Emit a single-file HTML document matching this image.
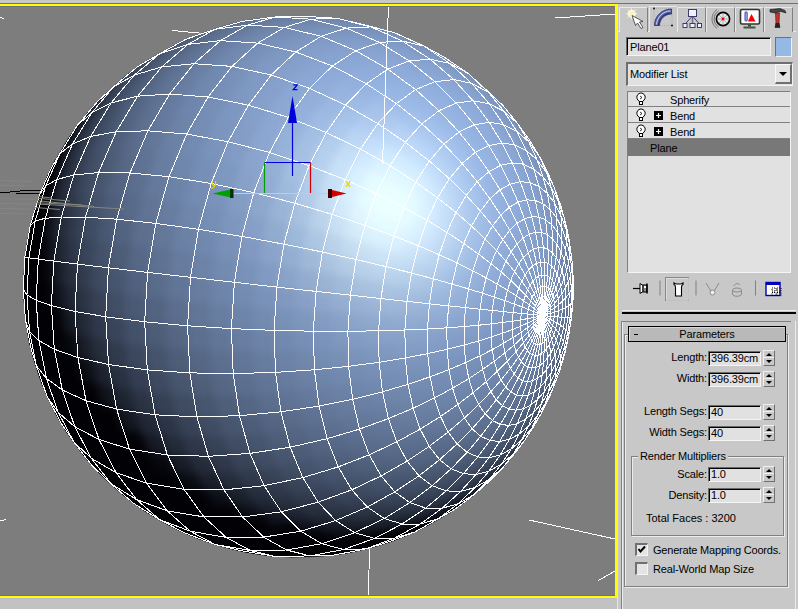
<!DOCTYPE html>
<html><head><meta charset="utf-8"><style>
html,body{margin:0;padding:0;}
body{width:798px;height:609px;position:relative;overflow:hidden;background:#c8c8c8;font-family:"Liberation Sans",sans-serif;font-size:11px;color:#000;}
#vp{position:absolute;left:0;top:7px;width:615px;height:589px;overflow:hidden;}
#vp svg{position:absolute;left:0;top:-7px;}
.a{position:absolute;}
.t{position:absolute;white-space:nowrap;line-height:13px;font-size:11px;letter-spacing:-0.15px;}
.r{text-align:right;}
.sunk{position:absolute;box-sizing:border-box;background:#e1e1e1;border-top:1px solid #6a6a6a;border-left:1px solid #6a6a6a;border-right:1px solid #f4f4f4;border-bottom:1px solid #f4f4f4;box-shadow:inset 1px 1px 0 #000;}
.spin{position:absolute;box-sizing:border-box;width:12px;height:16px;background:#c8c8c8;border-top:1px solid #f0f0f0;border-left:1px solid #f0f0f0;border-right:1px solid #707070;border-bottom:1px solid #707070;}
.spin:before{content:"";position:absolute;left:2px;top:2px;border-left:3px solid transparent;border-right:3px solid transparent;border-bottom:3px solid #000;}
.spin:after{content:"";position:absolute;left:2px;top:9px;border-left:3px solid transparent;border-right:3px solid transparent;border-top:3px solid #000;}
.spin i{position:absolute;left:0;top:6px;width:10px;height:1px;background:#f0f0f0;}
.tab{position:absolute;box-sizing:border-box;top:7px;width:29px;height:25px;border-top:1px solid #e8e8e8;border-left:1px solid #e8e8e8;border-right:1px solid #808080;background:#c8c8c8;}
.row{position:absolute;left:0;width:163px;height:16px;border-bottom:1px solid #808080;}
.hl{position:absolute;background:#ff0;}

</style></head><body>
<div id="vp"><svg width="615" height="609" viewBox="0 0 615 609">
<rect x="0" y="0" width="615" height="609" fill="#7d7d7d"/>
<g stroke="#fff" stroke-width="1" fill="none" shape-rendering="crispEdges">
<path d="M0 17.5L4 18.5"/>
<path d="M172.5 30.5L204 33.5"/>
<path d="M555 18L615 14"/>
<path d="M529 520L615 539"/>
<path d="M598.5 580.5L615 571"/>
<path d="M369.5 543L368.5 597"/>
<path d="M0 521L6 519.5"/>
</g>
<g stroke="#8a8a8a" stroke-width="1" fill="none" opacity="0.6">
<path d="M0 180.5L32 181.5"/><path d="M0 185.5L30 186"/><path d="M0 198.5L35 199.5"/><path d="M0 203.5L33 204"/><path d="M0 208.5L32 209"/><path d="M0 213.5L30 214"/>
</g>
<g stroke="#000" stroke-width="1" fill="none" shape-rendering="crispEdges">
<path d="M0 193L10 192L20 191L41 190"/>
<path d="M16 194L39 193.5"/>
</g>

<defs><filter id="bl" x="-5%" y="-5%" width="110%" height="110%" color-interpolation-filters="sRGB"><feGaussianBlur stdDeviation="4"/></filter>
<clipPath id="sc"><path d="M573.4 287.1 573.3 277.6 572.8 268.1 571.9 258.7 570.8 249.3 569.3 239.9 567.5 230.6 565.3 221.4 562.9 212.2 560.1 203.1 556.9 194.2 553.5 185.3 549.7 176.6 545.7 168.0 541.3 159.5 536.7 151.2 531.7 143.1 526.5 135.1 521.0 127.3 515.2 119.8 509.1 112.4 502.8 105.2 496.2 98.3 489.4 91.6 482.4 85.1 475.1 78.9 467.6 72.9 459.9 67.2 452.0 61.7 443.9 56.6 435.7 51.7 427.2 47.1 418.6 42.8 409.9 38.8 401.0 35.1 392.0 31.7 382.9 28.6 373.7 25.9 364.3 23.4 354.9 21.3 345.5 19.5 335.9 18.0 326.4 16.9 316.8 16.1 307.1 15.6 297.5 15.5 287.8 15.7 278.2 16.2 268.6 17.1 259.0 18.3 249.5 19.8 240.0 21.7 230.6 23.8 221.3 26.3 212.1 29.2 203.0 32.3 194.0 35.7 185.2 39.5 176.4 43.6 167.9 47.9 159.4 52.6 151.2 57.5 143.1 62.8 135.3 68.3 127.6 74.0 120.1 80.1 112.9 86.3 105.9 92.9 99.1 99.6 92.6 106.6 86.3 113.9 80.3 121.3 74.6 128.9 69.1 136.8 63.9 144.8 59.0 153.0 54.4 161.3 50.1 169.8 46.1 178.5 42.4 187.2 39.0 196.2 36.0 205.2 33.2 214.3 30.8 223.5 28.8 232.8 27.0 242.1 25.6 251.5 24.5 260.9 23.8 270.4 23.4 279.9 23.3 289.4 23.6 298.9 24.2 308.4 25.1 317.8 26.4 327.2 28.0 336.6 30.0 345.9 32.3 355.1 34.9 364.2 37.8 373.3 41.0 382.2 44.6 391.0 48.5 399.7 52.6 408.3 57.1 416.7 61.9 424.9 66.9 433.0 72.3 440.9 77.9 448.6 83.8 456.1 90.0 463.4 96.4 470.4 103.0 477.3 109.9 483.9 117.0 490.3 124.4 496.4 131.9 502.3 139.7 507.9 147.7 513.2 155.8 518.3 164.1 523.0 172.6 527.5 181.2 531.7 190.0 535.6 198.9 539.2 207.9 542.4 217.0 545.4 226.3 548.0 235.6 550.3 245.0 552.3 254.4 554.0 263.9 555.4 273.5 556.4 283.1 557.1 292.7 557.4 302.3 557.5 311.9 557.2 321.5 556.5 331.0 555.6 340.6 554.3 350.0 552.7 359.4 550.7 368.7 548.5 378.0 545.9 387.1 543.0 396.2 539.8 405.1 536.3 413.9 532.4 422.5 528.3 431.0 523.9 439.3 519.2 447.5 514.2 455.5 508.9 463.3 503.4 470.9 497.6 478.2 491.5 485.4 485.2 492.3 478.7 499.0 471.9 505.4 464.9 511.6 457.6 517.6 450.2 523.2 442.5 528.6 434.7 533.7 426.7 538.6 418.5 543.1 410.2 547.3 401.7 551.3 393.0 554.9 384.2 558.2 375.4 561.2 366.4 563.9 357.3 566.2 348.1 568.2 338.8 569.9 329.5 571.3 320.1 572.3 310.7 573.0 301.3 573.3 291.8 Z"/></clipPath></defs>
<g clip-path="url(#sc)"><g id="fc" stroke-width="0.8">
<path d="M542 315 542 315 540 316 540 315" fill="#768eb6" stroke="#768eb6"/>
<path d="M542 315 542 315 540 316 540 316" fill="#768eb6" stroke="#768eb6"/>
<path d="M540 315 540 316 537 316 537 315" fill="#7790b8" stroke="#7790b8"/>
<path d="M540 316 540 316 537 317 537 316" fill="#7790b8" stroke="#7790b8"/>
<path d="M542 315 542 315 540 317 540 316" fill="#768eb6" stroke="#768eb6"/>
<path d="M542 315 542 315 540 317 540 317" fill="#768eb6" stroke="#768eb6"/>
<path d="M540 316 540 317 537 318 537 317" fill="#778fb7" stroke="#778fb7"/>
<path d="M540 317 540 317 537 318 537 318" fill="#778fb7" stroke="#778fb7"/>
<path d="M542 315 542 315 540 317 540 317" fill="#768eb6" stroke="#768eb6"/>
<path d="M542 315 542 315 540 318 540 317" fill="#768eb6" stroke="#768eb6"/>
<path d="M540 317 540 317 537 319 537 318" fill="#778fb7" stroke="#778fb7"/>
<path d="M540 317 540 318 537 320 537 319" fill="#778fb7" stroke="#778fb7"/>
<path d="M542 315 542 315 540 318 540 318" fill="#768eb6" stroke="#768eb6"/>
<path d="M542 315 542 315 540 319 540 318" fill="#768eb5" stroke="#768eb5"/>
<path d="M540 318 540 318 537 321 537 320" fill="#768fb6" stroke="#768fb6"/>
<path d="M540 318 540 319 538 322 537 321" fill="#768eb6" stroke="#768eb6"/>
<path d="M542 315 542 315 540 319 540 319" fill="#768eb5" stroke="#768eb5"/>
<path d="M542 315 542 315 540 319 540 319" fill="#768eb5" stroke="#768eb5"/>
<path d="M540 319 540 319 538 322 538 322" fill="#768eb6" stroke="#768eb6"/>
<path d="M540 319 540 319 538 323 538 322" fill="#768eb5" stroke="#768eb5"/>
<path d="M542 315 542 315 540 320 540 319" fill="#768eb5" stroke="#768eb5"/>
<path d="M542 315 542 315 540 320 540 320" fill="#768eb5" stroke="#768eb5"/>
<path d="M540 319 540 320 538 324 538 323" fill="#768eb5" stroke="#768eb5"/>
<path d="M540 320 540 320 538 324 538 324" fill="#758db5" stroke="#758db5"/>
<path d="M542 315 542 315 541 320 540 320" fill="#758eb5" stroke="#758eb5"/>
<path d="M542 315 542 315 541 320 541 320" fill="#758db5" stroke="#758db5"/>
<path d="M540 320 541 320 539 325 538 324" fill="#758db4" stroke="#758db4"/>
<path d="M541 320 541 320 539 325 539 325" fill="#758db4" stroke="#758db4"/>
<path d="M542 315 542 315 541 320 541 320" fill="#758db5" stroke="#758db5"/>
<path d="M542 315 542 315 541 321 541 320" fill="#758db5" stroke="#758db5"/>
<path d="M541 320 541 320 539 325 539 325" fill="#758db4" stroke="#758db4"/>
<path d="M541 320 541 321 540 326 539 325" fill="#758cb4" stroke="#758cb4"/>
<path d="M542 315 542 315 541 321 541 321" fill="#758db5" stroke="#758db5"/>
<path d="M542 315 542 315 541 321 541 321" fill="#758db4" stroke="#758db4"/>
<path d="M541 321 541 321 540 326 540 326" fill="#748cb3" stroke="#748cb3"/>
<path d="M541 321 541 321 540 326 540 326" fill="#748cb3" stroke="#748cb3"/>
<path d="M542 315 542 315 542 321 541 321" fill="#758db4" stroke="#758db4"/>
<path d="M542 315 542 315 542 321 542 321" fill="#758db4" stroke="#758db4"/>
<path d="M541 321 542 321 541 326 540 326" fill="#748cb3" stroke="#748cb3"/>
<path d="M542 321 542 321 541 326 541 326" fill="#748cb3" stroke="#748cb3"/>
<path d="M542 315 542 315 542 321 542 321" fill="#758db4" stroke="#758db4"/>
<path d="M542 315 542 315 542 321 542 321" fill="#758db4" stroke="#758db4"/>
<path d="M542 321 542 321 541 326 541 326" fill="#748cb2" stroke="#748cb2"/>
<path d="M542 321 542 321 542 326 541 326" fill="#748bb2" stroke="#748bb2"/>
<path d="M542 315 542 315 542 321 542 321" fill="#758db4" stroke="#758db4"/>
<path d="M542 315 542 315 543 321 542 321" fill="#758db4" stroke="#758db4"/>
<path d="M542 321 542 321 542 326 542 326" fill="#738bb2" stroke="#738bb2"/>
<path d="M542 321 543 321 543 326 542 326" fill="#738bb2" stroke="#738bb2"/>
<path d="M542 315 542 315 543 321 543 321" fill="#758db4" stroke="#758db4"/>
<path d="M542 315 542 315 543 320 543 321" fill="#758db4" stroke="#758db4"/>
<path d="M543 321 543 321 543 326 543 326" fill="#738bb2" stroke="#738bb2"/>
<path d="M543 321 543 320 543 325 543 326" fill="#738bb2" stroke="#738bb2"/>
<path d="M542 315 542 315 543 320 543 320" fill="#758db4" stroke="#758db4"/>
<path d="M542 315 542 315 543 320 543 320" fill="#758db4" stroke="#758db4"/>
<path d="M543 320 543 320 544 325 543 325" fill="#738bb1" stroke="#738bb1"/>
<path d="M543 320 543 320 544 325 544 325" fill="#738bb1" stroke="#738bb1"/>
<path d="M542 315 542 315 544 320 543 320" fill="#758db4" stroke="#758db4"/>
<path d="M542 315 542 315 544 320 544 320" fill="#758db4" stroke="#758db4"/>
<path d="M543 320 544 320 545 324 544 325" fill="#738bb1" stroke="#738bb1"/>
<path d="M544 320 544 320 545 324 545 324" fill="#738bb1" stroke="#738bb1"/>
<path d="M542 315 542 315 544 319 544 320" fill="#758db4" stroke="#758db4"/>
<path d="M542 315 542 315 544 319 544 319" fill="#758db4" stroke="#758db4"/>
<path d="M544 320 544 319 545 323 545 324" fill="#738bb1" stroke="#738bb1"/>
<path d="M544 319 544 319 546 322 545 323" fill="#738bb1" stroke="#738bb1"/>
<path d="M542 315 542 315 544 319 544 319" fill="#758db4" stroke="#758db4"/>
<path d="M542 315 542 315 544 318 544 319" fill="#758db4" stroke="#758db4"/>
<path d="M544 319 544 319 546 322 546 322" fill="#738bb1" stroke="#738bb1"/>
<path d="M544 319 544 318 546 321 546 322" fill="#738bb1" stroke="#738bb1"/>
<path d="M542 315 542 315 545 318 544 318" fill="#758db4" stroke="#758db4"/>
<path d="M542 315 542 315 545 317 545 318" fill="#758db4" stroke="#758db4"/>
<path d="M544 318 545 318 546 320 546 321" fill="#738bb1" stroke="#738bb1"/>
<path d="M545 318 545 317 547 319 546 320" fill="#738bb2" stroke="#738bb2"/>
<path d="M542 315 542 315 545 317 545 317" fill="#758db4" stroke="#758db4"/>
<path d="M542 315 542 315 545 317 545 317" fill="#758db4" stroke="#758db4"/>
<path d="M545 317 545 317 547 318 547 319" fill="#738bb2" stroke="#738bb2"/>
<path d="M545 317 545 317 547 318 547 318" fill="#738bb2" stroke="#738bb2"/>
<path d="M542 315 542 315 545 316 545 317" fill="#758db4" stroke="#758db4"/>
<path d="M542 315 542 315 545 316 545 316" fill="#758db4" stroke="#758db4"/>
<path d="M545 317 545 316 547 317 547 318" fill="#738bb2" stroke="#738bb2"/>
<path d="M545 316 545 316 547 316 547 317" fill="#748bb2" stroke="#748bb2"/>
<path d="M542 315 542 315 545 315 545 316" fill="#758db4" stroke="#758db4"/>
<path d="M542 315 542 315 545 315 545 315" fill="#758db4" stroke="#758db4"/>
<path d="M545 316 545 315 547 315 547 316" fill="#748cb2" stroke="#748cb2"/>
<path d="M545 315 545 315 547 314 547 315" fill="#748cb3" stroke="#748cb3"/>
<path d="M542 315 542 315 545 314 545 315" fill="#758db4" stroke="#758db4"/>
<path d="M542 315 542 315 545 314 545 314" fill="#758db4" stroke="#758db4"/>
<path d="M545 315 545 314 547 313 547 314" fill="#748cb3" stroke="#748cb3"/>
<path d="M545 314 545 314 547 313 547 313" fill="#748cb3" stroke="#748cb3"/>
<path d="M542 315 542 315 545 314 545 314" fill="#758db5" stroke="#758db5"/>
<path d="M542 315 542 315 545 313 545 314" fill="#758db5" stroke="#758db5"/>
<path d="M545 314 545 314 547 312 547 313" fill="#748cb3" stroke="#748cb3"/>
<path d="M545 314 545 313 547 311 547 312" fill="#758db4" stroke="#758db4"/>
<path d="M542 315 542 315 545 313 545 313" fill="#758db5" stroke="#758db5"/>
<path d="M542 315 542 315 545 312 545 313" fill="#758db5" stroke="#758db5"/>
<path d="M545 313 545 313 547 310 547 311" fill="#758db4" stroke="#758db4"/>
<path d="M545 313 545 312 547 309 547 310" fill="#758db4" stroke="#758db4"/>
<path d="M542 315 542 315 545 312 545 312" fill="#758eb5" stroke="#758eb5"/>
<path d="M542 315 542 315 545 312 545 312" fill="#768eb5" stroke="#768eb5"/>
<path d="M545 312 545 312 547 309 547 309" fill="#758db4" stroke="#758db4"/>
<path d="M545 312 545 312 547 308 547 309" fill="#758db5" stroke="#758db5"/>
<path d="M542 315 542 315 545 312 545 312" fill="#768eb5" stroke="#768eb5"/>
<path d="M542 315 542 315 544 311 545 312" fill="#768eb5" stroke="#768eb5"/>
<path d="M545 312 545 312 547 308 547 308" fill="#768eb5" stroke="#768eb5"/>
<path d="M545 312 544 311 546 307 547 308" fill="#768eb5" stroke="#768eb5"/>
<path d="M542 315 542 315 544 311 544 311" fill="#768eb5" stroke="#768eb5"/>
<path d="M542 315 542 315 544 311 544 311" fill="#768eb5" stroke="#768eb5"/>
<path d="M544 311 544 311 546 306 546 307" fill="#768eb6" stroke="#768eb6"/>
<path d="M544 311 544 311 546 306 546 306" fill="#768eb6" stroke="#768eb6"/>
<path d="M542 315 542 315 544 311 544 311" fill="#768eb6" stroke="#768eb6"/>
<path d="M542 315 542 315 544 310 544 311" fill="#768eb6" stroke="#768eb6"/>
<path d="M544 311 544 311 545 306 546 306" fill="#768fb6" stroke="#768fb6"/>
<path d="M544 311 544 310 545 305 545 306" fill="#778fb7" stroke="#778fb7"/>
<path d="M542 315 542 315 544 310 544 310" fill="#768eb6" stroke="#768eb6"/>
<path d="M542 315 542 315 543 310 544 310" fill="#768eb6" stroke="#768eb6"/>
<path d="M544 310 544 310 545 305 545 305" fill="#778fb7" stroke="#778fb7"/>
<path d="M544 310 543 310 544 305 545 305" fill="#778fb7" stroke="#778fb7"/>
<path d="M542 315 542 315 543 310 543 310" fill="#768eb6" stroke="#768eb6"/>
<path d="M542 315 542 315 543 310 543 310" fill="#768eb6" stroke="#768eb6"/>
<path d="M543 310 543 310 544 305 544 305" fill="#778fb7" stroke="#778fb7"/>
<path d="M543 310 543 310 544 305 544 305" fill="#7790b8" stroke="#7790b8"/>
<path d="M542 315 542 315 543 310 543 310" fill="#768eb6" stroke="#768eb6"/>
<path d="M542 315 542 315 543 310 543 310" fill="#768fb6" stroke="#768fb6"/>
<path d="M543 310 543 310 543 305 544 305" fill="#7790b8" stroke="#7790b8"/>
<path d="M543 310 543 310 543 305 543 305" fill="#7790b8" stroke="#7790b8"/>
<path d="M542 315 542 315 542 310 543 310" fill="#768fb6" stroke="#768fb6"/>
<path d="M542 315 542 315 542 310 542 310" fill="#768fb6" stroke="#768fb6"/>
<path d="M543 310 542 310 542 305 543 305" fill="#7890b8" stroke="#7890b8"/>
<path d="M542 310 542 310 542 305 542 305" fill="#7890b8" stroke="#7890b8"/>
<path d="M542 315 542 315 542 310 542 310" fill="#768fb6" stroke="#768fb6"/>
<path d="M542 315 542 315 542 311 542 310" fill="#768fb6" stroke="#768fb6"/>
<path d="M542 310 542 310 542 305 542 305" fill="#7890b8" stroke="#7890b8"/>
<path d="M542 310 542 311 541 305 542 305" fill="#7891b9" stroke="#7891b9"/>
<path d="M542 315 542 315 542 311 542 311" fill="#768fb6" stroke="#768fb6"/>
<path d="M542 315 542 315 542 311 542 311" fill="#768fb6" stroke="#768fb6"/>
<path d="M542 311 542 311 541 306 541 305" fill="#7891b9" stroke="#7891b9"/>
<path d="M542 311 542 311 540 306 541 306" fill="#7891b9" stroke="#7891b9"/>
<path d="M542 315 542 315 541 311 542 311" fill="#768fb6" stroke="#768fb6"/>
<path d="M542 315 542 315 541 311 541 311" fill="#768fb6" stroke="#768fb6"/>
<path d="M542 311 541 311 540 307 540 306" fill="#7891b9" stroke="#7891b9"/>
<path d="M541 311 541 311 540 307 540 307" fill="#7891b9" stroke="#7891b9"/>
<path d="M542 315 542 315 541 312 541 311" fill="#768fb6" stroke="#768fb6"/>
<path d="M542 315 542 315 541 312 541 312" fill="#768fb6" stroke="#768fb6"/>
<path d="M541 311 541 312 539 308 540 307" fill="#7891b9" stroke="#7891b9"/>
<path d="M541 312 541 312 539 309 539 308" fill="#7891b9" stroke="#7891b9"/>
<path d="M542 315 542 315 541 312 541 312" fill="#768fb6" stroke="#768fb6"/>
<path d="M542 315 542 315 541 313 541 312" fill="#768fb6" stroke="#768fb6"/>
<path d="M541 312 541 312 539 309 539 309" fill="#7891b9" stroke="#7891b9"/>
<path d="M541 312 541 313 538 310 539 309" fill="#7891b9" stroke="#7891b9"/>
<path d="M542 315 542 315 540 313 541 313" fill="#768fb6" stroke="#768fb6"/>
<path d="M542 315 542 315 540 314 540 313" fill="#768fb6" stroke="#768fb6"/>
<path d="M541 313 540 313 538 311 538 310" fill="#7891b9" stroke="#7891b9"/>
<path d="M540 313 540 314 538 312 538 311" fill="#7891b9" stroke="#7891b9"/>
<path d="M542 315 542 315 540 314 540 314" fill="#768fb6" stroke="#768fb6"/>
<path d="M542 315 542 315 540 314 540 314" fill="#768fb6" stroke="#768fb6"/>
<path d="M540 314 540 314 538 312 538 312" fill="#7890b8" stroke="#7890b8"/>
<path d="M540 314 540 314 538 313 538 312" fill="#7890b8" stroke="#7890b8"/>
<path d="M542 315 542 315 540 315 540 314" fill="#768fb6" stroke="#768fb6"/>
<path d="M542 315 542 315 540 315 540 315" fill="#768fb6" stroke="#768fb6"/>
<path d="M540 314 540 315 537 314 538 313" fill="#7890b8" stroke="#7890b8"/>
<path d="M540 315 540 315 537 315 537 314" fill="#7790b8" stroke="#7790b8"/>
<path d="M537 315 537 316 535 316 535 315" fill="#7891b9" stroke="#7891b9"/>
<path d="M537 316 537 317 535 317 535 316" fill="#7891b9" stroke="#7891b9"/>
<path d="M535 315 535 316 533 316 533 315" fill="#7992ba" stroke="#7992ba"/>
<path d="M535 316 535 317 533 318 533 316" fill="#7992ba" stroke="#7992ba"/>
<path d="M537 317 537 318 535 318 535 317" fill="#7890b8" stroke="#7890b8"/>
<path d="M537 318 537 318 535 319 535 318" fill="#7890b8" stroke="#7890b8"/>
<path d="M535 317 535 318 533 319 533 318" fill="#7891b9" stroke="#7891b9"/>
<path d="M535 318 535 319 533 321 533 319" fill="#7891b9" stroke="#7891b9"/>
<path d="M537 318 537 319 535 321 535 319" fill="#7790b8" stroke="#7790b8"/>
<path d="M537 319 537 320 535 322 535 321" fill="#778fb7" stroke="#778fb7"/>
<path d="M535 319 535 321 533 322 533 321" fill="#7890b8" stroke="#7890b8"/>
<path d="M535 321 535 322 533 323 533 322" fill="#7790b8" stroke="#7790b8"/>
<path d="M537 320 537 321 535 323 535 322" fill="#778fb7" stroke="#778fb7"/>
<path d="M537 321 538 322 536 324 535 323" fill="#768fb6" stroke="#768fb6"/>
<path d="M535 322 535 323 533 325 533 323" fill="#778fb7" stroke="#778fb7"/>
<path d="M535 323 536 324 534 326 533 325" fill="#778fb7" stroke="#778fb7"/>
<path d="M538 322 538 322 536 325 536 324" fill="#768eb6" stroke="#768eb6"/>
<path d="M538 322 538 323 536 326 536 325" fill="#768eb5" stroke="#768eb5"/>
<path d="M536 324 536 325 534 327 534 326" fill="#768eb6" stroke="#768eb6"/>
<path d="M536 325 536 326 534 328 534 327" fill="#768eb5" stroke="#768eb5"/>
<path d="M538 323 538 324 536 326 536 326" fill="#758eb5" stroke="#758eb5"/>
<path d="M538 324 538 324 537 327 536 326" fill="#758db4" stroke="#758db4"/>
<path d="M536 326 536 326 535 329 534 328" fill="#758db5" stroke="#758db5"/>
<path d="M536 326 537 327 535 330 535 329" fill="#758db4" stroke="#758db4"/>
<path d="M538 324 539 325 537 328 537 327" fill="#758db4" stroke="#758db4"/>
<path d="M539 325 539 325 537 328 537 328" fill="#758cb4" stroke="#758cb4"/>
<path d="M537 327 537 328 536 331 535 330" fill="#758cb4" stroke="#758cb4"/>
<path d="M537 328 537 328 536 332 536 331" fill="#748cb3" stroke="#748cb3"/>
<path d="M539 325 539 325 538 329 537 328" fill="#748cb3" stroke="#748cb3"/>
<path d="M539 325 540 326 538 329 538 329" fill="#748cb3" stroke="#748cb3"/>
<path d="M537 328 538 329 537 333 536 332" fill="#748cb2" stroke="#748cb2"/>
<path d="M538 329 538 329 537 333 537 333" fill="#738bb2" stroke="#738bb2"/>
<path d="M540 326 540 326 539 330 538 329" fill="#748bb2" stroke="#748bb2"/>
<path d="M540 326 540 326 539 330 539 330" fill="#738bb2" stroke="#738bb2"/>
<path d="M538 329 539 330 538 334 537 333" fill="#738bb1" stroke="#738bb1"/>
<path d="M539 330 539 330 538 334 538 334" fill="#738ab1" stroke="#738ab1"/>
<path d="M540 326 541 326 540 330 539 330" fill="#738bb1" stroke="#738bb1"/>
<path d="M541 326 541 326 540 330 540 330" fill="#738ab1" stroke="#738ab1"/>
<path d="M539 330 540 330 539 334 538 334" fill="#728ab0" stroke="#728ab0"/>
<path d="M540 330 540 330 540 334 539 334" fill="#7289b0" stroke="#7289b0"/>
<path d="M541 326 541 326 541 330 540 330" fill="#738ab1" stroke="#738ab1"/>
<path d="M541 326 542 326 541 330 541 330" fill="#728ab0" stroke="#728ab0"/>
<path d="M540 330 541 330 540 334 540 334" fill="#7289af" stroke="#7289af"/>
<path d="M541 330 541 330 541 334 540 334" fill="#7189af" stroke="#7189af"/>
<path d="M542 326 542 326 542 330 541 330" fill="#728ab0" stroke="#728ab0"/>
<path d="M542 326 543 326 543 330 542 330" fill="#7289b0" stroke="#7289b0"/>
<path d="M541 330 542 330 542 334 541 334" fill="#7188ae" stroke="#7188ae"/>
<path d="M542 330 543 330 542 334 542 334" fill="#7188ae" stroke="#7188ae"/>
<path d="M543 326 543 326 543 329 543 330" fill="#7289b0" stroke="#7289b0"/>
<path d="M543 326 543 325 544 329 543 329" fill="#7289af" stroke="#7289af"/>
<path d="M543 330 543 329 543 333 542 334" fill="#7188ae" stroke="#7188ae"/>
<path d="M543 329 544 329 544 333 543 333" fill="#7188ae" stroke="#7188ae"/>
<path d="M543 325 544 325 544 328 544 329" fill="#7289af" stroke="#7289af"/>
<path d="M544 325 544 325 545 328 544 328" fill="#7289af" stroke="#7289af"/>
<path d="M544 329 544 328 545 332 544 333" fill="#7087ad" stroke="#7087ad"/>
<path d="M544 328 545 328 545 331 545 332" fill="#7087ad" stroke="#7087ad"/>
<path d="M544 325 545 324 545 327 545 328" fill="#7289af" stroke="#7289af"/>
<path d="M545 324 545 324 546 326 545 327" fill="#7189af" stroke="#7189af"/>
<path d="M545 328 545 327 546 330 545 331" fill="#7087ad" stroke="#7087ad"/>
<path d="M545 327 546 326 546 329 546 330" fill="#7087ad" stroke="#7087ad"/>
<path d="M545 324 545 323 546 326 546 326" fill="#7189af" stroke="#7189af"/>
<path d="M545 323 546 322 547 325 546 326" fill="#7189af" stroke="#7189af"/>
<path d="M546 326 546 326 547 328 546 329" fill="#7087ad" stroke="#7087ad"/>
<path d="M546 326 547 325 548 327 547 328" fill="#7087ad" stroke="#7087ad"/>
<path d="M546 322 546 322 547 324 547 325" fill="#7289af" stroke="#7289af"/>
<path d="M546 322 546 321 547 323 547 324" fill="#7289af" stroke="#7289af"/>
<path d="M547 325 547 324 548 326 548 327" fill="#7087ad" stroke="#7087ad"/>
<path d="M547 324 547 323 549 325 548 326" fill="#7087ad" stroke="#7087ad"/>
<path d="M546 321 546 320 548 322 547 323" fill="#7289af" stroke="#7289af"/>
<path d="M546 320 547 319 548 321 548 322" fill="#7289af" stroke="#7289af"/>
<path d="M547 323 548 322 549 323 549 325" fill="#7087ad" stroke="#7087ad"/>
<path d="M548 322 548 321 549 322 549 323" fill="#7188ae" stroke="#7188ae"/>
<path d="M547 319 547 318 548 320 548 321" fill="#7289b0" stroke="#7289b0"/>
<path d="M547 318 547 318 549 318 548 320" fill="#7289b0" stroke="#7289b0"/>
<path d="M548 321 548 320 550 321 549 322" fill="#7188ae" stroke="#7188ae"/>
<path d="M548 320 549 318 550 319 550 321" fill="#7188ae" stroke="#7188ae"/>
<path d="M547 318 547 317 549 317 549 318" fill="#728ab0" stroke="#728ab0"/>
<path d="M547 317 547 316 549 316 549 317" fill="#728ab0" stroke="#728ab0"/>
<path d="M549 318 549 317 550 318 550 319" fill="#7188ae" stroke="#7188ae"/>
<path d="M549 317 549 316 550 316 550 318" fill="#7189af" stroke="#7189af"/>
<path d="M547 316 547 315 549 315 549 316" fill="#738ab1" stroke="#738ab1"/>
<path d="M547 315 547 314 549 314 549 315" fill="#738ab1" stroke="#738ab1"/>
<path d="M549 316 549 315 551 315 550 316" fill="#7289af" stroke="#7289af"/>
<path d="M549 315 549 314 551 313 551 315" fill="#7289b0" stroke="#7289b0"/>
<path d="M547 314 547 313 549 313 549 314" fill="#738bb1" stroke="#738bb1"/>
<path d="M547 313 547 313 549 312 549 313" fill="#738bb2" stroke="#738bb2"/>
<path d="M549 314 549 313 551 312 551 313" fill="#728ab0" stroke="#728ab0"/>
<path d="M549 313 549 312 551 310 551 312" fill="#738ab1" stroke="#738ab1"/>
<path d="M547 313 547 312 549 310 549 312" fill="#748bb2" stroke="#748bb2"/>
<path d="M547 312 547 311 549 309 549 310" fill="#748cb3" stroke="#748cb3"/>
<path d="M549 312 549 310 551 309 551 310" fill="#738bb1" stroke="#738bb1"/>
<path d="M549 310 549 309 551 308 551 309" fill="#738bb2" stroke="#738bb2"/>
<path d="M547 311 547 310 549 308 549 309" fill="#748cb3" stroke="#748cb3"/>
<path d="M547 310 547 309 549 307 549 308" fill="#758cb4" stroke="#758cb4"/>
<path d="M549 309 549 308 550 306 551 308" fill="#748cb2" stroke="#748cb2"/>
<path d="M549 308 549 307 550 305 550 306" fill="#748cb3" stroke="#748cb3"/>
<path d="M547 309 547 309 548 306 549 307" fill="#758db4" stroke="#758db4"/>
<path d="M547 309 547 308 548 305 548 306" fill="#758db5" stroke="#758db5"/>
<path d="M549 307 548 306 550 304 550 305" fill="#758db4" stroke="#758db4"/>
<path d="M548 306 548 305 550 303 550 304" fill="#758db4" stroke="#758db4"/>
<path d="M547 308 547 308 548 305 548 305" fill="#768eb5" stroke="#768eb5"/>
<path d="M547 308 546 307 548 304 548 305" fill="#768eb5" stroke="#768eb5"/>
<path d="M548 305 548 305 549 302 550 303" fill="#758eb5" stroke="#758eb5"/>
<path d="M548 305 548 304 549 301 549 302" fill="#768eb6" stroke="#768eb6"/>
<path d="M546 307 546 306 547 303 548 304" fill="#768eb6" stroke="#768eb6"/>
<path d="M546 306 546 306 547 303 547 303" fill="#768fb6" stroke="#768fb6"/>
<path d="M548 304 547 303 548 300 549 301" fill="#768fb6" stroke="#768fb6"/>
<path d="M547 303 547 303 548 299 548 300" fill="#778fb7" stroke="#778fb7"/>
<path d="M546 306 545 306 546 302 547 303" fill="#778fb7" stroke="#778fb7"/>
<path d="M545 306 545 305 546 302 546 302" fill="#778fb7" stroke="#778fb7"/>
<path d="M547 303 546 302 547 298 548 299" fill="#778fb7" stroke="#778fb7"/>
<path d="M546 302 546 302 547 298 547 298" fill="#7790b8" stroke="#7790b8"/>
<path d="M545 305 545 305 545 301 546 302" fill="#7790b8" stroke="#7790b8"/>
<path d="M545 305 544 305 545 301 545 301" fill="#7890b8" stroke="#7890b8"/>
<path d="M546 302 545 301 546 297 547 298" fill="#7890b8" stroke="#7890b8"/>
<path d="M545 301 545 301 545 297 546 297" fill="#7891b9" stroke="#7891b9"/>
<path d="M544 305 544 305 544 301 545 301" fill="#7890b9" stroke="#7890b9"/>
<path d="M544 305 544 305 544 301 544 301" fill="#7891b9" stroke="#7891b9"/>
<path d="M545 301 544 301 545 297 545 297" fill="#7991ba" stroke="#7991ba"/>
<path d="M544 301 544 301 544 297 545 297" fill="#7992ba" stroke="#7992ba"/>
<path d="M544 305 543 305 543 301 544 301" fill="#7891b9" stroke="#7891b9"/>
<path d="M543 305 543 305 543 301 543 301" fill="#7991ba" stroke="#7991ba"/>
<path d="M544 301 543 301 543 297 544 297" fill="#7992ba" stroke="#7992ba"/>
<path d="M543 301 543 301 543 297 543 297" fill="#7992bb" stroke="#7992bb"/>
<path d="M543 305 542 305 542 301 543 301" fill="#7992ba" stroke="#7992ba"/>
<path d="M542 305 542 305 542 301 542 301" fill="#7992ba" stroke="#7992ba"/>
<path d="M543 301 542 301 542 297 543 297" fill="#7a93bb" stroke="#7a93bb"/>
<path d="M542 301 542 301 541 297 542 297" fill="#7a93bc" stroke="#7a93bc"/>
<path d="M542 305 542 305 541 301 542 301" fill="#7992ba" stroke="#7992ba"/>
<path d="M542 305 541 305 541 302 541 301" fill="#7992bb" stroke="#7992bb"/>
<path d="M542 301 541 301 541 298 541 297" fill="#7a93bc" stroke="#7a93bc"/>
<path d="M541 301 541 302 540 298 541 298" fill="#7a93bc" stroke="#7a93bc"/>
<path d="M541 305 541 306 540 302 541 302" fill="#7992bb" stroke="#7992bb"/>
<path d="M541 306 540 306 540 303 540 302" fill="#7992bb" stroke="#7992bb"/>
<path d="M541 302 540 302 539 299 540 298" fill="#7a94bc" stroke="#7a94bc"/>
<path d="M540 302 540 303 539 300 539 299" fill="#7b94bd" stroke="#7b94bd"/>
<path d="M540 306 540 307 539 304 540 303" fill="#7992bb" stroke="#7992bb"/>
<path d="M540 307 540 307 539 304 539 304" fill="#7992bb" stroke="#7992bb"/>
<path d="M540 303 539 304 538 300 539 300" fill="#7b94bd" stroke="#7b94bd"/>
<path d="M539 304 539 304 537 301 538 300" fill="#7b94bd" stroke="#7b94bd"/>
<path d="M540 307 539 308 538 305 539 304" fill="#7992bb" stroke="#7992bb"/>
<path d="M539 308 539 309 538 306 538 305" fill="#7992bb" stroke="#7992bb"/>
<path d="M539 304 538 305 537 302 537 301" fill="#7b94bd" stroke="#7b94bd"/>
<path d="M538 305 538 306 536 304 537 302" fill="#7b94bd" stroke="#7b94bd"/>
<path d="M539 309 539 309 537 307 538 306" fill="#7992bb" stroke="#7992bb"/>
<path d="M539 309 538 310 537 308 537 307" fill="#7992bb" stroke="#7992bb"/>
<path d="M538 306 537 307 536 305 536 304" fill="#7b94bd" stroke="#7b94bd"/>
<path d="M537 307 537 308 535 306 536 305" fill="#7b94bd" stroke="#7b94bd"/>
<path d="M538 310 538 311 537 309 537 308" fill="#7992bb" stroke="#7992bb"/>
<path d="M538 311 538 312 536 310 537 309" fill="#7992bb" stroke="#7992bb"/>
<path d="M537 308 537 309 535 307 535 306" fill="#7a94bc" stroke="#7a94bc"/>
<path d="M537 309 536 310 534 309 535 307" fill="#7a93bc" stroke="#7a93bc"/>
<path d="M538 312 538 312 536 311 536 310" fill="#7992ba" stroke="#7992ba"/>
<path d="M538 312 538 313 536 312 536 311" fill="#7992ba" stroke="#7992ba"/>
<path d="M536 310 536 311 534 310 534 309" fill="#7a93bc" stroke="#7a93bc"/>
<path d="M536 311 536 312 534 312 534 310" fill="#7a93bc" stroke="#7a93bc"/>
<path d="M538 313 537 314 535 314 536 312" fill="#7991ba" stroke="#7991ba"/>
<path d="M537 314 537 315 535 315 535 314" fill="#7991ba" stroke="#7991ba"/>
<path d="M536 312 535 314 533 313 534 312" fill="#7a93bb" stroke="#7a93bb"/>
<path d="M535 314 535 315 533 315 533 313" fill="#7992bb" stroke="#7992bb"/>
<path d="M533 315 533 316 530 316 530 314" fill="#7a93bc" stroke="#7a93bc"/>
<path d="M533 316 533 318 530 318 530 316" fill="#7a93bb" stroke="#7a93bb"/>
<path d="M530 314 530 316 527 316 528 314" fill="#7b94bd" stroke="#7b94bd"/>
<path d="M530 316 530 318 527 319 527 316" fill="#7a94bc" stroke="#7a94bc"/>
<path d="M533 318 533 319 530 320 530 318" fill="#7992bb" stroke="#7992bb"/>
<path d="M533 319 533 321 530 322 530 320" fill="#7992ba" stroke="#7992ba"/>
<path d="M530 318 530 320 527 321 527 319" fill="#7a93bc" stroke="#7a93bc"/>
<path d="M530 320 530 322 527 323 527 321" fill="#7992bb" stroke="#7992bb"/>
<path d="M533 321 533 322 530 324 530 322" fill="#7891b9" stroke="#7891b9"/>
<path d="M533 322 533 323 530 325 530 324" fill="#7890b8" stroke="#7890b8"/>
<path d="M530 322 530 324 527 326 527 323" fill="#7992ba" stroke="#7992ba"/>
<path d="M530 324 530 325 528 328 527 326" fill="#7891b9" stroke="#7891b9"/>
<path d="M533 323 533 325 531 327 530 325" fill="#7790b8" stroke="#7790b8"/>
<path d="M533 325 534 326 531 329 531 327" fill="#778fb7" stroke="#778fb7"/>
<path d="M530 325 531 327 528 330 528 328" fill="#7890b8" stroke="#7890b8"/>
<path d="M531 327 531 329 528 332 528 330" fill="#778fb7" stroke="#778fb7"/>
<path d="M534 326 534 327 531 330 531 329" fill="#768fb6" stroke="#768fb6"/>
<path d="M534 327 534 328 532 332 531 330" fill="#768eb5" stroke="#768eb5"/>
<path d="M531 329 531 330 529 334 528 332" fill="#768fb6" stroke="#768fb6"/>
<path d="M531 330 532 332 529 335 529 334" fill="#768eb5" stroke="#768eb5"/>
<path d="M534 328 535 329 532 333 532 332" fill="#758db5" stroke="#758db5"/>
<path d="M535 329 535 330 533 334 532 333" fill="#758db4" stroke="#758db4"/>
<path d="M532 332 532 333 530 337 529 335" fill="#758db4" stroke="#758db4"/>
<path d="M532 333 533 334 530 338 530 337" fill="#748cb3" stroke="#748cb3"/>
<path d="M535 330 536 331 533 335 533 334" fill="#748cb3" stroke="#748cb3"/>
<path d="M536 331 536 332 534 336 533 335" fill="#748bb2" stroke="#748bb2"/>
<path d="M533 334 533 335 531 340 530 338" fill="#748cb2" stroke="#748cb2"/>
<path d="M533 335 534 336 532 341 531 340" fill="#738bb1" stroke="#738bb1"/>
<path d="M536 332 537 333 535 337 534 336" fill="#738bb2" stroke="#738bb2"/>
<path d="M537 333 537 333 535 338 535 337" fill="#738ab1" stroke="#738ab1"/>
<path d="M534 336 535 337 533 342 532 341" fill="#738ab1" stroke="#738ab1"/>
<path d="M535 337 535 338 534 343 533 342" fill="#7289b0" stroke="#7289b0"/>
<path d="M537 333 538 334 536 339 535 338" fill="#728ab0" stroke="#728ab0"/>
<path d="M538 334 538 334 537 339 536 339" fill="#7289af" stroke="#7289af"/>
<path d="M535 338 536 339 535 344 534 343" fill="#7189af" stroke="#7189af"/>
<path d="M536 339 537 339 536 344 535 344" fill="#7188ae" stroke="#7188ae"/>
<path d="M538 334 539 334 538 339 537 339" fill="#7189af" stroke="#7189af"/>
<path d="M539 334 540 334 539 339 538 339" fill="#7188ae" stroke="#7188ae"/>
<path d="M537 339 538 339 537 344 536 344" fill="#7087ad" stroke="#7087ad"/>
<path d="M538 339 539 339 538 345 537 344" fill="#7087ac" stroke="#7087ac"/>
<path d="M540 334 540 334 540 339 539 339" fill="#7188ae" stroke="#7188ae"/>
<path d="M540 334 541 334 541 339 540 339" fill="#7087ad" stroke="#7087ad"/>
<path d="M539 339 540 339 539 345 538 345" fill="#6f86ac" stroke="#6f86ac"/>
<path d="M540 339 541 339 540 344 539 345" fill="#6f86ab" stroke="#6f86ab"/>
<path d="M541 334 542 334 541 339 541 339" fill="#7087ad" stroke="#7087ad"/>
<path d="M542 334 542 334 542 338 541 339" fill="#7086ac" stroke="#7086ac"/>
<path d="M541 339 541 339 541 344 540 344" fill="#6e85aa" stroke="#6e85aa"/>
<path d="M541 339 542 338 542 343 541 344" fill="#6e85aa" stroke="#6e85aa"/>
<path d="M542 334 543 333 543 338 542 338" fill="#6f86ac" stroke="#6f86ac"/>
<path d="M543 333 544 333 544 337 543 338" fill="#6f86ab" stroke="#6f86ab"/>
<path d="M542 338 543 338 543 343 542 343" fill="#6e84a9" stroke="#6e84a9"/>
<path d="M543 338 544 337 544 342 543 343" fill="#6d84a9" stroke="#6d84a9"/>
<path d="M544 333 545 332 545 336 544 337" fill="#6f86ab" stroke="#6f86ab"/>
<path d="M545 332 545 331 546 335 545 336" fill="#6f86ab" stroke="#6f86ab"/>
<path d="M544 337 545 336 545 341 544 342" fill="#6d84a9" stroke="#6d84a9"/>
<path d="M545 336 546 335 546 339 545 341" fill="#6d83a8" stroke="#6d83a8"/>
<path d="M545 331 546 330 547 334 546 335" fill="#6f85ab" stroke="#6f85ab"/>
<path d="M546 330 546 329 547 333 547 334" fill="#6f85ab" stroke="#6f85ab"/>
<path d="M546 335 547 334 547 338 546 339" fill="#6d83a8" stroke="#6d83a8"/>
<path d="M547 334 547 333 548 337 547 338" fill="#6d83a8" stroke="#6d83a8"/>
<path d="M546 329 547 328 548 332 547 333" fill="#6f85ab" stroke="#6f85ab"/>
<path d="M547 328 548 327 549 330 548 332" fill="#6f85ab" stroke="#6f85ab"/>
<path d="M547 333 548 332 549 335 548 337" fill="#6d83a8" stroke="#6d83a8"/>
<path d="M548 332 549 330 550 333 549 335" fill="#6d83a8" stroke="#6d83a8"/>
<path d="M548 327 548 326 549 329 549 330" fill="#6f85ab" stroke="#6f85ab"/>
<path d="M548 326 549 325 550 327 549 329" fill="#6f86ab" stroke="#6f86ab"/>
<path d="M549 330 549 329 551 331 550 333" fill="#6d83a8" stroke="#6d83a8"/>
<path d="M549 329 550 327 551 330 551 331" fill="#6d83a8" stroke="#6d83a8"/>
<path d="M549 325 549 323 551 325 550 327" fill="#6f86ab" stroke="#6f86ab"/>
<path d="M549 323 549 322 551 324 551 325" fill="#6f86ab" stroke="#6f86ab"/>
<path d="M550 327 551 325 552 328 551 330" fill="#6d84a8" stroke="#6d84a8"/>
<path d="M551 325 551 324 553 325 552 328" fill="#6d84a9" stroke="#6d84a9"/>
<path d="M549 322 550 321 551 322 551 324" fill="#6f86ac" stroke="#6f86ac"/>
<path d="M550 321 550 319 552 320 551 322" fill="#7086ac" stroke="#7086ac"/>
<path d="M551 324 551 322 553 323 553 325" fill="#6e84a9" stroke="#6e84a9"/>
<path d="M551 322 552 320 554 321 553 323" fill="#6e85aa" stroke="#6e85aa"/>
<path d="M550 319 550 318 552 318 552 320" fill="#7087ad" stroke="#7087ad"/>
<path d="M550 318 550 316 552 316 552 318" fill="#7087ad" stroke="#7087ad"/>
<path d="M552 320 552 318 554 319 554 321" fill="#6e85aa" stroke="#6e85aa"/>
<path d="M552 318 552 316 554 317 554 319" fill="#6f86ab" stroke="#6f86ab"/>
<path d="M550 316 551 315 553 315 552 316" fill="#7188ae" stroke="#7188ae"/>
<path d="M551 315 551 313 553 313 553 315" fill="#7188ae" stroke="#7188ae"/>
<path d="M552 316 553 315 555 314 554 317" fill="#6f86ac" stroke="#6f86ac"/>
<path d="M553 315 553 313 555 312 555 314" fill="#7087ac" stroke="#7087ac"/>
<path d="M551 313 551 312 553 311 553 313" fill="#7189af" stroke="#7189af"/>
<path d="M551 312 551 310 553 309 553 311" fill="#7289af" stroke="#7289af"/>
<path d="M553 313 553 311 555 310 555 312" fill="#7087ad" stroke="#7087ad"/>
<path d="M553 311 553 309 555 308 555 310" fill="#7188ae" stroke="#7188ae"/>
<path d="M551 310 551 309 553 307 553 309" fill="#728ab0" stroke="#728ab0"/>
<path d="M551 309 551 308 553 306 553 307" fill="#738ab1" stroke="#738ab1"/>
<path d="M553 309 553 307 555 306 555 308" fill="#7189af" stroke="#7189af"/>
<path d="M553 307 553 306 554 303 555 306" fill="#7289b0" stroke="#7289b0"/>
<path d="M551 308 550 306 552 304 553 306" fill="#738bb2" stroke="#738bb2"/>
<path d="M550 306 550 305 552 302 552 304" fill="#748cb2" stroke="#748cb2"/>
<path d="M553 306 552 304 554 301 554 303" fill="#738ab1" stroke="#738ab1"/>
<path d="M552 304 552 302 554 299 554 301" fill="#738bb2" stroke="#738bb2"/>
<path d="M550 305 550 304 552 301 552 302" fill="#748cb3" stroke="#748cb3"/>
<path d="M550 304 550 303 551 299 552 301" fill="#758db4" stroke="#758db4"/>
<path d="M552 302 552 301 553 298 554 299" fill="#748cb3" stroke="#748cb3"/>
<path d="M552 301 551 299 553 296 553 298" fill="#758cb4" stroke="#758cb4"/>
<path d="M550 303 549 302 551 298 551 299" fill="#758db5" stroke="#758db5"/>
<path d="M549 302 549 301 550 297 551 298" fill="#768eb6" stroke="#768eb6"/>
<path d="M551 299 551 298 552 294 553 296" fill="#758db5" stroke="#758db5"/>
<path d="M551 298 550 297 552 293 552 294" fill="#768eb5" stroke="#768eb5"/>
<path d="M549 301 548 300 550 296 550 297" fill="#768fb6" stroke="#768fb6"/>
<path d="M548 300 548 299 549 295 550 296" fill="#778fb7" stroke="#778fb7"/>
<path d="M550 297 550 296 551 291 552 293" fill="#768fb6" stroke="#768fb6"/>
<path d="M550 296 549 295 550 290 551 291" fill="#7790b7" stroke="#7790b7"/>
<path d="M548 299 547 298 548 294 549 295" fill="#7790b8" stroke="#7790b8"/>
<path d="M547 298 547 298 548 293 548 294" fill="#7890b9" stroke="#7890b9"/>
<path d="M549 295 548 294 549 289 550 290" fill="#7890b8" stroke="#7890b8"/>
<path d="M548 294 548 293 549 288 549 289" fill="#7891b9" stroke="#7891b9"/>
<path d="M547 298 546 297 547 292 548 293" fill="#7891b9" stroke="#7891b9"/>
<path d="M546 297 545 297 546 292 547 292" fill="#7992ba" stroke="#7992ba"/>
<path d="M548 293 547 292 548 287 549 288" fill="#7992ba" stroke="#7992ba"/>
<path d="M547 292 546 292 547 287 548 287" fill="#7992bb" stroke="#7992bb"/>
<path d="M545 297 545 297 545 292 546 292" fill="#7992bb" stroke="#7992bb"/>
<path d="M545 297 544 297 544 291 545 292" fill="#7a93bb" stroke="#7a93bb"/>
<path d="M546 292 545 292 546 286 547 287" fill="#7a93bc" stroke="#7a93bc"/>
<path d="M545 292 544 291 545 286 546 286" fill="#7b94bd" stroke="#7b94bd"/>
<path d="M544 297 543 297 544 291 544 291" fill="#7a93bc" stroke="#7a93bc"/>
<path d="M543 297 543 297 543 291 544 291" fill="#7a94bc" stroke="#7a94bc"/>
<path d="M544 291 544 291 544 286 545 286" fill="#7b94bd" stroke="#7b94bd"/>
<path d="M544 291 543 291 542 286 544 286" fill="#7b95be" stroke="#7b95be"/>
<path d="M543 297 542 297 542 292 543 291" fill="#7b94bd" stroke="#7b94bd"/>
<path d="M542 297 541 297 541 292 542 292" fill="#7b94bd" stroke="#7b94bd"/>
<path d="M543 291 542 292 541 287 542 286" fill="#7c95bf" stroke="#7c95bf"/>
<path d="M542 292 541 292 540 287 541 287" fill="#7c96bf" stroke="#7c96bf"/>
<path d="M541 297 541 298 540 293 541 292" fill="#7b95be" stroke="#7b95be"/>
<path d="M541 298 540 298 539 293 540 293" fill="#7b95be" stroke="#7b95be"/>
<path d="M541 292 540 293 539 288 540 287" fill="#7d96c0" stroke="#7d96c0"/>
<path d="M540 293 539 293 538 289 539 288" fill="#7d96c0" stroke="#7d96c0"/>
<path d="M540 298 539 299 538 294 539 293" fill="#7c95be" stroke="#7c95be"/>
<path d="M539 299 539 300 537 295 538 294" fill="#7c95be" stroke="#7c95be"/>
<path d="M539 293 538 294 537 290 538 289" fill="#7d97c0" stroke="#7d97c0"/>
<path d="M538 294 537 295 536 291 537 290" fill="#7d97c1" stroke="#7d97c1"/>
<path d="M539 300 538 300 537 296 537 295" fill="#7c95bf" stroke="#7c95bf"/>
<path d="M538 300 537 301 536 297 537 296" fill="#7c95bf" stroke="#7c95bf"/>
<path d="M537 295 537 296 535 292 536 291" fill="#7d97c1" stroke="#7d97c1"/>
<path d="M537 296 536 297 534 294 535 292" fill="#7d97c1" stroke="#7d97c1"/>
<path d="M537 301 537 302 535 299 536 297" fill="#7c95bf" stroke="#7c95bf"/>
<path d="M537 302 536 304 534 300 535 299" fill="#7c95bf" stroke="#7c95bf"/>
<path d="M536 297 535 299 533 295 534 294" fill="#7d97c1" stroke="#7d97c1"/>
<path d="M535 299 534 300 532 297 533 295" fill="#7d97c1" stroke="#7d97c1"/>
<path d="M536 304 536 305 534 302 534 300" fill="#7c95bf" stroke="#7c95bf"/>
<path d="M536 305 535 306 533 303 534 302" fill="#7c95be" stroke="#7c95be"/>
<path d="M534 300 534 302 531 299 532 297" fill="#7d97c1" stroke="#7d97c1"/>
<path d="M534 302 533 303 531 301 531 299" fill="#7d97c1" stroke="#7d97c1"/>
<path d="M535 306 535 307 532 305 533 303" fill="#7c95be" stroke="#7c95be"/>
<path d="M535 307 534 309 532 307 532 305" fill="#7b95be" stroke="#7b95be"/>
<path d="M533 303 532 305 530 303 531 301" fill="#7d97c0" stroke="#7d97c0"/>
<path d="M532 305 532 307 529 305 530 303" fill="#7d96c0" stroke="#7d96c0"/>
<path d="M534 309 534 310 531 309 532 307" fill="#7b95be" stroke="#7b95be"/>
<path d="M534 310 534 312 531 311 531 309" fill="#7b94bd" stroke="#7b94bd"/>
<path d="M532 307 531 309 529 307 529 305" fill="#7d96bf" stroke="#7d96bf"/>
<path d="M531 309 531 311 528 309 529 307" fill="#7c96bf" stroke="#7c96bf"/>
<path d="M534 312 533 313 531 312 531 311" fill="#7b94bd" stroke="#7b94bd"/>
<path d="M533 313 533 315 530 314 531 312" fill="#7a93bc" stroke="#7a93bc"/>
<path d="M531 311 531 312 528 312 528 309" fill="#7c95be" stroke="#7c95be"/>
<path d="M531 312 530 314 528 314 528 312" fill="#7b95be" stroke="#7b95be"/>
<path d="M528 314 527 316 524 317 524 314" fill="#7c95bf" stroke="#7c95bf"/>
<path d="M527 316 527 319 524 319 524 317" fill="#7b95be" stroke="#7b95be"/>
<path d="M524 314 524 317 521 317 521 313" fill="#7d97c0" stroke="#7d97c0"/>
<path d="M524 317 524 319 521 320 521 317" fill="#7c96bf" stroke="#7c96bf"/>
<path d="M527 319 527 321 524 322 524 319" fill="#7b94bd" stroke="#7b94bd"/>
<path d="M527 321 527 323 524 325 524 322" fill="#7a93bc" stroke="#7a93bc"/>
<path d="M524 319 524 322 521 323 521 320" fill="#7c95be" stroke="#7c95be"/>
<path d="M524 322 524 325 521 326 521 323" fill="#7b94bd" stroke="#7b94bd"/>
<path d="M527 323 527 326 524 327 524 325" fill="#7992bb" stroke="#7992bb"/>
<path d="M527 326 528 328 524 330 524 327" fill="#7991ba" stroke="#7991ba"/>
<path d="M524 325 524 327 521 329 521 326" fill="#7a93bc" stroke="#7a93bc"/>
<path d="M524 327 524 330 521 332 521 329" fill="#7992ba" stroke="#7992ba"/>
<path d="M528 328 528 330 525 332 524 330" fill="#7891b9" stroke="#7891b9"/>
<path d="M528 330 528 332 525 335 525 332" fill="#7790b8" stroke="#7790b8"/>
<path d="M524 330 525 332 521 335 521 332" fill="#7891b9" stroke="#7891b9"/>
<path d="M525 332 525 335 522 338 521 335" fill="#7790b8" stroke="#7790b8"/>
<path d="M528 332 529 334 526 337 525 335" fill="#768fb6" stroke="#768fb6"/>
<path d="M529 334 529 335 526 339 526 337" fill="#768eb5" stroke="#768eb5"/>
<path d="M525 335 526 337 523 340 522 338" fill="#768fb6" stroke="#768fb6"/>
<path d="M526 337 526 339 523 343 523 340" fill="#768eb5" stroke="#768eb5"/>
<path d="M529 335 530 337 527 341 526 339" fill="#758db4" stroke="#758db4"/>
<path d="M530 337 530 338 528 343 527 341" fill="#748cb3" stroke="#748cb3"/>
<path d="M526 339 527 341 524 345 523 343" fill="#758db4" stroke="#758db4"/>
<path d="M527 341 528 343 525 347 524 345" fill="#748bb2" stroke="#748bb2"/>
<path d="M530 338 531 340 529 344 528 343" fill="#738bb2" stroke="#738bb2"/>
<path d="M531 340 532 341 530 346 529 344" fill="#738ab1" stroke="#738ab1"/>
<path d="M528 343 529 344 526 349 525 347" fill="#738ab1" stroke="#738ab1"/>
<path d="M529 344 530 346 527 351 526 349" fill="#7289b0" stroke="#7289b0"/>
<path d="M532 341 533 342 531 347 530 346" fill="#7289af" stroke="#7289af"/>
<path d="M533 342 534 343 532 348 531 347" fill="#7188ae" stroke="#7188ae"/>
<path d="M530 346 531 347 528 352 527 351" fill="#7188ae" stroke="#7188ae"/>
<path d="M531 347 532 348 530 353 528 352" fill="#7087ad" stroke="#7087ad"/>
<path d="M534 343 535 344 533 349 532 348" fill="#7087ad" stroke="#7087ad"/>
<path d="M535 344 536 344 534 349 533 349" fill="#7087ac" stroke="#7087ac"/>
<path d="M532 348 533 349 531 354 530 353" fill="#6f86ac" stroke="#6f86ac"/>
<path d="M533 349 534 349 532 355 531 354" fill="#6f85ab" stroke="#6f85ab"/>
<path d="M536 344 537 344 535 350 534 349" fill="#6f86ab" stroke="#6f86ab"/>
<path d="M537 344 538 345 537 350 535 350" fill="#6e85aa" stroke="#6e85aa"/>
<path d="M534 349 535 350 534 355 532 355" fill="#6e84a9" stroke="#6e84a9"/>
<path d="M535 350 537 350 535 355 534 355" fill="#6d83a8" stroke="#6d83a8"/>
<path d="M538 345 539 345 538 350 537 350" fill="#6e84a9" stroke="#6e84a9"/>
<path d="M539 345 540 344 539 350 538 350" fill="#6d84a9" stroke="#6d84a9"/>
<path d="M537 350 538 350 537 355 535 355" fill="#6c83a7" stroke="#6c83a7"/>
<path d="M538 350 539 350 538 355 537 355" fill="#6c82a6" stroke="#6c82a6"/>
<path d="M540 344 541 344 540 349 539 350" fill="#6d83a8" stroke="#6d83a8"/>
<path d="M541 344 542 343 542 349 540 349" fill="#6c83a7" stroke="#6c83a7"/>
<path d="M539 350 540 349 540 354 538 355" fill="#6b81a5" stroke="#6b81a5"/>
<path d="M540 349 542 349 541 354 540 354" fill="#6b81a5" stroke="#6b81a5"/>
<path d="M542 343 543 343 543 348 542 349" fill="#6c82a7" stroke="#6c82a7"/>
<path d="M543 343 544 342 544 347 543 348" fill="#6c82a6" stroke="#6c82a6"/>
<path d="M542 349 543 348 543 353 541 354" fill="#6a80a4" stroke="#6a80a4"/>
<path d="M543 348 544 347 544 351 543 353" fill="#6a80a3" stroke="#6a80a3"/>
<path d="M544 342 545 341 545 345 544 347" fill="#6b81a6" stroke="#6b81a6"/>
<path d="M545 341 546 339 547 344 545 345" fill="#6b81a5" stroke="#6b81a5"/>
<path d="M544 347 545 345 545 350 544 351" fill="#6a7fa3" stroke="#6a7fa3"/>
<path d="M545 345 547 344 547 348 545 350" fill="#697fa3" stroke="#697fa3"/>
<path d="M546 339 547 338 548 342 547 344" fill="#6b81a5" stroke="#6b81a5"/>
<path d="M547 338 548 337 549 341 548 342" fill="#6b81a5" stroke="#6b81a5"/>
<path d="M547 344 548 342 548 346 547 348" fill="#697fa2" stroke="#697fa2"/>
<path d="M548 342 549 341 549 344 548 346" fill="#697ea2" stroke="#697ea2"/>
<path d="M548 337 549 335 550 339 549 341" fill="#6b81a5" stroke="#6b81a5"/>
<path d="M549 335 550 333 551 337 550 339" fill="#6b81a5" stroke="#6b81a5"/>
<path d="M549 341 550 339 551 342 549 344" fill="#697ea2" stroke="#697ea2"/>
<path d="M550 339 551 337 552 340 551 342" fill="#697ea2" stroke="#697ea2"/>
<path d="M550 333 551 331 552 334 551 337" fill="#6b81a5" stroke="#6b81a5"/>
<path d="M551 331 551 330 553 332 552 334" fill="#6b81a5" stroke="#6b81a5"/>
<path d="M551 337 552 334 553 337 552 340" fill="#697fa2" stroke="#697fa2"/>
<path d="M552 334 553 332 554 335 553 337" fill="#697fa2" stroke="#697fa2"/>
<path d="M551 330 552 328 553 330 553 332" fill="#6b81a6" stroke="#6b81a6"/>
<path d="M552 328 553 325 554 327 553 330" fill="#6c82a6" stroke="#6c82a6"/>
<path d="M553 332 553 330 555 332 554 335" fill="#697fa3" stroke="#697fa3"/>
<path d="M553 330 554 327 556 329 555 332" fill="#6a7fa3" stroke="#6a7fa3"/>
<path d="M553 325 553 323 555 325 554 327" fill="#6c82a7" stroke="#6c82a7"/>
<path d="M553 323 554 321 555 322 555 325" fill="#6c83a7" stroke="#6c83a7"/>
<path d="M554 327 555 325 556 326 556 329" fill="#6a80a4" stroke="#6a80a4"/>
<path d="M555 325 555 322 557 323 556 326" fill="#6b80a5" stroke="#6b80a5"/>
<path d="M554 321 554 319 556 319 555 322" fill="#6d83a8" stroke="#6d83a8"/>
<path d="M554 319 554 317 556 317 556 319" fill="#6d84a9" stroke="#6d84a9"/>
<path d="M555 322 556 319 558 320 557 323" fill="#6b81a5" stroke="#6b81a5"/>
<path d="M556 319 556 317 558 317 558 320" fill="#6c82a6" stroke="#6c82a6"/>
<path d="M554 317 555 314 556 314 556 317" fill="#6e84a9" stroke="#6e84a9"/>
<path d="M555 314 555 312 557 311 556 314" fill="#6e85aa" stroke="#6e85aa"/>
<path d="M556 317 556 314 558 314 558 317" fill="#6c83a7" stroke="#6c83a7"/>
<path d="M556 314 557 311 558 311 558 314" fill="#6d83a8" stroke="#6d83a8"/>
<path d="M555 312 555 310 557 309 557 311" fill="#6f86ab" stroke="#6f86ab"/>
<path d="M555 310 555 308 557 306 557 309" fill="#7087ac" stroke="#7087ac"/>
<path d="M557 311 557 309 559 308 558 311" fill="#6e84a9" stroke="#6e84a9"/>
<path d="M557 309 557 306 558 305 559 308" fill="#6f85aa" stroke="#6f85aa"/>
<path d="M555 308 555 306 557 304 557 306" fill="#7087ad" stroke="#7087ad"/>
<path d="M555 306 554 303 556 301 557 304" fill="#7188ae" stroke="#7188ae"/>
<path d="M557 306 557 304 558 302 558 305" fill="#6f86ac" stroke="#6f86ac"/>
<path d="M557 304 556 301 558 299 558 302" fill="#7087ad" stroke="#7087ad"/>
<path d="M554 303 554 301 556 299 556 301" fill="#7289b0" stroke="#7289b0"/>
<path d="M554 301 554 299 556 296 556 299" fill="#738ab1" stroke="#738ab1"/>
<path d="M556 301 556 299 558 296 558 299" fill="#7188ae" stroke="#7188ae"/>
<path d="M556 299 556 296 557 293 558 296" fill="#7289b0" stroke="#7289b0"/>
<path d="M554 299 553 298 555 294 556 296" fill="#738bb2" stroke="#738bb2"/>
<path d="M553 298 553 296 555 292 555 294" fill="#748cb3" stroke="#748cb3"/>
<path d="M556 296 555 294 557 291 557 293" fill="#738ab1" stroke="#738ab1"/>
<path d="M555 294 555 292 556 288 557 291" fill="#748cb2" stroke="#748cb2"/>
<path d="M553 296 552 294 554 290 555 292" fill="#758db4" stroke="#758db4"/>
<path d="M552 294 552 293 553 288 554 290" fill="#768eb5" stroke="#768eb5"/>
<path d="M555 292 554 290 555 286 556 288" fill="#758db4" stroke="#758db4"/>
<path d="M554 290 553 288 554 284 555 286" fill="#768eb5" stroke="#768eb5"/>
<path d="M552 293 551 291 552 287 553 288" fill="#778fb7" stroke="#778fb7"/>
<path d="M551 291 550 290 551 285 552 287" fill="#7790b8" stroke="#7790b8"/>
<path d="M553 288 552 287 553 282 554 284" fill="#778fb7" stroke="#778fb7"/>
<path d="M552 287 551 285 552 281 553 282" fill="#7790b8" stroke="#7790b8"/>
<path d="M550 290 549 289 550 284 551 285" fill="#7891b9" stroke="#7891b9"/>
<path d="M549 289 549 288 549 283 550 284" fill="#7992ba" stroke="#7992ba"/>
<path d="M551 285 550 284 551 279 552 281" fill="#7891b9" stroke="#7891b9"/>
<path d="M550 284 549 283 550 278 551 279" fill="#7992bb" stroke="#7992bb"/>
<path d="M549 288 548 287 548 282 549 283" fill="#7992bb" stroke="#7992bb"/>
<path d="M548 287 547 287 547 281 548 282" fill="#7a93bc" stroke="#7a93bc"/>
<path d="M549 283 548 282 549 277 550 278" fill="#7a93bc" stroke="#7a93bc"/>
<path d="M548 282 547 281 547 276 549 277" fill="#7b94bd" stroke="#7b94bd"/>
<path d="M547 287 546 286 546 281 547 281" fill="#7b94bd" stroke="#7b94bd"/>
<path d="M546 286 545 286 545 281 546 281" fill="#7b95be" stroke="#7b95be"/>
<path d="M547 281 546 281 546 275 547 276" fill="#7c95be" stroke="#7c95be"/>
<path d="M546 281 545 281 545 275 546 275" fill="#7c96bf" stroke="#7c96bf"/>
<path d="M545 286 544 286 543 280 545 281" fill="#7c95bf" stroke="#7c95bf"/>
<path d="M544 286 542 286 542 281 543 280" fill="#7d96c0" stroke="#7d96c0"/>
<path d="M545 281 543 280 543 275 545 275" fill="#7d97c0" stroke="#7d97c0"/>
<path d="M543 280 542 281 542 275 543 275" fill="#7e97c1" stroke="#7e97c1"/>
<path d="M542 286 541 287 541 281 542 281" fill="#7d97c0" stroke="#7d97c0"/>
<path d="M541 287 540 287 540 282 541 281" fill="#7d97c1" stroke="#7d97c1"/>
<path d="M542 281 541 281 540 275 542 275" fill="#7e98c2" stroke="#7e98c2"/>
<path d="M541 281 540 282 539 276 540 275" fill="#7f99c3" stroke="#7f99c3"/>
<path d="M540 287 539 288 538 282 540 282" fill="#7e98c1" stroke="#7e98c1"/>
<path d="M539 288 538 289 537 283 538 282" fill="#7e98c2" stroke="#7e98c2"/>
<path d="M540 282 538 282 537 277 539 276" fill="#7f99c3" stroke="#7f99c3"/>
<path d="M538 282 537 283 536 278 537 277" fill="#809ac4" stroke="#809ac4"/>
<path d="M538 289 537 290 536 285 537 283" fill="#7e98c2" stroke="#7e98c2"/>
<path d="M537 290 536 291 535 286 536 285" fill="#7f99c3" stroke="#7f99c3"/>
<path d="M537 283 536 285 534 280 536 278" fill="#809ac4" stroke="#809ac4"/>
<path d="M536 285 535 286 533 281 534 280" fill="#809ac5" stroke="#809ac5"/>
<path d="M536 291 535 292 533 288 535 286" fill="#7f99c3" stroke="#7f99c3"/>
<path d="M535 292 534 294 532 289 533 288" fill="#7f99c3" stroke="#7f99c3"/>
<path d="M535 286 533 288 532 283 533 281" fill="#809bc5" stroke="#809bc5"/>
<path d="M533 288 532 289 530 285 532 283" fill="#809bc5" stroke="#809bc5"/>
<path d="M534 294 533 295 531 291 532 289" fill="#7f99c3" stroke="#7f99c3"/>
<path d="M533 295 532 297 530 293 531 291" fill="#7f99c3" stroke="#7f99c3"/>
<path d="M532 289 531 291 529 287 530 285" fill="#809bc5" stroke="#809bc5"/>
<path d="M531 291 530 293 528 290 529 287" fill="#809bc5" stroke="#809bc5"/>
<path d="M532 297 531 299 529 296 530 293" fill="#7f99c3" stroke="#7f99c3"/>
<path d="M531 299 531 301 528 298 529 296" fill="#7f99c3" stroke="#7f99c3"/>
<path d="M530 293 529 296 527 292 528 290" fill="#809bc5" stroke="#809bc5"/>
<path d="M529 296 528 298 525 295 527 292" fill="#809ac5" stroke="#809ac5"/>
<path d="M531 301 530 303 527 300 528 298" fill="#7e98c2" stroke="#7e98c2"/>
<path d="M530 303 529 305 527 303 527 300" fill="#7e98c2" stroke="#7e98c2"/>
<path d="M528 298 527 300 524 298 525 295" fill="#809ac4" stroke="#809ac4"/>
<path d="M527 300 527 303 524 301 524 298" fill="#809ac4" stroke="#809ac4"/>
<path d="M529 305 529 307 526 306 527 303" fill="#7e98c1" stroke="#7e98c1"/>
<path d="M529 307 528 309 525 308 526 306" fill="#7d97c1" stroke="#7d97c1"/>
<path d="M527 303 526 306 523 304 524 301" fill="#7f99c3" stroke="#7f99c3"/>
<path d="M526 306 525 308 522 307 523 304" fill="#7f99c3" stroke="#7f99c3"/>
<path d="M528 309 528 312 525 311 525 308" fill="#7d97c0" stroke="#7d97c0"/>
<path d="M528 312 528 314 524 314 525 311" fill="#7d96bf" stroke="#7d96bf"/>
<path d="M525 308 525 311 522 310 522 307" fill="#7e98c2" stroke="#7e98c2"/>
<path d="M525 311 524 314 521 313 522 310" fill="#7e97c1" stroke="#7e97c1"/>
<path d="M521 313 521 317 517 317 517 313" fill="#7e98c2" stroke="#7e98c2"/>
<path d="M521 317 521 320 517 321 517 317" fill="#7d97c0" stroke="#7d97c0"/>
<path d="M517 313 517 317 513 317 513 313" fill="#7f99c3" stroke="#7f99c3"/>
<path d="M517 317 517 321 512 321 513 317" fill="#7e98c2" stroke="#7e98c2"/>
<path d="M521 320 521 323 517 324 517 321" fill="#7c96bf" stroke="#7c96bf"/>
<path d="M521 323 521 326 517 328 517 324" fill="#7b95be" stroke="#7b95be"/>
<path d="M517 321 517 324 512 325 512 321" fill="#7d97c0" stroke="#7d97c0"/>
<path d="M517 324 517 328 512 330 512 325" fill="#7c96bf" stroke="#7c96bf"/>
<path d="M521 326 521 329 517 331 517 328" fill="#7b94bc" stroke="#7b94bc"/>
<path d="M521 329 521 332 517 335 517 331" fill="#7a92bb" stroke="#7a92bb"/>
<path d="M517 328 517 331 513 334 512 330" fill="#7b94bd" stroke="#7b94bd"/>
<path d="M517 331 517 335 513 338 513 334" fill="#7a93bb" stroke="#7a93bb"/>
<path d="M521 332 521 335 518 338 517 335" fill="#7991b9" stroke="#7991b9"/>
<path d="M521 335 522 338 518 341 518 338" fill="#7790b8" stroke="#7790b8"/>
<path d="M517 335 518 338 514 341 513 338" fill="#7992ba" stroke="#7992ba"/>
<path d="M518 338 518 341 514 345 514 341" fill="#7890b8" stroke="#7890b8"/>
<path d="M522 338 523 340 519 344 518 341" fill="#768fb6" stroke="#768fb6"/>
<path d="M523 340 523 343 520 347 519 344" fill="#758db5" stroke="#758db5"/>
<path d="M518 341 519 344 515 348 514 345" fill="#768fb6" stroke="#768fb6"/>
<path d="M519 344 520 347 516 352 515 348" fill="#758db4" stroke="#758db4"/>
<path d="M523 343 524 345 521 350 520 347" fill="#748cb3" stroke="#748cb3"/>
<path d="M524 345 525 347 522 352 521 350" fill="#738bb2" stroke="#738bb2"/>
<path d="M520 347 521 350 517 355 516 352" fill="#748cb3" stroke="#748cb3"/>
<path d="M521 350 522 352 518 357 517 355" fill="#738ab1" stroke="#738ab1"/>
<path d="M525 347 526 349 523 354 522 352" fill="#728ab0" stroke="#728ab0"/>
<path d="M526 349 527 351 524 356 523 354" fill="#7188ae" stroke="#7188ae"/>
<path d="M522 352 523 354 520 360 518 357" fill="#7189af" stroke="#7189af"/>
<path d="M523 354 524 356 521 362 520 360" fill="#7087ad" stroke="#7087ad"/>
<path d="M527 351 528 352 526 358 524 356" fill="#7087ad" stroke="#7087ad"/>
<path d="M528 352 530 353 527 359 526 358" fill="#6f86ab" stroke="#6f86ab"/>
<path d="M524 356 526 358 523 364 521 362" fill="#6f86ab" stroke="#6f86ab"/>
<path d="M526 358 527 359 525 365 523 364" fill="#6e85aa" stroke="#6e85aa"/>
<path d="M530 353 531 354 529 360 527 359" fill="#6e85aa" stroke="#6e85aa"/>
<path d="M531 354 532 355 530 361 529 360" fill="#6d84a9" stroke="#6d84a9"/>
<path d="M527 359 529 360 526 366 525 365" fill="#6d83a8" stroke="#6d83a8"/>
<path d="M529 360 530 361 528 367 526 366" fill="#6c82a6" stroke="#6c82a6"/>
<path d="M532 355 534 355 532 361 530 361" fill="#6c83a7" stroke="#6c83a7"/>
<path d="M534 355 535 355 534 362 532 361" fill="#6c82a6" stroke="#6c82a6"/>
<path d="M530 361 532 361 530 368 528 367" fill="#6b81a5" stroke="#6b81a5"/>
<path d="M532 361 534 362 532 368 530 368" fill="#6a80a3" stroke="#6a80a3"/>
<path d="M535 355 537 355 535 362 534 362" fill="#6b81a5" stroke="#6b81a5"/>
<path d="M537 355 538 355 537 361 535 362" fill="#6a80a4" stroke="#6a80a4"/>
<path d="M534 362 535 362 534 368 532 368" fill="#697ea2" stroke="#697ea2"/>
<path d="M535 362 537 361 536 367 534 368" fill="#687da1" stroke="#687da1"/>
<path d="M538 355 540 354 539 361 537 361" fill="#697fa3" stroke="#697fa3"/>
<path d="M540 354 541 354 540 360 539 361" fill="#697ea2" stroke="#697ea2"/>
<path d="M537 361 539 361 538 367 536 367" fill="#677da0" stroke="#677da0"/>
<path d="M539 361 540 360 540 366 538 367" fill="#677c9f" stroke="#677c9f"/>
<path d="M541 354 543 353 542 358 540 360" fill="#687ea1" stroke="#687ea1"/>
<path d="M543 353 544 351 544 357 542 358" fill="#687da0" stroke="#687da0"/>
<path d="M540 360 542 358 542 364 540 366" fill="#667b9e" stroke="#667b9e"/>
<path d="M542 358 544 357 543 363 542 364" fill="#667a9d" stroke="#667a9d"/>
<path d="M544 351 545 350 545 355 544 357" fill="#677da0" stroke="#677da0"/>
<path d="M545 350 547 348 547 353 545 355" fill="#677c9f" stroke="#677c9f"/>
<path d="M544 357 545 355 545 361 543 363" fill="#657a9c" stroke="#657a9c"/>
<path d="M545 355 547 353 547 358 545 361" fill="#65799c" stroke="#65799c"/>
<path d="M547 348 548 346 549 351 547 353" fill="#677c9f" stroke="#677c9f"/>
<path d="M548 346 549 344 550 349 549 351" fill="#677c9f" stroke="#677c9f"/>
<path d="M547 353 549 351 549 356 547 358" fill="#64799b" stroke="#64799b"/>
<path d="M549 351 550 349 551 353 549 356" fill="#64799b" stroke="#64799b"/>
<path d="M549 344 551 342 551 346 550 349" fill="#677c9f" stroke="#677c9f"/>
<path d="M551 342 552 340 553 344 551 346" fill="#677c9f" stroke="#677c9f"/>
<path d="M550 349 551 346 552 350 551 353" fill="#64799b" stroke="#64799b"/>
<path d="M551 346 553 344 554 347 552 350" fill="#64799b" stroke="#64799b"/>
<path d="M552 340 553 337 554 341 553 344" fill="#677c9f" stroke="#677c9f"/>
<path d="M553 337 554 335 555 338 554 341" fill="#677c9f" stroke="#677c9f"/>
<path d="M553 344 554 341 555 344 554 347" fill="#64799b" stroke="#64799b"/>
<path d="M554 341 555 338 556 340 555 344" fill="#65799b" stroke="#65799b"/>
<path d="M554 335 555 332 556 334 555 338" fill="#677ca0" stroke="#677ca0"/>
<path d="M555 332 556 329 557 331 556 334" fill="#687da0" stroke="#687da0"/>
<path d="M555 338 556 334 558 337 556 340" fill="#657a9c" stroke="#657a9c"/>
<path d="M556 334 557 331 559 333 558 337" fill="#657a9c" stroke="#657a9c"/>
<path d="M556 329 556 326 558 328 557 331" fill="#687da1" stroke="#687da1"/>
<path d="M556 326 557 323 559 324 558 328" fill="#697ea2" stroke="#697ea2"/>
<path d="M557 331 558 328 560 329 559 333" fill="#667b9d" stroke="#667b9d"/>
<path d="M558 328 559 324 560 325 560 329" fill="#667b9e" stroke="#667b9e"/>
<path d="M557 323 558 320 559 321 559 324" fill="#697fa2" stroke="#697fa2"/>
<path d="M558 320 558 317 560 317 559 321" fill="#6a80a3" stroke="#6a80a3"/>
<path d="M559 324 559 321 561 321 560 325" fill="#677c9f" stroke="#677c9f"/>
<path d="M559 321 560 317 562 317 561 321" fill="#687da0" stroke="#687da0"/>
<path d="M558 317 558 314 560 314 560 317" fill="#6b80a5" stroke="#6b80a5"/>
<path d="M558 314 558 311 560 310 560 314" fill="#6b81a6" stroke="#6b81a6"/>
<path d="M560 317 560 314 562 313 562 317" fill="#697ea2" stroke="#697ea2"/>
<path d="M560 314 560 310 562 309 562 313" fill="#6a7fa3" stroke="#6a7fa3"/>
<path d="M558 311 559 308 561 306 560 310" fill="#6c82a7" stroke="#6c82a7"/>
<path d="M559 308 558 305 561 303 561 306" fill="#6d84a8" stroke="#6d84a8"/>
<path d="M560 310 561 306 562 305 562 309" fill="#6b80a4" stroke="#6b80a4"/>
<path d="M561 306 561 303 562 301 562 305" fill="#6c82a6" stroke="#6c82a6"/>
<path d="M558 305 558 302 560 300 561 303" fill="#6e85aa" stroke="#6e85aa"/>
<path d="M558 302 558 299 560 296 560 300" fill="#6f86ab" stroke="#6f86ab"/>
<path d="M561 303 560 300 562 297 562 301" fill="#6d83a8" stroke="#6d83a8"/>
<path d="M560 300 560 296 562 294 562 297" fill="#6e84a9" stroke="#6e84a9"/>
<path d="M558 299 558 296 560 293 560 296" fill="#7087ad" stroke="#7087ad"/>
<path d="M558 296 557 293 559 290 560 293" fill="#7188ae" stroke="#7188ae"/>
<path d="M560 296 560 293 561 290 562 294" fill="#6f86ab" stroke="#6f86ab"/>
<path d="M560 293 559 290 561 286 561 290" fill="#7087ad" stroke="#7087ad"/>
<path d="M557 293 557 291 558 287 559 290" fill="#728ab0" stroke="#728ab0"/>
<path d="M557 291 556 288 558 284 558 287" fill="#738bb2" stroke="#738bb2"/>
<path d="M559 290 558 287 560 283 561 286" fill="#7189af" stroke="#7189af"/>
<path d="M558 287 558 284 559 280 560 283" fill="#738ab1" stroke="#738ab1"/>
<path d="M556 288 555 286 557 282 558 284" fill="#748cb3" stroke="#748cb3"/>
<path d="M555 286 554 284 556 279 557 282" fill="#758eb5" stroke="#758eb5"/>
<path d="M558 284 557 282 558 277 559 280" fill="#748cb3" stroke="#748cb3"/>
<path d="M557 282 556 279 557 274 558 277" fill="#758db5" stroke="#758db5"/>
<path d="M554 284 553 282 555 277 556 279" fill="#778fb7" stroke="#778fb7"/>
<path d="M553 282 552 281 553 275 555 277" fill="#7890b8" stroke="#7890b8"/>
<path d="M556 279 555 277 556 272 557 274" fill="#768fb6" stroke="#768fb6"/>
<path d="M555 277 553 275 554 269 556 272" fill="#7890b8" stroke="#7890b8"/>
<path d="M552 281 551 279 552 273 553 275" fill="#7991ba" stroke="#7991ba"/>
<path d="M551 279 550 278 551 272 552 273" fill="#7a93bb" stroke="#7a93bb"/>
<path d="M553 275 552 273 553 267 554 269" fill="#7992ba" stroke="#7992ba"/>
<path d="M552 273 551 272 551 266 553 267" fill="#7a93bc" stroke="#7a93bc"/>
<path d="M550 278 549 277 549 271 551 272" fill="#7b94bd" stroke="#7b94bd"/>
<path d="M549 277 547 276 548 270 549 271" fill="#7b95be" stroke="#7b95be"/>
<path d="M551 272 549 271 550 264 551 266" fill="#7b94bd" stroke="#7b94bd"/>
<path d="M549 271 548 270 548 263 550 264" fill="#7c96bf" stroke="#7c96bf"/>
<path d="M547 276 546 275 546 269 548 270" fill="#7c96bf" stroke="#7c96bf"/>
<path d="M546 275 545 275 545 268 546 269" fill="#7d97c1" stroke="#7d97c1"/>
<path d="M548 270 546 269 546 262 548 263" fill="#7d97c1" stroke="#7d97c1"/>
<path d="M546 269 545 268 544 262 546 262" fill="#7e98c2" stroke="#7e98c2"/>
<path d="M545 275 543 275 543 268 545 268" fill="#7e98c2" stroke="#7e98c2"/>
<path d="M543 275 542 275 541 269 543 268" fill="#7f99c3" stroke="#7f99c3"/>
<path d="M545 268 543 268 542 262 544 262" fill="#7f99c3" stroke="#7f99c3"/>
<path d="M543 268 541 269 540 262 542 262" fill="#809ac5" stroke="#809ac5"/>
<path d="M542 275 540 275 539 269 541 269" fill="#7f99c4" stroke="#7f99c4"/>
<path d="M540 275 539 276 538 270 539 269" fill="#809ac5" stroke="#809ac5"/>
<path d="M541 269 539 269 538 263 540 262" fill="#819bc6" stroke="#819bc6"/>
<path d="M539 269 538 270 537 263 538 263" fill="#819cc7" stroke="#819cc7"/>
<path d="M539 276 537 277 536 271 538 270" fill="#809bc5" stroke="#809bc5"/>
<path d="M537 277 536 278 534 272 536 271" fill="#819bc6" stroke="#819bc6"/>
<path d="M538 270 536 271 535 265 537 263" fill="#829dc8" stroke="#829dc8"/>
<path d="M536 271 534 272 533 266 535 265" fill="#829dc8" stroke="#829dc8"/>
<path d="M536 278 534 280 533 274 534 272" fill="#819cc7" stroke="#819cc7"/>
<path d="M534 280 533 281 531 276 533 274" fill="#829cc7" stroke="#829cc7"/>
<path d="M534 272 533 274 531 268 533 266" fill="#839ec9" stroke="#839ec9"/>
<path d="M533 274 531 276 529 270 531 268" fill="#839ec9" stroke="#839ec9"/>
<path d="M533 281 532 283 529 278 531 276" fill="#829cc7" stroke="#829cc7"/>
<path d="M532 283 530 285 528 280 529 278" fill="#829dc8" stroke="#829dc8"/>
<path d="M531 276 529 278 527 272 529 270" fill="#849eca" stroke="#849eca"/>
<path d="M529 278 528 280 525 275 527 272" fill="#849fca" stroke="#849fca"/>
<path d="M530 285 529 287 526 283 528 280" fill="#829dc8" stroke="#829dc8"/>
<path d="M529 287 528 290 525 285 526 283" fill="#829dc8" stroke="#829dc8"/>
<path d="M528 280 526 283 523 278 525 275" fill="#849fca" stroke="#849fca"/>
<path d="M526 283 525 285 522 281 523 278" fill="#849fca" stroke="#849fca"/>
<path d="M528 290 527 292 523 288 525 285" fill="#829dc7" stroke="#829dc7"/>
<path d="M527 292 525 295 522 292 523 288" fill="#829cc7" stroke="#829cc7"/>
<path d="M525 285 523 288 520 285 522 281" fill="#849fca" stroke="#849fca"/>
<path d="M523 288 522 292 519 288 520 285" fill="#839ec9" stroke="#839ec9"/>
<path d="M525 295 524 298 521 295 522 292" fill="#819cc7" stroke="#819cc7"/>
<path d="M524 298 524 301 520 298 521 295" fill="#819bc6" stroke="#819bc6"/>
<path d="M522 292 521 295 517 292 519 288" fill="#839ec9" stroke="#839ec9"/>
<path d="M521 295 520 298 516 296 517 292" fill="#839dc8" stroke="#839dc8"/>
<path d="M524 301 523 304 519 302 520 298" fill="#819bc5" stroke="#819bc5"/>
<path d="M523 304 522 307 518 306 519 302" fill="#809ac5" stroke="#809ac5"/>
<path d="M520 298 519 302 515 300 516 296" fill="#829dc7" stroke="#829dc7"/>
<path d="M519 302 518 306 514 304 515 300" fill="#829cc7" stroke="#829cc7"/>
<path d="M522 307 522 310 518 309 518 306" fill="#7f9ac4" stroke="#7f9ac4"/>
<path d="M522 310 521 313 517 313 518 309" fill="#7f99c3" stroke="#7f99c3"/>
<path d="M518 306 518 309 514 308 514 304" fill="#819bc6" stroke="#819bc6"/>
<path d="M518 309 517 313 513 313 514 308" fill="#809ac4" stroke="#809ac4"/>
<path d="M513 313 513 317 508 317 508 312" fill="#809bc5" stroke="#809bc5"/>
<path d="M513 317 512 321 508 322 508 317" fill="#7f99c3" stroke="#7f99c3"/>
<path d="M508 312 508 317 503 317 503 312" fill="#829cc6" stroke="#829cc6"/>
<path d="M508 317 508 322 502 323 503 317" fill="#809ac5" stroke="#809ac5"/>
<path d="M512 321 512 325 507 327 508 322" fill="#7e98c1" stroke="#7e98c1"/>
<path d="M512 325 512 330 507 331 507 327" fill="#7d96c0" stroke="#7d96c0"/>
<path d="M508 322 507 327 502 328 502 323" fill="#7f99c3" stroke="#7f99c3"/>
<path d="M507 327 507 331 502 333 502 328" fill="#7e97c1" stroke="#7e97c1"/>
<path d="M512 330 513 334 508 336 507 331" fill="#7c95be" stroke="#7c95be"/>
<path d="M513 334 513 338 508 341 508 336" fill="#7a93bc" stroke="#7a93bc"/>
<path d="M507 331 508 336 503 338 502 333" fill="#7c95bf" stroke="#7c95bf"/>
<path d="M508 336 508 341 503 343 503 338" fill="#7b94bc" stroke="#7b94bc"/>
<path d="M513 338 514 341 509 345 508 341" fill="#7992ba" stroke="#7992ba"/>
<path d="M514 341 514 345 510 349 509 345" fill="#7890b8" stroke="#7890b8"/>
<path d="M508 341 509 345 504 348 503 343" fill="#7992ba" stroke="#7992ba"/>
<path d="M509 345 510 349 505 353 504 348" fill="#7890b8" stroke="#7890b8"/>
<path d="M514 345 515 348 511 353 510 349" fill="#768eb6" stroke="#768eb6"/>
<path d="M515 348 516 352 512 356 511 353" fill="#758db4" stroke="#758db4"/>
<path d="M510 349 511 353 506 357 505 353" fill="#768eb6" stroke="#768eb6"/>
<path d="M511 353 512 356 507 361 506 357" fill="#748cb3" stroke="#748cb3"/>
<path d="M516 352 517 355 513 360 512 356" fill="#738bb2" stroke="#738bb2"/>
<path d="M517 355 518 357 515 363 513 360" fill="#7289b0" stroke="#7289b0"/>
<path d="M512 356 513 360 509 365 507 361" fill="#738ab1" stroke="#738ab1"/>
<path d="M513 360 515 363 510 368 509 365" fill="#7189af" stroke="#7189af"/>
<path d="M518 357 520 360 516 366 515 363" fill="#7188ae" stroke="#7188ae"/>
<path d="M520 360 521 362 518 368 516 366" fill="#6f86ac" stroke="#6f86ac"/>
<path d="M515 363 516 366 512 371 510 368" fill="#7087ac" stroke="#7087ac"/>
<path d="M516 366 518 368 514 374 512 371" fill="#6e85aa" stroke="#6e85aa"/>
<path d="M521 362 523 364 520 370 518 368" fill="#6e85aa" stroke="#6e85aa"/>
<path d="M523 364 525 365 521 372 520 370" fill="#6d83a8" stroke="#6d83a8"/>
<path d="M518 368 520 370 516 376 514 374" fill="#6d83a8" stroke="#6d83a8"/>
<path d="M520 370 521 372 518 378 516 376" fill="#6b81a6" stroke="#6b81a6"/>
<path d="M525 365 526 366 523 373 521 372" fill="#6b81a6" stroke="#6b81a6"/>
<path d="M526 366 528 367 526 374 523 373" fill="#6a80a4" stroke="#6a80a4"/>
<path d="M521 372 523 373 520 380 518 378" fill="#6a80a3" stroke="#6a80a3"/>
<path d="M523 373 526 374 523 381 520 380" fill="#687ea1" stroke="#687ea1"/>
<path d="M528 367 530 368 528 375 526 374" fill="#697fa2" stroke="#697fa2"/>
<path d="M530 368 532 368 530 375 528 375" fill="#687da1" stroke="#687da1"/>
<path d="M526 374 528 375 525 381 523 381" fill="#677c9f" stroke="#677c9f"/>
<path d="M528 375 530 375 528 382 525 381" fill="#667b9e" stroke="#667b9e"/>
<path d="M532 368 534 368 532 375 530 375" fill="#677c9f" stroke="#677c9f"/>
<path d="M534 368 536 367 534 374 532 375" fill="#667b9e" stroke="#667b9e"/>
<path d="M530 375 532 375 530 381 528 382" fill="#65799c" stroke="#65799c"/>
<path d="M532 375 534 374 532 381 530 381" fill="#64789a" stroke="#64789a"/>
<path d="M536 367 538 367 536 373 534 374" fill="#657a9c" stroke="#657a9c"/>
<path d="M538 367 540 366 539 372 536 373" fill="#64799b" stroke="#64799b"/>
<path d="M534 374 536 373 535 380 532 381" fill="#637799" stroke="#637799"/>
<path d="M536 373 539 372 537 378 535 380" fill="#627697" stroke="#627697"/>
<path d="M540 366 542 364 541 370 539 372" fill="#64789a" stroke="#64789a"/>
<path d="M542 364 543 363 543 369 541 370" fill="#637799" stroke="#637799"/>
<path d="M539 372 541 370 540 377 537 378" fill="#617596" stroke="#617596"/>
<path d="M541 370 543 369 542 375 540 377" fill="#607495" stroke="#607495"/>
<path d="M543 363 545 361 545 366 543 369" fill="#637798" stroke="#637798"/>
<path d="M545 361 547 358 547 364 545 366" fill="#627698" stroke="#627698"/>
<path d="M543 369 545 366 545 372 542 375" fill="#607394" stroke="#607394"/>
<path d="M545 366 547 364 547 369 545 372" fill="#5f7393" stroke="#5f7393"/>
<path d="M547 358 549 356 549 361 547 364" fill="#627697" stroke="#627697"/>
<path d="M549 356 551 353 551 358 549 361" fill="#627697" stroke="#627697"/>
<path d="M547 364 549 361 549 366 547 369" fill="#5f7293" stroke="#5f7293"/>
<path d="M549 361 551 358 551 363 549 366" fill="#5f7292" stroke="#5f7292"/>
<path d="M551 353 552 350 553 355 551 358" fill="#617597" stroke="#617597"/>
<path d="M552 350 554 347 554 351 553 355" fill="#617597" stroke="#617597"/>
<path d="M551 358 553 355 553 359 551 363" fill="#5f7292" stroke="#5f7292"/>
<path d="M553 355 554 351 555 355 553 359" fill="#5e7292" stroke="#5e7292"/>
<path d="M554 347 555 344 556 347 554 351" fill="#627697" stroke="#627697"/>
<path d="M555 344 556 340 558 344 556 347" fill="#627697" stroke="#627697"/>
<path d="M554 351 556 347 557 351 555 355" fill="#5f7292" stroke="#5f7292"/>
<path d="M556 347 558 344 558 347 557 351" fill="#5f7293" stroke="#5f7293"/>
<path d="M556 340 558 337 559 339 558 344" fill="#627698" stroke="#627698"/>
<path d="M558 337 559 333 560 335 559 339" fill="#637798" stroke="#637798"/>
<path d="M558 344 559 339 560 342 558 347" fill="#5f7393" stroke="#5f7393"/>
<path d="M559 339 560 335 561 337 560 342" fill="#607394" stroke="#607394"/>
<path d="M559 333 560 329 561 331 560 335" fill="#637799" stroke="#637799"/>
<path d="M560 329 560 325 562 326 561 331" fill="#64789a" stroke="#64789a"/>
<path d="M560 335 561 331 562 333 561 337" fill="#607495" stroke="#607495"/>
<path d="M561 331 562 326 564 328 562 333" fill="#617596" stroke="#617596"/>
<path d="M560 325 561 321 563 322 562 326" fill="#65799b" stroke="#65799b"/>
<path d="M561 321 562 317 563 317 563 322" fill="#657a9d" stroke="#657a9d"/>
<path d="M562 326 563 322 564 323 564 328" fill="#627697" stroke="#627697"/>
<path d="M563 322 563 317 565 318 564 323" fill="#637799" stroke="#637799"/>
<path d="M562 317 562 313 564 313 563 317" fill="#667b9e" stroke="#667b9e"/>
<path d="M562 313 562 309 564 308 564 313" fill="#677da0" stroke="#677da0"/>
<path d="M563 317 564 313 566 312 565 318" fill="#64789a" stroke="#64789a"/>
<path d="M564 313 564 308 566 307 566 312" fill="#657a9c" stroke="#657a9c"/>
<path d="M562 309 562 305 564 304 564 308" fill="#697ea2" stroke="#697ea2"/>
<path d="M562 305 562 301 564 299 564 304" fill="#6a80a3" stroke="#6a80a3"/>
<path d="M564 308 564 304 566 302 566 307" fill="#667b9e" stroke="#667b9e"/>
<path d="M564 304 564 299 566 297 566 302" fill="#687da0" stroke="#687da0"/>
<path d="M562 301 562 297 564 295 564 299" fill="#6b81a5" stroke="#6b81a5"/>
<path d="M562 297 562 294 564 291 564 295" fill="#6c83a7" stroke="#6c83a7"/>
<path d="M564 299 564 295 566 293 566 297" fill="#697fa3" stroke="#697fa3"/>
<path d="M564 295 564 291 565 288 566 293" fill="#6b81a5" stroke="#6b81a5"/>
<path d="M562 294 561 290 563 287 564 291" fill="#6e84a9" stroke="#6e84a9"/>
<path d="M561 290 561 286 563 283 563 287" fill="#6f86ac" stroke="#6f86ac"/>
<path d="M564 291 563 287 565 283 565 288" fill="#6c83a7" stroke="#6c83a7"/>
<path d="M563 287 563 283 564 279 565 283" fill="#6e85aa" stroke="#6e85aa"/>
<path d="M561 286 560 283 562 279 563 283" fill="#7188ae" stroke="#7188ae"/>
<path d="M560 283 559 280 561 275 562 279" fill="#7289b0" stroke="#7289b0"/>
<path d="M563 283 562 279 563 275 564 279" fill="#7087ac" stroke="#7087ac"/>
<path d="M562 279 561 275 562 271 563 275" fill="#7188af" stroke="#7188af"/>
<path d="M559 280 558 277 560 272 561 275" fill="#738bb2" stroke="#738bb2"/>
<path d="M558 277 557 274 558 269 560 272" fill="#758db4" stroke="#758db4"/>
<path d="M561 275 560 272 561 267 562 271" fill="#738ab1" stroke="#738ab1"/>
<path d="M560 272 558 269 559 263 561 267" fill="#758cb4" stroke="#758cb4"/>
<path d="M557 274 556 272 557 266 558 269" fill="#768fb6" stroke="#768fb6"/>
<path d="M556 272 554 269 555 263 557 266" fill="#7890b8" stroke="#7890b8"/>
<path d="M558 269 557 266 558 260 559 263" fill="#768eb6" stroke="#768eb6"/>
<path d="M557 266 555 263 556 257 558 260" fill="#7890b8" stroke="#7890b8"/>
<path d="M554 269 553 267 554 261 555 263" fill="#7992ba" stroke="#7992ba"/>
<path d="M553 267 551 266 552 259 554 261" fill="#7a93bc" stroke="#7a93bc"/>
<path d="M555 263 554 261 554 255 556 257" fill="#7992bb" stroke="#7992bb"/>
<path d="M554 261 552 259 552 253 554 255" fill="#7b94bd" stroke="#7b94bd"/>
<path d="M551 266 550 264 550 258 552 259" fill="#7c95be" stroke="#7c95be"/>
<path d="M550 264 548 263 548 256 550 258" fill="#7d96c0" stroke="#7d96c0"/>
<path d="M552 259 550 258 550 251 552 253" fill="#7c96bf" stroke="#7c96bf"/>
<path d="M550 258 548 256 548 249 550 251" fill="#7d97c1" stroke="#7d97c1"/>
<path d="M548 263 546 262 546 255 548 256" fill="#7e98c2" stroke="#7e98c2"/>
<path d="M546 262 544 262 544 255 546 255" fill="#7f99c3" stroke="#7f99c3"/>
<path d="M548 256 546 255 546 248 548 249" fill="#7f99c3" stroke="#7f99c3"/>
<path d="M546 255 544 255 543 248 546 248" fill="#809ac5" stroke="#809ac5"/>
<path d="M544 262 542 262 542 255 544 255" fill="#809ac5" stroke="#809ac5"/>
<path d="M542 262 540 262 540 255 542 255" fill="#819bc6" stroke="#819bc6"/>
<path d="M544 255 542 255 541 247 543 248" fill="#819cc6" stroke="#819cc6"/>
<path d="M542 255 540 255 538 248 541 247" fill="#829dc8" stroke="#829dc8"/>
<path d="M540 262 538 263 537 255 540 255" fill="#829cc8" stroke="#829cc8"/>
<path d="M538 263 537 263 535 256 537 255" fill="#839dc9" stroke="#839dc9"/>
<path d="M540 255 537 255 536 248 538 248" fill="#839ec9" stroke="#839ec9"/>
<path d="M537 255 535 256 533 249 536 248" fill="#849fcb" stroke="#849fcb"/>
<path d="M537 263 535 265 533 258 535 256" fill="#839eca" stroke="#839eca"/>
<path d="M535 265 533 266 531 259 533 258" fill="#849fcb" stroke="#849fcb"/>
<path d="M535 256 533 258 531 251 533 249" fill="#85a0cc" stroke="#85a0cc"/>
<path d="M533 258 531 259 528 252 531 251" fill="#86a1cd" stroke="#86a1cd"/>
<path d="M533 266 531 268 528 261 531 259" fill="#85a0cb" stroke="#85a0cb"/>
<path d="M531 268 529 270 526 264 528 261" fill="#85a0cc" stroke="#85a0cc"/>
<path d="M531 259 528 261 526 255 528 252" fill="#86a2ce" stroke="#86a2ce"/>
<path d="M528 261 526 264 523 257 526 255" fill="#87a2ce" stroke="#87a2ce"/>
<path d="M529 270 527 272 524 266 526 264" fill="#85a1cc" stroke="#85a1cc"/>
<path d="M527 272 525 275 522 269 524 266" fill="#86a1cc" stroke="#86a1cc"/>
<path d="M526 264 524 266 521 260 523 257" fill="#87a3cf" stroke="#87a3cf"/>
<path d="M524 266 522 269 519 264 521 260" fill="#88a3cf" stroke="#88a3cf"/>
<path d="M525 275 523 278 520 273 522 269" fill="#86a1cd" stroke="#86a1cd"/>
<path d="M523 278 522 281 518 276 520 273" fill="#86a1cd" stroke="#86a1cd"/>
<path d="M522 269 520 273 517 267 519 264" fill="#88a3cf" stroke="#88a3cf"/>
<path d="M520 273 518 276 514 271 517 267" fill="#88a3cf" stroke="#88a3cf"/>
<path d="M522 281 520 285 516 280 518 276" fill="#86a1cc" stroke="#86a1cc"/>
<path d="M520 285 519 288 515 284 516 280" fill="#85a0cc" stroke="#85a0cc"/>
<path d="M518 276 516 280 512 276 514 271" fill="#88a3cf" stroke="#88a3cf"/>
<path d="M516 280 515 284 511 280 512 276" fill="#87a3ce" stroke="#87a3ce"/>
<path d="M519 288 517 292 513 289 515 284" fill="#85a0cb" stroke="#85a0cb"/>
<path d="M517 292 516 296 512 293 513 289" fill="#859fcb" stroke="#859fcb"/>
<path d="M515 284 513 289 509 285 511 280" fill="#87a2ce" stroke="#87a2ce"/>
<path d="M513 289 512 293 508 290 509 285" fill="#86a2cd" stroke="#86a2cd"/>
<path d="M516 296 515 300 511 298 512 293" fill="#849fca" stroke="#849fca"/>
<path d="M515 300 514 304 510 302 511 298" fill="#839ec9" stroke="#839ec9"/>
<path d="M512 293 511 298 506 295 508 290" fill="#86a1cc" stroke="#86a1cc"/>
<path d="M511 298 510 302 505 301 506 295" fill="#85a0cb" stroke="#85a0cb"/>
<path d="M514 304 514 308 509 307 510 302" fill="#829dc7" stroke="#829dc7"/>
<path d="M514 308 513 313 508 312 509 307" fill="#819cc6" stroke="#819cc6"/>
<path d="M510 302 509 307 504 306 505 301" fill="#849fc9" stroke="#849fc9"/>
<path d="M509 307 508 312 503 312 504 306" fill="#839dc8" stroke="#839dc8"/>
<path d="M503 312 503 317 497 317 498 311" fill="#839dc8" stroke="#839dc8"/>
<path d="M503 317 502 323 497 323 497 317" fill="#819cc6" stroke="#819cc6"/>
<path d="M498 311 497 317 492 317 492 310" fill="#849fc9" stroke="#849fc9"/>
<path d="M497 317 497 323 491 324 492 317" fill="#839dc7" stroke="#839dc7"/>
<path d="M502 323 502 328 497 329 497 323" fill="#809ac4" stroke="#809ac4"/>
<path d="M502 328 502 333 497 335 497 329" fill="#7e98c2" stroke="#7e98c2"/>
<path d="M497 323 497 329 491 331 491 324" fill="#819bc5" stroke="#819bc5"/>
<path d="M497 329 497 335 491 337 491 331" fill="#7f99c2" stroke="#7f99c2"/>
<path d="M502 333 503 338 497 341 497 335" fill="#7d96bf" stroke="#7d96bf"/>
<path d="M503 338 503 343 498 347 497 341" fill="#7b94bd" stroke="#7b94bd"/>
<path d="M497 335 497 341 492 343 491 337" fill="#7d97c0" stroke="#7d97c0"/>
<path d="M497 341 498 347 492 350 492 343" fill="#7b94bd" stroke="#7b94bd"/>
<path d="M503 343 504 348 499 352 498 347" fill="#7992ba" stroke="#7992ba"/>
<path d="M504 348 505 353 500 357 499 352" fill="#7790b8" stroke="#7790b8"/>
<path d="M498 347 499 352 493 356 492 350" fill="#7992ba" stroke="#7992ba"/>
<path d="M499 352 500 357 494 361 493 356" fill="#7790b7" stroke="#7790b7"/>
<path d="M505 353 506 357 501 362 500 357" fill="#768eb5" stroke="#768eb5"/>
<path d="M506 357 507 361 502 366 501 362" fill="#748cb3" stroke="#748cb3"/>
<path d="M500 357 501 362 496 366 494 361" fill="#758db5" stroke="#758db5"/>
<path d="M501 362 502 366 497 371 496 366" fill="#738bb2" stroke="#738bb2"/>
<path d="M507 361 509 365 504 370 502 366" fill="#728ab0" stroke="#728ab0"/>
<path d="M509 365 510 368 506 374 504 370" fill="#7088ad" stroke="#7088ad"/>
<path d="M502 366 504 370 499 376 497 371" fill="#7189af" stroke="#7189af"/>
<path d="M504 370 506 374 501 380 499 376" fill="#7086ac" stroke="#7086ac"/>
<path d="M510 368 512 371 508 378 506 374" fill="#6f85ab" stroke="#6f85ab"/>
<path d="M512 371 514 374 510 381 508 378" fill="#6d83a8" stroke="#6d83a8"/>
<path d="M506 374 508 378 503 384 501 380" fill="#6e84a9" stroke="#6e84a9"/>
<path d="M508 378 510 381 506 387 503 384" fill="#6c82a6" stroke="#6c82a6"/>
<path d="M514 374 516 376 512 383 510 381" fill="#6b81a6" stroke="#6b81a6"/>
<path d="M516 376 518 378 515 385 512 383" fill="#6a7fa3" stroke="#6a7fa3"/>
<path d="M510 381 512 383 508 390 506 387" fill="#6a80a3" stroke="#6a80a3"/>
<path d="M512 383 515 385 511 392 508 390" fill="#687da1" stroke="#687da1"/>
<path d="M518 378 520 380 517 387 515 385" fill="#687da1" stroke="#687da1"/>
<path d="M520 380 523 381 520 388 517 387" fill="#677c9f" stroke="#677c9f"/>
<path d="M515 385 517 387 514 394 511 392" fill="#667b9e" stroke="#667b9e"/>
<path d="M517 387 520 388 516 395 514 394" fill="#65799b" stroke="#65799b"/>
<path d="M523 381 525 381 522 389 520 388" fill="#657a9c" stroke="#657a9c"/>
<path d="M525 381 528 382 525 389 522 389" fill="#64789a" stroke="#64789a"/>
<path d="M520 388 522 389 519 396 516 395" fill="#637799" stroke="#637799"/>
<path d="M522 389 525 389 522 396 519 396" fill="#617597" stroke="#617597"/>
<path d="M528 382 530 381 528 389 525 389" fill="#627798" stroke="#627798"/>
<path d="M530 381 532 381 530 388 528 389" fill="#617596" stroke="#617596"/>
<path d="M525 389 528 389 525 396 522 396" fill="#607495" stroke="#607495"/>
<path d="M528 389 530 388 528 395 525 396" fill="#5f7293" stroke="#5f7293"/>
<path d="M532 381 535 380 533 387 530 388" fill="#607495" stroke="#607495"/>
<path d="M535 380 537 378 536 385 533 387" fill="#5f7393" stroke="#5f7393"/>
<path d="M530 388 533 387 531 394 528 395" fill="#5d7191" stroke="#5d7191"/>
<path d="M533 387 536 385 534 392 531 394" fill="#5c6f8f" stroke="#5c6f8f"/>
<path d="M537 378 540 377 539 383 536 385" fill="#5e7292" stroke="#5e7292"/>
<path d="M540 377 542 375 541 381 539 383" fill="#5d7191" stroke="#5d7191"/>
<path d="M536 385 539 383 537 390 534 392" fill="#5b6e8d" stroke="#5b6e8d"/>
<path d="M539 383 541 381 540 387 537 390" fill="#5a6d8c" stroke="#5a6d8c"/>
<path d="M542 375 545 372 544 378 541 381" fill="#5d7090" stroke="#5d7090"/>
<path d="M545 372 547 369 546 375 544 378" fill="#5c6f8f" stroke="#5c6f8f"/>
<path d="M541 381 544 378 543 384 540 387" fill="#5a6c8b" stroke="#5a6c8b"/>
<path d="M544 378 546 375 546 381 543 384" fill="#596b8a" stroke="#596b8a"/>
<path d="M547 369 549 366 549 372 546 375" fill="#5c6f8e" stroke="#5c6f8e"/>
<path d="M549 366 551 363 551 368 549 372" fill="#5c6e8e" stroke="#5c6e8e"/>
<path d="M546 375 549 372 549 377 546 381" fill="#586b89" stroke="#586b89"/>
<path d="M549 372 551 368 551 373 549 377" fill="#586a89" stroke="#586a89"/>
<path d="M551 363 553 359 553 364 551 368" fill="#5b6e8d" stroke="#5b6e8d"/>
<path d="M553 359 555 355 556 359 553 364" fill="#5b6e8d" stroke="#5b6e8d"/>
<path d="M551 368 553 364 554 368 551 373" fill="#586a88" stroke="#586a88"/>
<path d="M553 364 556 359 556 363 554 368" fill="#586a88" stroke="#586a88"/>
<path d="M555 355 557 351 558 355 556 359" fill="#5b6e8d" stroke="#5b6e8d"/>
<path d="M557 351 558 347 559 350 558 355" fill="#5c6e8e" stroke="#5c6e8e"/>
<path d="M556 359 558 355 558 358 556 363" fill="#586a88" stroke="#586a88"/>
<path d="M558 355 559 350 560 353 558 358" fill="#586a88" stroke="#586a88"/>
<path d="M558 347 560 342 561 345 559 350" fill="#5c6f8e" stroke="#5c6f8e"/>
<path d="M560 342 561 337 562 340 561 345" fill="#5c6f8f" stroke="#5c6f8f"/>
<path d="M559 350 561 345 562 347 560 353" fill="#586a88" stroke="#586a88"/>
<path d="M561 345 562 340 563 342 562 347" fill="#586a89" stroke="#586a89"/>
<path d="M561 337 562 333 564 334 562 340" fill="#5d7090" stroke="#5d7090"/>
<path d="M562 333 564 328 565 329 564 334" fill="#5e7191" stroke="#5e7191"/>
<path d="M562 340 564 334 565 336 563 342" fill="#596b8a" stroke="#596b8a"/>
<path d="M564 334 565 329 566 330 565 336" fill="#596c8a" stroke="#596c8a"/>
<path d="M564 328 564 323 566 323 565 329" fill="#5f7292" stroke="#5f7292"/>
<path d="M564 323 565 318 567 318 566 323" fill="#607394" stroke="#607394"/>
<path d="M565 329 566 323 567 324 566 330" fill="#5a6d8c" stroke="#5a6d8c"/>
<path d="M566 323 567 318 568 318 567 324" fill="#5b6e8d" stroke="#5b6e8d"/>
<path d="M565 318 566 312 567 312 567 318" fill="#617596" stroke="#617596"/>
<path d="M566 312 566 307 568 306 567 312" fill="#627698" stroke="#627698"/>
<path d="M567 318 567 312 569 312 568 318" fill="#5d708f" stroke="#5d708f"/>
<path d="M567 312 568 306 569 305 569 312" fill="#5e7292" stroke="#5e7292"/>
<path d="M566 307 566 302 568 301 568 306" fill="#64789a" stroke="#64789a"/>
<path d="M566 302 566 297 568 295 568 301" fill="#657a9d" stroke="#657a9d"/>
<path d="M568 306 568 301 569 299 569 305" fill="#607495" stroke="#607495"/>
<path d="M568 301 568 295 569 293 569 299" fill="#627698" stroke="#627698"/>
<path d="M566 297 566 293 567 290 568 295" fill="#677c9f" stroke="#677c9f"/>
<path d="M566 293 565 288 567 285 567 290" fill="#697ea2" stroke="#697ea2"/>
<path d="M568 295 567 290 569 288 569 293" fill="#64799b" stroke="#64799b"/>
<path d="M567 290 567 285 568 282 569 288" fill="#667b9e" stroke="#667b9e"/>
<path d="M565 288 565 283 566 280 567 285" fill="#6b81a5" stroke="#6b81a5"/>
<path d="M565 283 564 279 566 275 566 280" fill="#6d83a7" stroke="#6d83a7"/>
<path d="M567 285 566 280 568 276 568 282" fill="#697ea2" stroke="#697ea2"/>
<path d="M566 280 566 275 567 271 568 276" fill="#6b81a5" stroke="#6b81a5"/>
<path d="M564 279 563 275 564 270 566 275" fill="#6e85aa" stroke="#6e85aa"/>
<path d="M563 275 562 271 563 266 564 270" fill="#7087ad" stroke="#7087ad"/>
<path d="M566 275 564 270 566 266 567 271" fill="#6d83a8" stroke="#6d83a8"/>
<path d="M564 270 563 266 564 261 566 266" fill="#6f86ab" stroke="#6f86ab"/>
<path d="M562 271 561 267 562 262 563 266" fill="#728ab0" stroke="#728ab0"/>
<path d="M561 267 559 263 560 258 562 262" fill="#748cb3" stroke="#748cb3"/>
<path d="M563 266 562 262 563 256 564 261" fill="#7189af" stroke="#7189af"/>
<path d="M562 262 560 258 561 252 563 256" fill="#738bb2" stroke="#738bb2"/>
<path d="M559 263 558 260 559 254 560 258" fill="#768eb5" stroke="#768eb5"/>
<path d="M558 260 556 257 557 251 559 254" fill="#7890b8" stroke="#7890b8"/>
<path d="M560 258 559 254 559 248 561 252" fill="#758db5" stroke="#758db5"/>
<path d="M559 254 557 251 557 245 559 248" fill="#7790b8" stroke="#7790b8"/>
<path d="M556 257 554 255 555 248 557 251" fill="#7992bb" stroke="#7992bb"/>
<path d="M554 255 552 253 552 246 555 248" fill="#7b94bd" stroke="#7b94bd"/>
<path d="M557 251 555 248 555 241 557 245" fill="#7992bb" stroke="#7992bb"/>
<path d="M555 248 552 246 552 239 555 241" fill="#7b94bd" stroke="#7b94bd"/>
<path d="M552 253 550 251 550 244 552 246" fill="#7c96c0" stroke="#7c96c0"/>
<path d="M550 251 548 249 548 242 550 244" fill="#7e98c2" stroke="#7e98c2"/>
<path d="M552 246 550 244 550 236 552 239" fill="#7d96c0" stroke="#7d96c0"/>
<path d="M550 244 548 242 547 235 550 236" fill="#7e98c3" stroke="#7e98c3"/>
<path d="M548 249 546 248 545 241 548 242" fill="#7f9ac4" stroke="#7f9ac4"/>
<path d="M546 248 543 248 542 240 545 241" fill="#819bc6" stroke="#819bc6"/>
<path d="M548 242 545 241 544 233 547 235" fill="#809ac5" stroke="#809ac5"/>
<path d="M545 241 542 240 541 232 544 233" fill="#829cc7" stroke="#829cc7"/>
<path d="M543 248 541 247 540 240 542 240" fill="#829dc8" stroke="#829dc8"/>
<path d="M541 247 538 248 537 240 540 240" fill="#839eca" stroke="#839eca"/>
<path d="M542 240 540 240 539 232 541 232" fill="#839ec9" stroke="#839ec9"/>
<path d="M540 240 537 240 535 232 539 232" fill="#849fcb" stroke="#849fcb"/>
<path d="M538 248 536 248 534 241 537 240" fill="#849fcb" stroke="#849fcb"/>
<path d="M536 248 533 249 531 242 534 241" fill="#85a1cd" stroke="#85a1cd"/>
<path d="M537 240 534 241 532 233 535 232" fill="#86a1cd" stroke="#86a1cd"/>
<path d="M534 241 531 242 529 234 532 233" fill="#87a2cf" stroke="#87a2cf"/>
<path d="M533 249 531 251 529 243 531 242" fill="#86a2ce" stroke="#86a2ce"/>
<path d="M531 251 528 252 526 245 529 243" fill="#87a3cf" stroke="#87a3cf"/>
<path d="M531 242 529 243 526 236 529 234" fill="#88a4d0" stroke="#88a4d0"/>
<path d="M529 243 526 245 523 238 526 236" fill="#89a5d1" stroke="#89a5d1"/>
<path d="M528 252 526 255 523 248 526 245" fill="#88a4d0" stroke="#88a4d0"/>
<path d="M526 255 523 257 520 251 523 248" fill="#89a4d1" stroke="#89a4d1"/>
<path d="M526 245 523 248 520 241 523 238" fill="#8aa6d2" stroke="#8aa6d2"/>
<path d="M523 248 520 251 517 244 520 241" fill="#8ba7d3" stroke="#8ba7d3"/>
<path d="M523 257 521 260 518 254 520 251" fill="#89a5d1" stroke="#89a5d1"/>
<path d="M521 260 519 264 515 258 518 254" fill="#8aa5d2" stroke="#8aa5d2"/>
<path d="M520 251 518 254 514 248 517 244" fill="#8ba7d4" stroke="#8ba7d4"/>
<path d="M518 254 515 258 511 252 514 248" fill="#8ca8d4" stroke="#8ca8d4"/>
<path d="M519 264 517 267 513 262 515 258" fill="#8aa6d2" stroke="#8aa6d2"/>
<path d="M517 267 514 271 510 266 513 262" fill="#8aa6d2" stroke="#8aa6d2"/>
<path d="M515 258 513 262 509 256 511 252" fill="#8ca8d5" stroke="#8ca8d5"/>
<path d="M513 262 510 266 506 261 509 256" fill="#8ca8d5" stroke="#8ca8d5"/>
<path d="M514 271 512 276 508 271 510 266" fill="#8aa6d2" stroke="#8aa6d2"/>
<path d="M512 276 511 280 506 276 508 271" fill="#8aa5d1" stroke="#8aa5d1"/>
<path d="M510 266 508 271 503 266 506 261" fill="#8ca8d4" stroke="#8ca8d4"/>
<path d="M508 271 506 276 501 272 503 266" fill="#8ca8d4" stroke="#8ca8d4"/>
<path d="M511 280 509 285 504 282 506 276" fill="#89a5d0" stroke="#89a5d0"/>
<path d="M509 285 508 290 503 287 504 282" fill="#89a4cf" stroke="#89a4cf"/>
<path d="M506 276 504 282 499 278 501 272" fill="#8ca7d3" stroke="#8ca7d3"/>
<path d="M504 282 503 287 497 284 499 278" fill="#8ba7d2" stroke="#8ba7d2"/>
<path d="M508 290 506 295 501 293 503 287" fill="#88a3ce" stroke="#88a3ce"/>
<path d="M506 295 505 301 500 299 501 293" fill="#87a2cd" stroke="#87a2cd"/>
<path d="M503 287 501 293 496 291 497 284" fill="#8aa6d1" stroke="#8aa6d1"/>
<path d="M501 293 500 299 494 297 496 291" fill="#89a4cf" stroke="#89a4cf"/>
<path d="M505 301 504 306 499 305 500 299" fill="#86a1cb" stroke="#86a1cb"/>
<path d="M504 306 503 312 498 311 499 305" fill="#849fca" stroke="#849fca"/>
<path d="M500 299 499 305 493 304 494 297" fill="#88a3ce" stroke="#88a3ce"/>
<path d="M499 305 498 311 492 310 493 304" fill="#86a1cc" stroke="#86a1cc"/>
<path d="M492 310 492 317 485 317 486 310" fill="#86a1cb" stroke="#86a1cb"/>
<path d="M492 317 491 324 485 325 485 317" fill="#849ec8" stroke="#849ec8"/>
<path d="M486 310 485 317 479 317 480 309" fill="#87a2cc" stroke="#87a2cc"/>
<path d="M485 317 485 325 479 325 479 317" fill="#85a0ca" stroke="#85a0ca"/>
<path d="M491 324 491 331 485 332 485 325" fill="#829cc6" stroke="#829cc6"/>
<path d="M491 331 491 337 485 339 485 332" fill="#8099c3" stroke="#8099c3"/>
<path d="M485 325 485 332 479 333 479 325" fill="#839dc7" stroke="#839dc7"/>
<path d="M485 332 485 339 479 341 479 333" fill="#809ac4" stroke="#809ac4"/>
<path d="M491 337 492 343 485 346 485 339" fill="#7d97c0" stroke="#7d97c0"/>
<path d="M492 343 492 350 486 353 485 346" fill="#7b94bd" stroke="#7b94bd"/>
<path d="M485 339 485 346 479 349 479 341" fill="#7e97c0" stroke="#7e97c0"/>
<path d="M485 346 486 353 480 356 479 349" fill="#7b94bd" stroke="#7b94bd"/>
<path d="M492 350 493 356 487 359 486 353" fill="#7992ba" stroke="#7992ba"/>
<path d="M493 356 494 361 488 365 487 359" fill="#778fb7" stroke="#778fb7"/>
<path d="M486 353 487 359 481 363 480 356" fill="#7992ba" stroke="#7992ba"/>
<path d="M487 359 488 365 483 370 481 363" fill="#778fb6" stroke="#778fb6"/>
<path d="M494 361 496 366 490 371 488 365" fill="#758db4" stroke="#758db4"/>
<path d="M496 366 497 371 492 377 490 371" fill="#738ab1" stroke="#738ab1"/>
<path d="M488 365 490 371 484 376 483 370" fill="#748cb3" stroke="#748cb3"/>
<path d="M490 371 492 377 486 382 484 376" fill="#7289b0" stroke="#7289b0"/>
<path d="M497 371 499 376 494 382 492 377" fill="#7188ae" stroke="#7188ae"/>
<path d="M499 376 501 380 496 386 494 382" fill="#6e85aa" stroke="#6e85aa"/>
<path d="M492 377 494 382 488 387 486 382" fill="#7087ac" stroke="#7087ac"/>
<path d="M494 382 496 386 491 392 488 387" fill="#6d84a9" stroke="#6d84a9"/>
<path d="M501 380 503 384 498 390 496 386" fill="#6c83a7" stroke="#6c83a7"/>
<path d="M503 384 506 387 501 394 498 390" fill="#6a80a4" stroke="#6a80a4"/>
<path d="M496 386 498 390 493 396 491 392" fill="#6b81a5" stroke="#6b81a5"/>
<path d="M498 390 501 394 496 400 493 396" fill="#697ea2" stroke="#697ea2"/>
<path d="M506 387 508 390 504 396 501 394" fill="#687ea1" stroke="#687ea1"/>
<path d="M508 390 511 392 507 399 504 396" fill="#667b9e" stroke="#667b9e"/>
<path d="M501 394 504 396 499 403 496 400" fill="#677c9e" stroke="#677c9e"/>
<path d="M504 396 507 399 502 406 499 403" fill="#64799b" stroke="#64799b"/>
<path d="M511 392 514 394 510 401 507 399" fill="#64799b" stroke="#64799b"/>
<path d="M514 394 516 395 513 402 510 401" fill="#627798" stroke="#627798"/>
<path d="M507 399 510 401 506 408 502 406" fill="#627698" stroke="#627698"/>
<path d="M510 401 513 402 509 409 506 408" fill="#607495" stroke="#607495"/>
<path d="M516 395 519 396 516 403 513 402" fill="#617596" stroke="#617596"/>
<path d="M519 396 522 396 519 403 516 403" fill="#5f7393" stroke="#5f7393"/>
<path d="M513 402 516 403 513 410 509 409" fill="#5e7292" stroke="#5e7292"/>
<path d="M516 403 519 403 516 410 513 410" fill="#5d6f8f" stroke="#5d6f8f"/>
<path d="M522 396 525 396 523 403 519 403" fill="#5d7191" stroke="#5d7191"/>
<path d="M525 396 528 395 526 402 523 403" fill="#5c6f8e" stroke="#5c6f8e"/>
<path d="M519 403 523 403 520 410 516 410" fill="#5b6d8d" stroke="#5b6d8d"/>
<path d="M523 403 526 402 523 409 520 410" fill="#596b8a" stroke="#596b8a"/>
<path d="M528 395 531 394 529 401 526 402" fill="#5b6d8c" stroke="#5b6d8c"/>
<path d="M531 394 534 392 533 399 529 401" fill="#596c8a" stroke="#596c8a"/>
<path d="M526 402 529 401 527 407 523 409" fill="#586a88" stroke="#586a88"/>
<path d="M529 401 533 399 531 405 527 407" fill="#566886" stroke="#566886"/>
<path d="M534 392 537 390 536 396 533 399" fill="#586a89" stroke="#586a89"/>
<path d="M537 390 540 387 539 393 536 396" fill="#576987" stroke="#576987"/>
<path d="M533 399 536 396 534 403 531 405" fill="#556684" stroke="#556684"/>
<path d="M536 396 539 393 538 399 534 403" fill="#546582" stroke="#546582"/>
<path d="M540 387 543 384 542 390 539 393" fill="#566886" stroke="#566886"/>
<path d="M543 384 546 381 545 386 542 390" fill="#566785" stroke="#566785"/>
<path d="M539 393 542 390 541 396 538 399" fill="#536481" stroke="#536481"/>
<path d="M542 390 545 386 544 392 541 396" fill="#52637f" stroke="#52637f"/>
<path d="M546 381 549 377 548 382 545 386" fill="#556684" stroke="#556684"/>
<path d="M549 377 551 373 551 377 548 382" fill="#546683" stroke="#546683"/>
<path d="M545 386 548 382 547 387 544 392" fill="#51627e" stroke="#51627e"/>
<path d="M548 382 551 377 550 382 547 387" fill="#51617d" stroke="#51617d"/>
<path d="M551 373 554 368 553 373 551 377" fill="#546583" stroke="#546583"/>
<path d="M554 368 556 363 556 367 553 373" fill="#546582" stroke="#546582"/>
<path d="M551 377 553 373 553 377 550 382" fill="#50607c" stroke="#50607c"/>
<path d="M553 373 556 367 556 371 553 377" fill="#4f5f7b" stroke="#4f5f7b"/>
<path d="M556 363 558 358 558 362 556 367" fill="#536582" stroke="#536582"/>
<path d="M558 358 560 353 560 356 558 362" fill="#536481" stroke="#536481"/>
<path d="M556 367 558 362 558 365 556 371" fill="#4e5e79" stroke="#4e5e79"/>
<path d="M558 362 560 356 561 359 558 365" fill="#4d5c77" stroke="#4d5c77"/>
<path d="M560 353 562 347 562 350 560 356" fill="#536480" stroke="#536480"/>
<path d="M562 347 563 342 564 344 562 350" fill="#51627e" stroke="#51627e"/>
<path d="M560 356 562 350 563 353 561 359" fill="#4e5e7a" stroke="#4e5e7a"/>
<path d="M562 350 564 344 565 346 563 353" fill="#50607c" stroke="#50607c"/>
<path d="M563 342 565 336 566 338 564 344" fill="#536380" stroke="#536380"/>
<path d="M565 336 566 330 567 331 566 338" fill="#546582" stroke="#546582"/>
<path d="M564 344 566 338 566 339 565 346" fill="#51627e" stroke="#51627e"/>
<path d="M566 338 567 331 568 332 566 339" fill="#536480" stroke="#536480"/>
<path d="M566 330 567 324 568 324 567 331" fill="#556785" stroke="#556785"/>
<path d="M567 324 568 318 569 318 568 324" fill="#576987" stroke="#576987"/>
<path d="M567 331 568 324 569 325 568 332" fill="#546683" stroke="#546683"/>
<path d="M568 324 569 318 570 318 569 325" fill="#566885" stroke="#566885"/>
<path d="M568 318 569 312 570 311 569 318" fill="#596b89" stroke="#596b89"/>
<path d="M569 312 569 305 570 304 570 311" fill="#5a6d8c" stroke="#5a6d8c"/>
<path d="M569 318 570 311 571 311 570 318" fill="#586a88" stroke="#586a88"/>
<path d="M570 311 570 304 571 304 571 311" fill="#596c8a" stroke="#596c8a"/>
<path d="M569 305 569 299 570 298 570 304" fill="#5c6e8e" stroke="#5c6e8e"/>
<path d="M569 299 569 293 570 291 570 298" fill="#5d7090" stroke="#5d7090"/>
<path d="M570 304 570 298 571 296 571 304" fill="#5b6e8d" stroke="#5b6e8d"/>
<path d="M570 298 570 291 571 289 571 296" fill="#5d708f" stroke="#5d708f"/>
<path d="M569 293 569 288 570 285 570 291" fill="#5f7293" stroke="#5f7293"/>
<path d="M569 288 568 282 570 279 570 285" fill="#637799" stroke="#637799"/>
<path d="M570 291 570 285 571 282 571 289" fill="#5e7292" stroke="#5e7292"/>
<path d="M570 285 570 279 570 276 571 282" fill="#607495" stroke="#607495"/>
<path d="M568 282 568 276 569 273 570 279" fill="#667b9d" stroke="#667b9d"/>
<path d="M568 276 567 271 568 267 569 273" fill="#697ea2" stroke="#697ea2"/>
<path d="M570 279 569 273 570 269 570 276" fill="#627697" stroke="#627697"/>
<path d="M569 273 568 267 569 263 570 269" fill="#657a9c" stroke="#657a9c"/>
<path d="M567 271 566 266 567 261 568 267" fill="#6b81a6" stroke="#6b81a6"/>
<path d="M566 266 564 261 565 256 567 261" fill="#6e84a9" stroke="#6e84a9"/>
<path d="M568 267 567 261 567 257 569 263" fill="#697fa2" stroke="#697fa2"/>
<path d="M567 261 565 256 566 251 567 257" fill="#6c82a7" stroke="#6c82a7"/>
<path d="M564 261 563 256 563 251 565 256" fill="#7087ad" stroke="#7087ad"/>
<path d="M563 256 561 252 562 246 563 251" fill="#738ab1" stroke="#738ab1"/>
<path d="M565 256 563 251 564 246 566 251" fill="#6f86ab" stroke="#6f86ab"/>
<path d="M563 251 562 246 562 241 564 246" fill="#7289af" stroke="#7289af"/>
<path d="M561 252 559 248 560 242 562 246" fill="#758db4" stroke="#758db4"/>
<path d="M559 248 557 245 557 238 560 242" fill="#778fb7" stroke="#778fb7"/>
<path d="M562 246 560 242 560 236 562 241" fill="#748cb3" stroke="#748cb3"/>
<path d="M560 242 557 238 557 232 560 236" fill="#778fb7" stroke="#778fb7"/>
<path d="M557 245 555 241 555 235 557 238" fill="#7992bb" stroke="#7992bb"/>
<path d="M555 241 552 239 552 232 555 235" fill="#7b94be" stroke="#7b94be"/>
<path d="M557 238 555 235 555 228 557 232" fill="#7992ba" stroke="#7992ba"/>
<path d="M555 235 552 232 552 225 555 228" fill="#7b94be" stroke="#7b94be"/>
<path d="M552 239 550 236 549 229 552 232" fill="#7d97c0" stroke="#7d97c0"/>
<path d="M550 236 547 235 546 227 549 229" fill="#7f99c3" stroke="#7f99c3"/>
<path d="M552 232 549 229 549 222 552 225" fill="#7d97c1" stroke="#7d97c1"/>
<path d="M549 229 546 227 546 220 549 222" fill="#7f99c4" stroke="#7f99c4"/>
<path d="M547 235 544 233 543 226 546 227" fill="#819bc6" stroke="#819bc6"/>
<path d="M544 233 541 232 540 225 543 226" fill="#829dc8" stroke="#829dc8"/>
<path d="M546 227 543 226 542 218 546 220" fill="#819cc7" stroke="#819cc7"/>
<path d="M543 226 540 225 539 217 542 218" fill="#839ec9" stroke="#839ec9"/>
<path d="M541 232 539 232 537 224 540 225" fill="#849fcb" stroke="#849fcb"/>
<path d="M539 232 535 232 534 224 537 224" fill="#85a1cd" stroke="#85a1cd"/>
<path d="M540 225 537 224 535 217 539 217" fill="#85a0cc" stroke="#85a0cc"/>
<path d="M537 224 534 224 532 217 535 217" fill="#86a2ce" stroke="#86a2ce"/>
<path d="M535 232 532 233 530 225 534 224" fill="#87a2cf" stroke="#87a2cf"/>
<path d="M532 233 529 234 527 226 530 225" fill="#88a4d0" stroke="#88a4d0"/>
<path d="M534 224 530 225 528 217 532 217" fill="#88a4d0" stroke="#88a4d0"/>
<path d="M530 225 527 226 524 219 528 217" fill="#89a5d2" stroke="#89a5d2"/>
<path d="M529 234 526 236 524 228 527 226" fill="#89a5d2" stroke="#89a5d2"/>
<path d="M526 236 523 238 520 231 524 228" fill="#8aa6d3" stroke="#8aa6d3"/>
<path d="M527 226 524 228 521 221 524 219" fill="#8ba7d4" stroke="#8ba7d4"/>
<path d="M524 228 520 231 517 223 521 221" fill="#8ca8d5" stroke="#8ca8d5"/>
<path d="M523 238 520 241 517 234 520 231" fill="#8ba8d5" stroke="#8ba8d5"/>
<path d="M520 241 517 244 513 237 517 234" fill="#8ca9d6" stroke="#8ca9d6"/>
<path d="M520 231 517 234 513 227 517 223" fill="#8daad7" stroke="#8daad7"/>
<path d="M517 234 513 237 510 230 513 227" fill="#8eabd8" stroke="#8eabd8"/>
<path d="M517 244 514 248 510 241 513 237" fill="#8daad6" stroke="#8daad6"/>
<path d="M514 248 511 252 507 246 510 241" fill="#8eaad7" stroke="#8eaad7"/>
<path d="M513 237 510 241 506 235 510 230" fill="#90acd9" stroke="#90acd9"/>
<path d="M510 241 507 246 503 239 506 235" fill="#91adda" stroke="#91adda"/>
<path d="M511 252 509 256 504 250 507 246" fill="#8fabd7" stroke="#8fabd7"/>
<path d="M509 256 506 261 501 256 504 250" fill="#8fabd7" stroke="#8fabd7"/>
<path d="M507 246 504 250 500 245 503 239" fill="#92aeda" stroke="#92aeda"/>
<path d="M504 250 501 256 496 251 500 245" fill="#92aeda" stroke="#92aeda"/>
<path d="M506 261 503 266 499 262 501 256" fill="#8fabd7" stroke="#8fabd7"/>
<path d="M503 266 501 272 496 268 499 262" fill="#8fabd7" stroke="#8fabd7"/>
<path d="M501 256 499 262 494 257 496 251" fill="#92afda" stroke="#92afda"/>
<path d="M499 262 496 268 491 263 494 257" fill="#92afda" stroke="#92afda"/>
<path d="M501 272 499 278 494 274 496 268" fill="#8fabd6" stroke="#8fabd6"/>
<path d="M499 278 497 284 492 281 494 274" fill="#8eaad5" stroke="#8eaad5"/>
<path d="M496 268 494 274 488 271 491 263" fill="#92aed9" stroke="#92aed9"/>
<path d="M494 274 492 281 486 278 488 271" fill="#91add7" stroke="#91add7"/>
<path d="M497 284 496 291 490 288 492 281" fill="#8da8d3" stroke="#8da8d3"/>
<path d="M496 291 494 297 488 295 490 288" fill="#8ba7d2" stroke="#8ba7d2"/>
<path d="M492 281 490 288 484 285 486 278" fill="#90abd6" stroke="#90abd6"/>
<path d="M490 288 488 295 482 293 484 285" fill="#8ea9d4" stroke="#8ea9d4"/>
<path d="M494 297 493 304 487 302 488 295" fill="#8aa5d0" stroke="#8aa5d0"/>
<path d="M493 304 492 310 486 310 487 302" fill="#88a3cd" stroke="#88a3cd"/>
<path d="M488 295 487 302 481 301 482 293" fill="#8ca7d2" stroke="#8ca7d2"/>
<path d="M487 302 486 310 480 309 481 301" fill="#8aa5cf" stroke="#8aa5cf"/>
<path d="M480 309 479 317 472 317 473 308" fill="#89a4ce" stroke="#89a4ce"/>
<path d="M479 317 479 325 472 326 472 317" fill="#86a1cb" stroke="#86a1cb"/>
<path d="M473 308 472 317 465 317 466 308" fill="#8ba6d0" stroke="#8ba6d0"/>
<path d="M472 317 472 326 464 327 465 317" fill="#88a2cc" stroke="#88a2cc"/>
<path d="M479 325 479 333 471 335 472 326" fill="#839ec8" stroke="#839ec8"/>
<path d="M479 333 479 341 472 343 471 335" fill="#819bc4" stroke="#819bc4"/>
<path d="M472 326 471 335 464 336 464 327" fill="#849fc8" stroke="#849fc8"/>
<path d="M471 335 472 343 464 345 464 336" fill="#819bc4" stroke="#819bc4"/>
<path d="M479 341 479 349 472 351 472 343" fill="#7e98c1" stroke="#7e98c1"/>
<path d="M479 349 480 356 473 359 472 351" fill="#7b94bd" stroke="#7b94bd"/>
<path d="M472 343 472 351 465 354 464 345" fill="#7e98c1" stroke="#7e98c1"/>
<path d="M472 351 473 359 466 363 465 354" fill="#7b94bd" stroke="#7b94bd"/>
<path d="M480 356 481 363 474 367 473 359" fill="#7991b9" stroke="#7991b9"/>
<path d="M481 363 483 370 476 374 474 367" fill="#768eb6" stroke="#768eb6"/>
<path d="M473 359 474 367 467 371 466 363" fill="#7891b9" stroke="#7891b9"/>
<path d="M474 367 476 374 469 379 467 371" fill="#768eb5" stroke="#768eb5"/>
<path d="M483 370 484 376 478 381 476 374" fill="#748bb2" stroke="#748bb2"/>
<path d="M484 376 486 382 480 387 478 381" fill="#7188ae" stroke="#7188ae"/>
<path d="M476 374 478 381 471 386 469 379" fill="#738ab1" stroke="#738ab1"/>
<path d="M478 381 480 387 473 393 471 386" fill="#7087ad" stroke="#7087ad"/>
<path d="M486 382 488 387 482 393 480 387" fill="#6f85ab" stroke="#6f85ab"/>
<path d="M488 387 491 392 485 398 482 393" fill="#6c82a7" stroke="#6c82a7"/>
<path d="M480 387 482 393 476 399 473 393" fill="#6d84a9" stroke="#6d84a9"/>
<path d="M482 393 485 398 479 405 476 399" fill="#6b81a5" stroke="#6b81a5"/>
<path d="M491 392 493 396 488 403 485 398" fill="#6a7fa3" stroke="#6a7fa3"/>
<path d="M493 396 496 400 491 407 488 403" fill="#677c9f" stroke="#677c9f"/>
<path d="M485 398 488 403 482 410 479 405" fill="#687da1" stroke="#687da1"/>
<path d="M488 403 491 407 485 414 482 410" fill="#657a9d" stroke="#657a9d"/>
<path d="M496 400 499 403 494 410 491 407" fill="#65799c" stroke="#65799c"/>
<path d="M499 403 502 406 498 413 494 410" fill="#627798" stroke="#627798"/>
<path d="M491 407 494 410 489 418 485 414" fill="#637799" stroke="#637799"/>
<path d="M494 410 498 413 493 421 489 418" fill="#607495" stroke="#607495"/>
<path d="M502 406 506 408 501 415 498 413" fill="#607495" stroke="#607495"/>
<path d="M506 408 509 409 505 417 501 415" fill="#5e7191" stroke="#5e7191"/>
<path d="M498 413 501 415 496 423 493 421" fill="#5e7191" stroke="#5e7191"/>
<path d="M501 415 505 417 500 424 496 423" fill="#5b6e8d" stroke="#5b6e8d"/>
<path d="M509 409 513 410 509 418 505 417" fill="#5c6f8e" stroke="#5c6f8e"/>
<path d="M513 410 516 410 513 418 509 418" fill="#5a6c8b" stroke="#5a6c8b"/>
<path d="M505 417 509 418 505 425 500 424" fill="#596b8a" stroke="#596b8a"/>
<path d="M509 418 513 418 509 425 505 425" fill="#576987" stroke="#576987"/>
<path d="M516 410 520 410 516 417 513 418" fill="#586a88" stroke="#586a88"/>
<path d="M520 410 523 409 520 416 516 417" fill="#566886" stroke="#566886"/>
<path d="M513 418 516 417 513 425 509 425" fill="#556683" stroke="#556683"/>
<path d="M516 417 520 416 517 424 513 425" fill="#536481" stroke="#536481"/>
<path d="M523 409 527 407 524 415 520 416" fill="#546683" stroke="#546683"/>
<path d="M527 407 531 405 528 412 524 415" fill="#536481" stroke="#536481"/>
<path d="M520 416 524 415 521 422 517 424" fill="#51627e" stroke="#51627e"/>
<path d="M524 415 528 412 526 419 521 422" fill="#4f607b" stroke="#4f607b"/>
<path d="M531 405 534 403 532 409 528 412" fill="#52627f" stroke="#52627f"/>
<path d="M534 403 538 399 536 406 532 409" fill="#50617d" stroke="#50617d"/>
<path d="M528 412 532 409 530 416 526 419" fill="#4e5e79" stroke="#4e5e79"/>
<path d="M532 409 536 406 534 413 530 416" fill="#4c5c77" stroke="#4c5c77"/>
<path d="M538 399 541 396 539 402 536 406" fill="#4f5f7b" stroke="#4f5f7b"/>
<path d="M541 396 544 392 543 398 539 402" fill="#4e5e7a" stroke="#4e5e7a"/>
<path d="M536 406 539 402 538 408 534 413" fill="#4b5a75" stroke="#4b5a75"/>
<path d="M539 402 543 398 541 403 538 408" fill="#4a5973" stroke="#4a5973"/>
<path d="M544 392 547 387 546 393 543 398" fill="#4d5d78" stroke="#4d5d78"/>
<path d="M547 387 550 382 550 387 546 393" fill="#4c5c76" stroke="#4c5c76"/>
<path d="M543 398 546 393 545 398 541 403" fill="#485771" stroke="#485771"/>
<path d="M546 393 550 387 549 392 545 398" fill="#46546d" stroke="#46546d"/>
<path d="M550 382 553 377 553 382 550 387" fill="#4b5a74" stroke="#4b5a74"/>
<path d="M553 377 556 371 555 376 553 382" fill="#485770" stroke="#485770"/>
<path d="M550 387 553 382 552 386 549 392" fill="#44526b" stroke="#44526b"/>
<path d="M553 382 555 376 555 380 552 386" fill="#46546d" stroke="#46546d"/>
<path d="M556 371 558 365 558 369 555 376" fill="#495872" stroke="#495872"/>
<path d="M558 365 561 359 561 362 558 369" fill="#4b5a74" stroke="#4b5a74"/>
<path d="M555 376 558 369 558 373 555 380" fill="#47566f" stroke="#47566f"/>
<path d="M558 369 561 362 560 366 558 373" fill="#495871" stroke="#495871"/>
<path d="M561 359 563 353 563 355 561 362" fill="#4c5c77" stroke="#4c5c77"/>
<path d="M563 353 565 346 565 348 563 355" fill="#4e5e79" stroke="#4e5e79"/>
<path d="M561 362 563 355 563 358 560 366" fill="#4a5a74" stroke="#4a5a74"/>
<path d="M563 355 565 348 565 350 563 358" fill="#4c5c76" stroke="#4c5c76"/>
<path d="M565 346 566 339 567 341 565 348" fill="#50607c" stroke="#50607c"/>
<path d="M566 339 568 332 568 333 567 341" fill="#51627e" stroke="#51627e"/>
<path d="M565 348 567 341 567 342 565 350" fill="#4e5e79" stroke="#4e5e79"/>
<path d="M567 341 568 333 569 334 567 342" fill="#50607c" stroke="#50607c"/>
<path d="M568 332 569 325 570 326 568 333" fill="#536481" stroke="#536481"/>
<path d="M569 325 570 318 571 318 570 326" fill="#556684" stroke="#556684"/>
<path d="M568 333 570 326 570 326 569 334" fill="#52627f" stroke="#52627f"/>
<path d="M570 326 571 318 571 318 570 326" fill="#546582" stroke="#546582"/>
<path d="M570 318 571 311 572 310 571 318" fill="#576886" stroke="#576886"/>
<path d="M571 311 571 304 572 302 572 310" fill="#586a89" stroke="#586a89"/>
<path d="M571 318 572 310 572 310 571 318" fill="#556785" stroke="#556785"/>
<path d="M572 310 572 302 573 301 572 310" fill="#576988" stroke="#576988"/>
<path d="M571 304 571 296 572 295 572 302" fill="#5a6d8c" stroke="#5a6d8c"/>
<path d="M571 296 571 289 572 287 572 295" fill="#5c6f8f" stroke="#5c6f8f"/>
<path d="M572 302 572 295 573 293 573 301" fill="#596c8b" stroke="#596c8b"/>
<path d="M572 295 572 287 573 285 573 293" fill="#5b6e8d" stroke="#5b6e8d"/>
<path d="M571 289 571 282 572 280 572 287" fill="#5e7191" stroke="#5e7191"/>
<path d="M571 282 570 276 571 272 572 280" fill="#607394" stroke="#607394"/>
<path d="M572 287 572 280 572 277 573 285" fill="#5d7090" stroke="#5d7090"/>
<path d="M572 280 571 272 572 269 572 277" fill="#5f7393" stroke="#5f7393"/>
<path d="M570 276 570 269 570 265 571 272" fill="#617597" stroke="#617597"/>
<path d="M570 269 569 263 569 258 570 265" fill="#637799" stroke="#637799"/>
<path d="M571 272 570 265 571 262 572 269" fill="#617596" stroke="#617596"/>
<path d="M570 265 569 258 570 254 571 262" fill="#637799" stroke="#637799"/>
<path d="M569 263 567 257 568 252 569 258" fill="#65799c" stroke="#65799c"/>
<path d="M567 257 566 251 566 246 568 252" fill="#6a7fa3" stroke="#6a7fa3"/>
<path d="M569 258 568 252 568 247 570 254" fill="#65799c" stroke="#65799c"/>
<path d="M568 252 566 246 566 240 568 247" fill="#667c9e" stroke="#667c9e"/>
<path d="M566 251 564 246 564 240 566 246" fill="#6d84a9" stroke="#6d84a9"/>
<path d="M564 246 562 241 562 234 564 240" fill="#7088ad" stroke="#7088ad"/>
<path d="M566 246 564 240 564 234 566 240" fill="#6a80a4" stroke="#6a80a4"/>
<path d="M564 240 562 234 562 228 564 234" fill="#6f86ab" stroke="#6f86ab"/>
<path d="M562 241 560 236 560 229 562 234" fill="#738bb2" stroke="#738bb2"/>
<path d="M560 236 557 232 557 225 560 229" fill="#768eb6" stroke="#768eb6"/>
<path d="M562 234 560 229 559 223 562 228" fill="#728ab0" stroke="#728ab0"/>
<path d="M560 229 557 225 557 218 559 223" fill="#758db5" stroke="#758db5"/>
<path d="M557 232 555 228 554 221 557 225" fill="#7991ba" stroke="#7991ba"/>
<path d="M555 228 552 225 551 217 554 221" fill="#7b94bd" stroke="#7b94bd"/>
<path d="M557 225 554 221 553 214 557 218" fill="#7891b9" stroke="#7891b9"/>
<path d="M554 221 551 217 550 210 553 214" fill="#7b94bd" stroke="#7b94bd"/>
<path d="M552 225 549 222 548 214 551 217" fill="#7d97c1" stroke="#7d97c1"/>
<path d="M549 222 546 220 544 212 548 214" fill="#809ac4" stroke="#809ac4"/>
<path d="M551 217 548 214 547 206 550 210" fill="#7d97c1" stroke="#7d97c1"/>
<path d="M548 214 544 212 543 204 547 206" fill="#809ac5" stroke="#809ac5"/>
<path d="M546 220 542 218 541 210 544 212" fill="#829cc7" stroke="#829cc7"/>
<path d="M542 218 539 217 537 209 541 210" fill="#849fca" stroke="#849fca"/>
<path d="M544 212 541 210 539 202 543 204" fill="#829dc8" stroke="#829dc8"/>
<path d="M541 210 537 209 535 200 539 202" fill="#849fcb" stroke="#849fcb"/>
<path d="M539 217 535 217 533 208 537 209" fill="#85a1cd" stroke="#85a1cd"/>
<path d="M535 217 532 217 529 208 533 208" fill="#87a3cf" stroke="#87a3cf"/>
<path d="M537 209 533 208 531 200 535 200" fill="#86a2ce" stroke="#86a2ce"/>
<path d="M533 208 529 208 527 200 531 200" fill="#88a4d1" stroke="#88a4d1"/>
<path d="M532 217 528 217 525 209 529 208" fill="#89a5d2" stroke="#89a5d2"/>
<path d="M528 217 524 219 521 210 525 209" fill="#8aa7d4" stroke="#8aa7d4"/>
<path d="M529 208 525 209 522 201 527 200" fill="#8aa6d3" stroke="#8aa6d3"/>
<path d="M525 209 521 210 518 202 522 201" fill="#8ca8d5" stroke="#8ca8d5"/>
<path d="M524 219 521 221 517 213 521 210" fill="#8ca8d6" stroke="#8ca8d6"/>
<path d="M521 221 517 223 513 215 517 213" fill="#8daad7" stroke="#8daad7"/>
<path d="M521 210 517 213 514 204 518 202" fill="#8daad7" stroke="#8daad7"/>
<path d="M517 213 513 215 509 207 514 204" fill="#8facd9" stroke="#8facd9"/>
<path d="M517 223 513 227 509 219 513 215" fill="#8facd9" stroke="#8facd9"/>
<path d="M513 227 510 230 505 223 509 219" fill="#91adda" stroke="#91adda"/>
<path d="M513 215 509 219 505 211 509 207" fill="#91aedb" stroke="#91aedb"/>
<path d="M509 219 505 223 501 215 505 211" fill="#93b0dd" stroke="#93b0dd"/>
<path d="M510 230 506 235 502 227 505 223" fill="#92afdb" stroke="#92afdb"/>
<path d="M506 235 503 239 498 233 502 227" fill="#94b0dc" stroke="#94b0dc"/>
<path d="M505 223 502 227 497 220 501 215" fill="#95b2de" stroke="#95b2de"/>
<path d="M502 227 498 233 493 226 497 220" fill="#97b4df" stroke="#97b4df"/>
<path d="M503 239 500 245 494 238 498 233" fill="#95b1dd" stroke="#95b1dd"/>
<path d="M500 245 496 251 491 245 494 238" fill="#96b2dd" stroke="#96b2dd"/>
<path d="M498 233 494 238 489 232 493 226" fill="#99b5e0" stroke="#99b5e0"/>
<path d="M494 238 491 245 485 239 489 232" fill="#9ab6e1" stroke="#9ab6e1"/>
<path d="M496 251 494 257 488 251 491 245" fill="#96b3dd" stroke="#96b3dd"/>
<path d="M494 257 491 263 485 259 488 251" fill="#96b3dd" stroke="#96b3dd"/>
<path d="M491 245 488 251 482 246 485 239" fill="#9bb7e1" stroke="#9bb7e1"/>
<path d="M488 251 485 259 478 254 482 246" fill="#9bb7e0" stroke="#9bb7e0"/>
<path d="M491 263 488 271 482 266 485 259" fill="#96b2dc" stroke="#96b2dc"/>
<path d="M488 271 486 278 480 274 482 266" fill="#95b1da" stroke="#95b1da"/>
<path d="M485 259 482 266 475 262 478 254" fill="#9bb7df" stroke="#9bb7df"/>
<path d="M482 266 480 274 473 271 475 262" fill="#9ab5de" stroke="#9ab5de"/>
<path d="M486 278 484 285 477 283 480 274" fill="#93afd9" stroke="#93afd9"/>
<path d="M484 285 482 293 476 291 477 283" fill="#91add6" stroke="#91add6"/>
<path d="M480 274 477 283 470 280 473 271" fill="#98b3dc" stroke="#98b3dc"/>
<path d="M477 283 476 291 468 289 470 280" fill="#95b1d9" stroke="#95b1d9"/>
<path d="M482 293 481 301 474 300 476 291" fill="#8faad4" stroke="#8faad4"/>
<path d="M481 301 480 309 473 308 474 300" fill="#8ca7d1" stroke="#8ca7d1"/>
<path d="M476 291 474 300 467 298 468 289" fill="#92add6" stroke="#92add6"/>
<path d="M474 300 473 308 466 308 467 298" fill="#8faad3" stroke="#8faad3"/>
<path d="M466 308 465 317 456 317 457 307" fill="#8da8d1" stroke="#8da8d1"/>
<path d="M465 317 464 327 456 327 456 317" fill="#89a4cd" stroke="#89a4cd"/>
<path d="M457 307 456 317 448 317 449 306" fill="#90abd3" stroke="#90abd3"/>
<path d="M456 317 456 327 447 328 448 317" fill="#8ba5ce" stroke="#8ba5ce"/>
<path d="M464 327 464 336 455 337 456 327" fill="#85a0c9" stroke="#85a0c9"/>
<path d="M464 336 464 345 456 347 455 337" fill="#829cc5" stroke="#829cc5"/>
<path d="M456 327 455 337 447 339 447 328" fill="#86a1c9" stroke="#86a1c9"/>
<path d="M455 337 456 347 447 349 447 339" fill="#829cc5" stroke="#829cc5"/>
<path d="M464 345 465 354 456 357 456 347" fill="#7e98c1" stroke="#7e98c1"/>
<path d="M465 354 466 363 457 366 456 357" fill="#7b94bc" stroke="#7b94bc"/>
<path d="M456 347 456 357 448 360 447 349" fill="#7e98c0" stroke="#7e98c0"/>
<path d="M456 357 457 366 449 370 448 360" fill="#7b94bc" stroke="#7b94bc"/>
<path d="M466 363 467 371 459 375 457 366" fill="#7890b8" stroke="#7890b8"/>
<path d="M467 371 469 379 461 383 459 375" fill="#758db4" stroke="#758db4"/>
<path d="M457 366 459 375 451 379 449 370" fill="#7790b7" stroke="#7790b7"/>
<path d="M459 375 461 383 453 388 451 379" fill="#748cb2" stroke="#748cb2"/>
<path d="M469 379 471 386 463 391 461 383" fill="#7289af" stroke="#7289af"/>
<path d="M471 386 473 393 466 399 463 391" fill="#6f86ab" stroke="#6f86ab"/>
<path d="M461 383 463 391 455 397 453 388" fill="#7188ae" stroke="#7188ae"/>
<path d="M463 391 466 399 458 404 455 397" fill="#6e84a9" stroke="#6e84a9"/>
<path d="M473 393 476 399 468 405 466 399" fill="#6c82a7" stroke="#6c82a7"/>
<path d="M476 399 479 405 472 411 468 405" fill="#697fa2" stroke="#697fa2"/>
<path d="M466 399 468 405 461 412 458 404" fill="#6a80a4" stroke="#6a80a4"/>
<path d="M468 405 472 411 464 418 461 412" fill="#677c9f" stroke="#677c9f"/>
<path d="M479 405 482 410 475 417 472 411" fill="#667b9e" stroke="#667b9e"/>
<path d="M482 410 485 414 479 421 475 417" fill="#637899" stroke="#637899"/>
<path d="M472 411 475 417 468 424 464 418" fill="#64799b" stroke="#64799b"/>
<path d="M475 417 479 421 472 429 468 424" fill="#617596" stroke="#617596"/>
<path d="M485 414 489 418 483 425 479 421" fill="#607495" stroke="#607495"/>
<path d="M489 418 493 421 487 429 483 425" fill="#5e7191" stroke="#5e7191"/>
<path d="M479 421 483 425 476 433 472 429" fill="#5e7191" stroke="#5e7191"/>
<path d="M483 425 487 429 481 436 476 433" fill="#5b6e8d" stroke="#5b6e8d"/>
<path d="M493 421 496 423 491 431 487 429" fill="#5b6e8d" stroke="#5b6e8d"/>
<path d="M496 423 500 424 495 433 491 431" fill="#586a89" stroke="#586a89"/>
<path d="M487 429 491 431 485 439 481 436" fill="#586a88" stroke="#586a88"/>
<path d="M491 431 495 433 490 441 485 439" fill="#556784" stroke="#556784"/>
<path d="M500 424 505 425 500 433 495 433" fill="#566785" stroke="#566785"/>
<path d="M505 425 509 425 504 434 500 433" fill="#536582" stroke="#536582"/>
<path d="M495 433 500 433 495 441 490 441" fill="#536380" stroke="#536380"/>
<path d="M500 433 504 434 500 441 495 441" fill="#50607c" stroke="#50607c"/>
<path d="M509 425 513 425 509 433 504 434" fill="#51627e" stroke="#51627e"/>
<path d="M513 425 517 424 513 432 509 433" fill="#4f5f7b" stroke="#4f5f7b"/>
<path d="M504 434 509 433 505 441 500 441" fill="#4e5d79" stroke="#4e5d79"/>
<path d="M509 433 513 432 509 439 505 441" fill="#4b5b75" stroke="#4b5b75"/>
<path d="M517 424 521 422 518 430 513 432" fill="#4d5d78" stroke="#4d5d78"/>
<path d="M521 422 526 419 522 427 518 430" fill="#4b5b75" stroke="#4b5b75"/>
<path d="M513 432 518 430 514 437 509 439" fill="#495872" stroke="#495872"/>
<path d="M518 430 522 427 519 434 514 437" fill="#47566f" stroke="#47566f"/>
<path d="M526 419 530 416 527 423 522 427" fill="#4a5973" stroke="#4a5973"/>
<path d="M530 416 534 413 531 419 527 423" fill="#485770" stroke="#485770"/>
<path d="M522 427 527 423 524 430 519 434" fill="#45536c" stroke="#45536c"/>
<path d="M527 423 531 419 528 426 524 430" fill="#435169" stroke="#435169"/>
<path d="M534 413 538 408 535 415 531 419" fill="#46556e" stroke="#46556e"/>
<path d="M538 408 541 403 539 410 535 415" fill="#45536b" stroke="#45536b"/>
<path d="M531 419 535 415 533 421 528 426" fill="#414e66" stroke="#414e66"/>
<path d="M535 415 539 410 537 416 533 421" fill="#3e4b61" stroke="#3e4b61"/>
<path d="M541 403 545 398 543 404 539 410" fill="#424f67" stroke="#424f67"/>
<path d="M545 398 549 392 547 398 543 404" fill="#404d64" stroke="#404d64"/>
<path d="M539 410 543 404 542 410 537 416" fill="#3c485e" stroke="#3c485e"/>
<path d="M543 404 547 398 546 403 542 410" fill="#3d4a60" stroke="#3d4a60"/>
<path d="M549 392 552 386 551 391 547 398" fill="#424f67" stroke="#424f67"/>
<path d="M552 386 555 380 554 384 551 391" fill="#435169" stroke="#435169"/>
<path d="M547 398 551 391 549 396 546 403" fill="#3f4c62" stroke="#3f4c62"/>
<path d="M551 391 554 384 553 388 549 396" fill="#404e65" stroke="#404e65"/>
<path d="M555 380 558 373 557 377 554 384" fill="#45536b" stroke="#45536b"/>
<path d="M558 373 560 366 560 369 557 377" fill="#46556e" stroke="#46556e"/>
<path d="M554 384 557 377 556 380 553 388" fill="#425068" stroke="#425068"/>
<path d="M557 377 560 369 559 372 556 380" fill="#44526a" stroke="#44526a"/>
<path d="M560 366 563 358 563 361 560 369" fill="#485771" stroke="#485771"/>
<path d="M563 358 565 350 565 353 563 361" fill="#4a5974" stroke="#4a5974"/>
<path d="M560 369 563 361 562 364 559 372" fill="#46546d" stroke="#46546d"/>
<path d="M563 361 565 353 565 355 562 364" fill="#485771" stroke="#485771"/>
<path d="M565 350 567 342 567 344 565 353" fill="#4c5c77" stroke="#4c5c77"/>
<path d="M567 342 569 334 569 335 567 344" fill="#4e5e7a" stroke="#4e5e7a"/>
<path d="M565 353 567 344 567 346 565 355" fill="#4a5a74" stroke="#4a5a74"/>
<path d="M567 344 569 335 569 337 567 346" fill="#4c5c77" stroke="#4c5c77"/>
<path d="M569 334 570 326 570 327 569 335" fill="#50617d" stroke="#50617d"/>
<path d="M570 326 571 318 572 318 570 327" fill="#526380" stroke="#526380"/>
<path d="M569 335 570 327 570 327 569 337" fill="#4f5f7a" stroke="#4f5f7a"/>
<path d="M570 327 572 318 572 318 570 327" fill="#51617e" stroke="#51617e"/>
<path d="M571 318 572 310 572 309 572 318" fill="#546683" stroke="#546683"/>
<path d="M572 310 573 301 573 300 572 309" fill="#566886" stroke="#566886"/>
<path d="M572 318 572 309 572 308 572 318" fill="#536481" stroke="#536481"/>
<path d="M572 309 573 300 573 299 572 308" fill="#556785" stroke="#556785"/>
<path d="M573 301 573 293 573 291 573 300" fill="#596b89" stroke="#596b89"/>
<path d="M573 293 573 285 573 283 573 291" fill="#5b6d8c" stroke="#5b6d8c"/>
<path d="M573 300 573 291 573 289 573 299" fill="#586a88" stroke="#586a88"/>
<path d="M573 291 573 283 573 280 573 289" fill="#5a6c8b" stroke="#5a6c8b"/>
<path d="M573 285 572 277 573 274 573 283" fill="#5d7090" stroke="#5d7090"/>
<path d="M572 277 572 269 572 266 573 274" fill="#5f7293" stroke="#5f7293"/>
<path d="M573 283 573 274 573 271 573 280" fill="#5c6f8f" stroke="#5c6f8f"/>
<path d="M573 274 572 266 572 262 573 271" fill="#5e7292" stroke="#5e7292"/>
<path d="M572 269 571 262 571 257 572 266" fill="#617596" stroke="#617596"/>
<path d="M571 262 570 254 570 250 571 257" fill="#637799" stroke="#637799"/>
<path d="M572 266 571 257 571 253 572 262" fill="#607495" stroke="#607495"/>
<path d="M571 257 570 250 570 245 571 253" fill="#627798" stroke="#627798"/>
<path d="M570 254 568 247 568 242 570 250" fill="#65799b" stroke="#65799b"/>
<path d="M568 247 566 240 566 235 568 242" fill="#667b9e" stroke="#667b9e"/>
<path d="M570 250 568 242 568 237 570 245" fill="#64799b" stroke="#64799b"/>
<path d="M568 242 566 235 566 229 568 237" fill="#667b9e" stroke="#667b9e"/>
<path d="M566 240 564 234 564 228 566 235" fill="#687ea1" stroke="#687ea1"/>
<path d="M564 234 562 228 562 222 564 228" fill="#6c82a6" stroke="#6c82a6"/>
<path d="M566 235 564 228 564 222 566 229" fill="#687ea1" stroke="#687ea1"/>
<path d="M564 228 562 222 561 215 564 222" fill="#6a80a4" stroke="#6a80a4"/>
<path d="M562 228 559 223 559 216 562 222" fill="#7188ae" stroke="#7188ae"/>
<path d="M559 223 557 218 556 211 559 216" fill="#748cb3" stroke="#748cb3"/>
<path d="M562 222 559 216 558 209 561 215" fill="#6e85aa" stroke="#6e85aa"/>
<path d="M559 216 556 211 555 203 558 209" fill="#738bb2" stroke="#738bb2"/>
<path d="M557 218 553 214 552 206 556 211" fill="#7890b8" stroke="#7890b8"/>
<path d="M553 214 550 210 549 202 552 206" fill="#7b94bd" stroke="#7b94bd"/>
<path d="M556 211 552 206 551 198 555 203" fill="#778fb7" stroke="#778fb7"/>
<path d="M552 206 549 202 547 194 551 198" fill="#7a93bc" stroke="#7a93bc"/>
<path d="M550 210 547 206 545 198 549 202" fill="#7d97c1" stroke="#7d97c1"/>
<path d="M547 206 543 204 541 195 545 198" fill="#809ac5" stroke="#809ac5"/>
<path d="M549 202 545 198 543 190 547 194" fill="#7d97c1" stroke="#7d97c1"/>
<path d="M545 198 541 195 539 187 543 190" fill="#809ac5" stroke="#809ac5"/>
<path d="M543 204 539 202 537 193 541 195" fill="#829dc8" stroke="#829dc8"/>
<path d="M539 202 535 200 533 191 537 193" fill="#85a0cc" stroke="#85a0cc"/>
<path d="M541 195 537 193 535 184 539 187" fill="#839dc9" stroke="#839dc9"/>
<path d="M537 193 533 191 530 183 535 184" fill="#85a0cc" stroke="#85a0cc"/>
<path d="M535 200 531 200 528 191 533 191" fill="#87a2cf" stroke="#87a2cf"/>
<path d="M531 200 527 200 524 191 528 191" fill="#89a5d2" stroke="#89a5d2"/>
<path d="M533 191 528 191 525 182 530 183" fill="#87a3d0" stroke="#87a3d0"/>
<path d="M528 191 524 191 520 182 525 182" fill="#89a6d3" stroke="#89a6d3"/>
<path d="M527 200 522 201 519 192 524 191" fill="#8ba7d4" stroke="#8ba7d4"/>
<path d="M522 201 518 202 514 193 519 192" fill="#8da9d7" stroke="#8da9d7"/>
<path d="M524 191 519 192 515 182 520 182" fill="#8ca8d6" stroke="#8ca8d6"/>
<path d="M519 192 514 193 510 184 515 182" fill="#8eaad8" stroke="#8eaad8"/>
<path d="M518 202 514 204 510 195 514 193" fill="#8fabd9" stroke="#8fabd9"/>
<path d="M514 204 509 207 505 198 510 195" fill="#91aedb" stroke="#91aedb"/>
<path d="M514 193 510 195 505 187 510 184" fill="#90addb" stroke="#90addb"/>
<path d="M510 195 505 198 500 190 505 187" fill="#92afdd" stroke="#92afdd"/>
<path d="M509 207 505 211 500 202 505 198" fill="#93b0dd" stroke="#93b0dd"/>
<path d="M505 211 501 215 496 207 500 202" fill="#95b2df" stroke="#95b2df"/>
<path d="M505 198 500 202 495 194 500 190" fill="#95b2df" stroke="#95b2df"/>
<path d="M500 202 496 207 490 199 495 194" fill="#98b5e2" stroke="#98b5e2"/>
<path d="M501 215 497 220 491 212 496 207" fill="#98b5e1" stroke="#98b5e1"/>
<path d="M497 220 493 226 487 218 491 212" fill="#9ab7e2" stroke="#9ab7e2"/>
<path d="M496 207 491 212 485 205 490 199" fill="#9bb8e4" stroke="#9bb8e4"/>
<path d="M491 212 487 218 480 211 485 205" fill="#9fbbe6" stroke="#9fbbe6"/>
<path d="M493 226 489 232 482 225 487 218" fill="#9dbae4" stroke="#9dbae4"/>
<path d="M489 232 485 239 478 232 482 225" fill="#9fbbe4" stroke="#9fbbe4"/>
<path d="M487 218 482 225 476 218 480 211" fill="#a2bfe7" stroke="#a2bfe7"/>
<path d="M482 225 478 232 472 226 476 218" fill="#a5c1e8" stroke="#a5c1e8"/>
<path d="M485 239 482 246 475 240 478 232" fill="#a1bde5" stroke="#a1bde5"/>
<path d="M482 246 478 254 471 249 475 240" fill="#a1bde4" stroke="#a1bde4"/>
<path d="M478 232 475 240 467 234 472 226" fill="#a7c3e9" stroke="#a7c3e9"/>
<path d="M475 240 471 249 464 243 467 234" fill="#a9c4e9" stroke="#a9c4e9"/>
<path d="M478 254 475 262 468 258 471 249" fill="#a1bde3" stroke="#a1bde3"/>
<path d="M475 262 473 271 465 267 468 258" fill="#a0bbe2" stroke="#a0bbe2"/>
<path d="M471 249 468 258 460 253 464 243" fill="#a8c4e8" stroke="#a8c4e8"/>
<path d="M468 258 465 267 457 263 460 253" fill="#a7c2e6" stroke="#a7c2e6"/>
<path d="M473 271 470 280 463 277 465 267" fill="#9db8df" stroke="#9db8df"/>
<path d="M470 280 468 289 460 286 463 277" fill="#9ab5dc" stroke="#9ab5dc"/>
<path d="M465 267 463 277 454 273 457 263" fill="#a4bfe3" stroke="#a4bfe3"/>
<path d="M463 277 460 286 452 284 454 273" fill="#9fbae0" stroke="#9fbae0"/>
<path d="M468 289 467 298 459 297 460 286" fill="#96b1d9" stroke="#96b1d9"/>
<path d="M467 298 466 308 457 307 459 297" fill="#92add5" stroke="#92add5"/>
<path d="M460 286 459 297 450 295 452 284" fill="#9ab5dc" stroke="#9ab5dc"/>
<path d="M459 297 457 307 449 306 450 295" fill="#95b0d7" stroke="#95b0d7"/>
<path d="M449 306 448 317 438 317 439 305" fill="#93add4" stroke="#93add4"/>
<path d="M448 317 447 328 437 328 438 317" fill="#8da7cf" stroke="#8da7cf"/>
<path d="M439 305 438 317 428 316 429 304" fill="#95b0d6" stroke="#95b0d6"/>
<path d="M438 317 437 328 428 329 428 316" fill="#8ea8d0" stroke="#8ea8d0"/>
<path d="M447 328 447 339 437 340 437 328" fill="#87a1ca" stroke="#87a1ca"/>
<path d="M447 339 447 349 438 352 437 340" fill="#829cc5" stroke="#829cc5"/>
<path d="M437 328 437 340 427 341 428 329" fill="#88a2ca" stroke="#88a2ca"/>
<path d="M437 340 438 352 428 354 427 341" fill="#829cc4" stroke="#829cc4"/>
<path d="M447 349 448 360 438 363 438 352" fill="#7e97c0" stroke="#7e97c0"/>
<path d="M448 360 449 370 440 373 438 363" fill="#7a93bb" stroke="#7a93bb"/>
<path d="M438 352 438 363 429 365 428 354" fill="#7e97bf" stroke="#7e97bf"/>
<path d="M438 363 440 373 430 377 429 365" fill="#7992ba" stroke="#7992ba"/>
<path d="M449 370 451 379 441 383 440 373" fill="#768fb6" stroke="#768fb6"/>
<path d="M451 379 453 388 444 393 441 383" fill="#738ab1" stroke="#738ab1"/>
<path d="M440 373 441 383 432 388 430 377" fill="#758db4" stroke="#758db4"/>
<path d="M441 383 444 393 434 398 432 388" fill="#7289af" stroke="#7289af"/>
<path d="M453 388 455 397 446 402 444 393" fill="#6f86ac" stroke="#6f86ac"/>
<path d="M455 397 458 404 449 411 446 402" fill="#6c82a7" stroke="#6c82a7"/>
<path d="M444 393 446 402 437 408 434 398" fill="#6e85aa" stroke="#6e85aa"/>
<path d="M446 402 449 411 440 417 437 408" fill="#6a80a4" stroke="#6a80a4"/>
<path d="M458 404 461 412 453 418 449 411" fill="#697ea2" stroke="#697ea2"/>
<path d="M461 412 464 418 456 425 453 418" fill="#657a9c" stroke="#657a9c"/>
<path d="M449 411 453 418 444 425 440 417" fill="#677c9f" stroke="#677c9f"/>
<path d="M453 418 456 425 448 432 444 425" fill="#637799" stroke="#637799"/>
<path d="M464 418 468 424 460 431 456 425" fill="#627697" stroke="#627697"/>
<path d="M468 424 472 429 465 436 460 431" fill="#5f7292" stroke="#5f7292"/>
<path d="M456 425 460 431 452 438 448 432" fill="#5f7394" stroke="#5f7394"/>
<path d="M460 431 465 436 457 444 452 438" fill="#5c6f8e" stroke="#5c6f8e"/>
<path d="M472 429 476 433 469 441 465 436" fill="#5b6e8d" stroke="#5b6e8d"/>
<path d="M476 433 481 436 474 444 469 441" fill="#586a88" stroke="#586a88"/>
<path d="M465 436 469 441 462 449 457 444" fill="#586a89" stroke="#586a89"/>
<path d="M469 441 474 444 467 452 462 449" fill="#556684" stroke="#556684"/>
<path d="M481 436 485 439 479 447 474 444" fill="#556684" stroke="#556684"/>
<path d="M485 439 490 441 484 449 479 447" fill="#52637f" stroke="#52637f"/>
<path d="M474 444 479 447 472 455 467 452" fill="#51627f" stroke="#51627f"/>
<path d="M479 447 484 449 478 457 472 455" fill="#4e5e7a" stroke="#4e5e7a"/>
<path d="M490 441 495 441 489 450 484 449" fill="#4f5f7b" stroke="#4f5f7b"/>
<path d="M495 441 500 441 494 450 489 450" fill="#4c5c77" stroke="#4c5c77"/>
<path d="M484 449 489 450 483 458 478 457" fill="#4b5a75" stroke="#4b5a75"/>
<path d="M489 450 494 450 489 458 483 458" fill="#485770" stroke="#485770"/>
<path d="M500 441 505 441 500 449 494 450" fill="#495973" stroke="#495973"/>
<path d="M505 441 509 439 505 447 500 449" fill="#47566f" stroke="#47566f"/>
<path d="M494 450 500 449 495 457 489 458" fill="#45536c" stroke="#45536c"/>
<path d="M500 449 505 447 500 455 495 457" fill="#425068" stroke="#425068"/>
<path d="M509 439 514 437 510 445 505 447" fill="#45536b" stroke="#45536b"/>
<path d="M514 437 519 434 515 442 510 445" fill="#425068" stroke="#425068"/>
<path d="M505 447 510 445 506 452 500 455" fill="#404d64" stroke="#404d64"/>
<path d="M510 445 515 442 511 449 506 452" fill="#3d4a60" stroke="#3d4a60"/>
<path d="M519 434 524 430 520 438 515 442" fill="#404d64" stroke="#404d64"/>
<path d="M524 430 528 426 525 433 520 438" fill="#3e4b61" stroke="#3e4b61"/>
<path d="M515 442 520 438 517 445 511 449" fill="#3b475c" stroke="#3b475c"/>
<path d="M520 438 525 433 522 440 517 445" fill="#384358" stroke="#384358"/>
<path d="M528 426 533 421 530 428 525 433" fill="#3b475c" stroke="#3b475c"/>
<path d="M533 421 537 416 535 422 530 428" fill="#374257" stroke="#374257"/>
<path d="M525 433 530 428 527 434 522 440" fill="#323d4f" stroke="#323d4f"/>
<path d="M530 428 535 422 532 428 527 434" fill="#343e51" stroke="#343e51"/>
<path d="M537 416 542 410 539 415 535 422" fill="#394459" stroke="#394459"/>
<path d="M542 410 546 403 544 408 539 415" fill="#3a465b" stroke="#3a465b"/>
<path d="M535 422 539 415 537 421 532 428" fill="#354054" stroke="#354054"/>
<path d="M539 415 544 408 541 413 537 421" fill="#374256" stroke="#374256"/>
<path d="M546 403 549 396 548 401 544 408" fill="#3c485e" stroke="#3c485e"/>
<path d="M549 396 553 388 551 393 548 401" fill="#3e4a61" stroke="#3e4a61"/>
<path d="M544 408 548 401 546 405 541 413" fill="#394459" stroke="#394459"/>
<path d="M548 401 551 393 550 397 546 405" fill="#3b475c" stroke="#3b475c"/>
<path d="M553 388 556 380 555 384 551 393" fill="#404d64" stroke="#404d64"/>
<path d="M556 380 559 372 558 375 555 384" fill="#424f67" stroke="#424f67"/>
<path d="M551 393 555 384 553 388 550 397" fill="#3d495f" stroke="#3d495f"/>
<path d="M555 384 558 375 557 379 553 388" fill="#3f4c63" stroke="#3f4c63"/>
<path d="M572 262 571 253 571 249 572 259" fill="#607494" stroke="#607494"/>
<path d="M571 253 570 245 569 240 571 249" fill="#627698" stroke="#627698"/>
<path d="M572 259 571 249 570 245 571 255" fill="#5f7394" stroke="#5f7394"/>
<path d="M571 249 569 240 569 236 570 245" fill="#627697" stroke="#627697"/>
<path d="M570 245 568 237 567 232 569 240" fill="#64799b" stroke="#64799b"/>
<path d="M568 237 566 229 565 224 567 232" fill="#667b9e" stroke="#667b9e"/>
<path d="M569 240 567 232 567 227 569 236" fill="#64789a" stroke="#64789a"/>
<path d="M567 232 565 224 564 218 567 227" fill="#667b9e" stroke="#667b9e"/>
<path d="M566 229 564 222 563 216 565 224" fill="#687ea1" stroke="#687ea1"/>
<path d="M564 222 561 215 560 209 563 216" fill="#6a80a4" stroke="#6a80a4"/>
<path d="M565 224 563 216 562 210 564 218" fill="#687ea1" stroke="#687ea1"/>
<path d="M563 216 560 209 559 202 562 210" fill="#6a80a4" stroke="#6a80a4"/>
<path d="M561 215 558 209 557 202 560 209" fill="#6c82a7" stroke="#6c82a7"/>
<path d="M558 209 555 203 553 196 557 202" fill="#7188af" stroke="#7188af"/>
<path d="M560 209 557 202 555 195 559 202" fill="#6c82a7" stroke="#6c82a7"/>
<path d="M557 202 553 196 551 188 555 195" fill="#6e85aa" stroke="#6e85aa"/>
<path d="M555 203 551 198 549 190 553 196" fill="#768eb6" stroke="#768eb6"/>
<path d="M551 198 547 194 545 185 549 190" fill="#7a92bb" stroke="#7a92bb"/>
<path d="M553 196 549 190 547 182 551 188" fill="#748cb3" stroke="#748cb3"/>
<path d="M549 190 545 185 543 177 547 182" fill="#7991ba" stroke="#7991ba"/>
<path d="M547 194 543 190 541 181 545 185" fill="#7d96c0" stroke="#7d96c0"/>
<path d="M543 190 539 187 537 178 541 181" fill="#809ac5" stroke="#809ac5"/>
<path d="M545 185 541 181 539 173 543 177" fill="#7c96bf" stroke="#7c96bf"/>
<path d="M541 181 537 178 534 169 539 173" fill="#809ac4" stroke="#809ac4"/>
<path d="M539 187 535 184 532 175 537 178" fill="#839dc9" stroke="#839dc9"/>
<path d="M535 184 530 183 527 173 532 175" fill="#85a1cd" stroke="#85a1cd"/>
<path d="M537 178 532 175 529 166 534 169" fill="#839dc9" stroke="#839dc9"/>
<path d="M532 175 527 173 523 164 529 166" fill="#85a1cd" stroke="#85a1cd"/>
<path d="M530 183 525 182 522 172 527 173" fill="#88a3d0" stroke="#88a3d0"/>
<path d="M525 182 520 182 516 172 522 172" fill="#8aa6d4" stroke="#8aa6d4"/>
<path d="M527 173 522 172 518 163 523 164" fill="#88a4d1" stroke="#88a4d1"/>
<path d="M522 172 516 172 512 163 518 163" fill="#8aa7d4" stroke="#8aa7d4"/>
<path d="M520 182 515 182 511 173 516 172" fill="#8ca9d7" stroke="#8ca9d7"/>
<path d="M515 182 510 184 506 175 511 173" fill="#8eabd9" stroke="#8eabd9"/>
<path d="M516 172 511 173 506 164 512 163" fill="#8da9d7" stroke="#8da9d7"/>
<path d="M511 173 506 175 501 165 506 164" fill="#8facda" stroke="#8facda"/>
<path d="M510 184 505 187 500 177 506 175" fill="#91aedc" stroke="#91aedc"/>
<path d="M505 187 500 190 495 181 500 177" fill="#94b1df" stroke="#94b1df"/>
<path d="M506 175 500 177 495 168 501 165" fill="#92afdd" stroke="#92afdd"/>
<path d="M500 177 495 181 489 172 495 168" fill="#95b2e0" stroke="#95b2e0"/>
<path d="M500 190 495 194 489 185 495 181" fill="#97b4e1" stroke="#97b4e1"/>
<path d="M495 194 490 199 484 190 489 185" fill="#9bb8e4" stroke="#9bb8e4"/>
<path d="M495 181 489 185 483 176 489 172" fill="#99b6e3" stroke="#99b6e3"/>
<path d="M489 185 484 190 477 182 483 176" fill="#9dbae6" stroke="#9dbae6"/>
<path d="M490 199 485 205 479 196 484 190" fill="#9fbce6" stroke="#9fbce6"/>
<path d="M485 205 480 211 473 203 479 196" fill="#a3c0e9" stroke="#a3c0e9"/>
<path d="M484 190 479 196 472 188 477 182" fill="#a2bfe9" stroke="#a2bfe9"/>
<path d="M479 196 473 203 466 195 472 188" fill="#a8c5ec" stroke="#a8c5ec"/>
<path d="M480 211 476 218 469 211 473 203" fill="#a8c4eb" stroke="#a8c4eb"/>
<path d="M476 218 472 226 464 219 469 211" fill="#acc8ed" stroke="#acc8ed"/>
<path d="M473 203 469 211 461 204 466 195" fill="#aecaef" stroke="#aecaef"/>
<path d="M469 211 464 219 456 212 461 204" fill="#b4cff1" stroke="#b4cff1"/>
<path d="M472 226 467 234 459 228 464 219" fill="#afcbee" stroke="#afcbee"/>
<path d="M467 234 464 243 455 238 459 228" fill="#b1ccee" stroke="#b1ccee"/>
<path d="M464 219 459 228 451 222 456 212" fill="#b8d3f3" stroke="#b8d3f3"/>
<path d="M459 228 455 238 447 232 451 222" fill="#bbd5f3" stroke="#bbd5f3"/>
<path d="M464 243 460 253 452 248 455 238" fill="#b1cced" stroke="#b1cced"/>
<path d="M460 253 457 263 448 259 452 248" fill="#afcaeb" stroke="#afcaeb"/>
<path d="M455 238 452 248 443 243 447 232" fill="#bbd5f2" stroke="#bbd5f2"/>
<path d="M452 248 448 259 439 255 443 243" fill="#b8d2f0" stroke="#b8d2f0"/>
<path d="M457 263 454 273 445 270 448 259" fill="#abc6e8" stroke="#abc6e8"/>
<path d="M454 273 452 284 443 281 445 270" fill="#a6c0e3" stroke="#a6c0e3"/>
<path d="M448 259 445 270 436 267 439 255" fill="#b4ceec" stroke="#b4ceec"/>
<path d="M445 270 443 281 433 279 436 267" fill="#adc7e7" stroke="#adc7e7"/>
<path d="M452 284 450 295 441 293 443 281" fill="#a0badf" stroke="#a0badf"/>
<path d="M450 295 449 306 439 305 441 293" fill="#99b4da" stroke="#99b4da"/>
<path d="M443 281 441 293 431 291 433 279" fill="#a5c0e2" stroke="#a5c0e2"/>
<path d="M441 293 439 305 429 304 431 291" fill="#9db7dc" stroke="#9db7dc"/>
<path d="M429 304 428 316 417 316 418 303" fill="#98b2d7" stroke="#98b2d7"/>
<path d="M428 316 428 329 416 330 417 316" fill="#8faad0" stroke="#8faad0"/>
<path d="M418 303 417 316 406 316 407 301" fill="#9ab4d8" stroke="#9ab4d8"/>
<path d="M417 316 416 330 405 330 406 316" fill="#90aad0" stroke="#90aad0"/>
<path d="M428 329 427 341 416 343 416 330" fill="#88a2ca" stroke="#88a2ca"/>
<path d="M427 341 428 354 417 356 416 343" fill="#829cc4" stroke="#829cc4"/>
<path d="M416 330 416 343 405 344 405 330" fill="#88a2c9" stroke="#88a2c9"/>
<path d="M416 343 417 356 405 358 405 344" fill="#829bc3" stroke="#829bc3"/>
<path d="M428 354 429 365 418 368 417 356" fill="#7d96be" stroke="#7d96be"/>
<path d="M429 365 430 377 419 381 418 368" fill="#7891b8" stroke="#7891b8"/>
<path d="M417 356 418 368 406 371 405 358" fill="#7c95bc" stroke="#7c95bc"/>
<path d="M418 368 419 381 408 384 406 371" fill="#778fb6" stroke="#778fb6"/>
<path d="M430 377 432 388 421 392 419 381" fill="#748cb3" stroke="#748cb3"/>
<path d="M432 388 434 398 424 403 421 392" fill="#7087ad" stroke="#7087ad"/>
<path d="M419 381 421 392 410 397 408 384" fill="#738ab0" stroke="#738ab0"/>
<path d="M421 392 424 403 413 408 410 397" fill="#6f85aa" stroke="#6f85aa"/>
<path d="M434 398 437 408 427 413 424 403" fill="#6c83a7" stroke="#6c83a7"/>
<path d="M437 408 440 417 430 423 427 413" fill="#687ea1" stroke="#687ea1"/>
<path d="M424 403 427 413 416 419 413 408" fill="#6a80a4" stroke="#6a80a4"/>
<path d="M427 413 430 423 420 429 416 419" fill="#667b9e" stroke="#667b9e"/>
<path d="M440 417 444 425 434 432 430 423" fill="#65799b" stroke="#65799b"/>
<path d="M444 425 448 432 439 439 434 432" fill="#617495" stroke="#617495"/>
<path d="M430 423 434 432 425 438 420 429" fill="#627698" stroke="#627698"/>
<path d="M434 432 439 439 429 446 425 438" fill="#5e7191" stroke="#5e7191"/>
<path d="M448 432 452 438 443 446 439 439" fill="#5d7090" stroke="#5d7090"/>
<path d="M452 438 457 444 448 452 443 446" fill="#596b8a" stroke="#596b8a"/>
<path d="M439 439 443 446 434 454 429 446" fill="#5a6c8b" stroke="#5a6c8b"/>
<path d="M443 446 448 452 440 460 434 454" fill="#566785" stroke="#566785"/>
<path d="M457 444 462 449 454 457 448 452" fill="#556784" stroke="#556784"/>
<path d="M462 449 467 452 459 461 454 457" fill="#51627e" stroke="#51627e"/>
<path d="M448 452 454 457 445 465 440 460" fill="#52627f" stroke="#52627f"/>
<path d="M454 457 459 461 451 469 445 465" fill="#4e5d79" stroke="#4e5d79"/>
<path d="M467 452 472 455 465 464 459 461" fill="#4e5e79" stroke="#4e5e79"/>
<path d="M472 455 478 457 471 465 465 464" fill="#4a5974" stroke="#4a5974"/>
<path d="M459 461 465 464 457 472 451 469" fill="#4a5973" stroke="#4a5973"/>
<path d="M465 464 471 465 463 474 457 472" fill="#46546d" stroke="#46546d"/>
<path d="M478 457 483 458 477 466 471 465" fill="#47556f" stroke="#47556f"/>
<path d="M483 458 489 458 483 466 477 466" fill="#44516a" stroke="#44516a"/>
<path d="M471 465 477 466 470 475 463 474" fill="#425068" stroke="#425068"/>
<path d="M477 466 483 466 476 474 470 475" fill="#3f4b62" stroke="#3f4b62"/>
<path d="M489 458 495 457 489 465 483 466" fill="#404e65" stroke="#404e65"/>
<path d="M495 457 500 455 495 463 489 465" fill="#3e4a60" stroke="#3e4a60"/>
<path d="M483 466 489 465 482 473 476 474" fill="#3b475d" stroke="#3b475d"/>
<path d="M489 465 495 463 489 471 482 473" fill="#384358" stroke="#384358"/>
<path d="M500 455 506 452 501 460 495 463" fill="#3b475c" stroke="#3b475c"/>
<path d="M506 452 511 449 506 457 501 460" fill="#384358" stroke="#384358"/>
<path d="M495 463 501 460 495 468 489 471" fill="#354053" stroke="#354053"/>
<path d="M501 460 506 457 501 464 495 468" fill="#323c4e" stroke="#323c4e"/>
<path d="M511 449 517 445 512 452 506 457" fill="#353f53" stroke="#353f53"/>
<path d="M517 445 522 440 518 447 512 452" fill="#303a4c" stroke="#303a4c"/>
<path d="M506 457 512 452 507 459 501 464" fill="#2e3748" stroke="#2e3748"/>
<path d="M512 452 518 447 513 454 507 459" fill="#283141" stroke="#283141"/>
<path d="M522 440 527 434 523 441 518 447" fill="#2e3849" stroke="#2e3849"/>
<path d="M527 434 532 428 529 434 523 441" fill="#30394c" stroke="#30394c"/>
<path d="M518 447 523 441 519 447 513 454" fill="#2a3243" stroke="#2a3243"/>
<path d="M523 441 529 434 525 440 519 447" fill="#2c3445" stroke="#2c3445"/>
<path d="M532 428 537 421 534 427 529 434" fill="#313b4e" stroke="#313b4e"/>
<path d="M537 421 541 413 538 419 534 427" fill="#333e51" stroke="#333e51"/>
<path d="M529 434 534 427 530 432 525 440" fill="#2d3748" stroke="#2d3748"/>
<path d="M534 427 538 419 535 424 530 432" fill="#30394b" stroke="#30394b"/>
<path d="M564 218 562 210 560 203 563 212" fill="#687da1" stroke="#687da1"/>
<path d="M562 210 559 202 557 195 560 203" fill="#6a80a4" stroke="#6a80a4"/>
<path d="M563 212 560 203 558 197 561 206" fill="#687da0" stroke="#687da0"/>
<path d="M560 203 557 195 554 188 558 197" fill="#6a80a4" stroke="#6a80a4"/>
<path d="M559 202 555 195 553 187 557 195" fill="#6c82a7" stroke="#6c82a7"/>
<path d="M555 195 551 188 549 180 553 187" fill="#6e85aa" stroke="#6e85aa"/>
<path d="M557 195 553 187 551 180 554 188" fill="#6c82a7" stroke="#6c82a7"/>
<path d="M553 187 549 180 546 172 551 180" fill="#6e85aa" stroke="#6e85aa"/>
<path d="M551 188 547 182 545 174 549 180" fill="#7289af" stroke="#7289af"/>
<path d="M547 182 543 177 540 168 545 174" fill="#7890b8" stroke="#7890b8"/>
<path d="M549 180 545 174 542 166 546 172" fill="#7087ad" stroke="#7087ad"/>
<path d="M545 174 540 168 537 160 542 166" fill="#768eb6" stroke="#768eb6"/>
<path d="M543 177 539 173 535 164 540 168" fill="#7c95be" stroke="#7c95be"/>
<path d="M539 173 534 169 530 160 535 164" fill="#7f99c4" stroke="#7f99c4"/>
<path d="M540 168 535 164 532 155 537 160" fill="#7b94bd" stroke="#7b94bd"/>
<path d="M535 164 530 160 526 151 532 155" fill="#7e98c3" stroke="#7e98c3"/>
<path d="M534 169 529 166 525 157 530 160" fill="#829dc8" stroke="#829dc8"/>
<path d="M529 166 523 164 519 154 525 157" fill="#85a1cd" stroke="#85a1cd"/>
<path d="M530 160 525 157 521 147 526 151" fill="#829dc8" stroke="#829dc8"/>
<path d="M525 157 519 154 515 145 521 147" fill="#85a0cc" stroke="#85a0cc"/>
<path d="M523 164 518 163 513 153 519 154" fill="#88a4d1" stroke="#88a4d1"/>
<path d="M518 163 512 163 507 153 513 153" fill="#8ba7d5" stroke="#8ba7d5"/>
<path d="M519 154 513 153 508 143 515 145" fill="#88a4d1" stroke="#88a4d1"/>
<path d="M513 153 507 153 502 143 508 143" fill="#8ba7d5" stroke="#8ba7d5"/>
<path d="M512 163 506 164 501 154 507 153" fill="#8daad8" stroke="#8daad8"/>
<path d="M506 164 501 165 495 155 501 154" fill="#90addb" stroke="#90addb"/>
<path d="M507 153 501 154 495 144 502 143" fill="#8daad8" stroke="#8daad8"/>
<path d="M501 154 495 155 489 146 495 144" fill="#90addc" stroke="#90addc"/>
<path d="M501 165 495 168 489 158 495 155" fill="#93b0de" stroke="#93b0de"/>
<path d="M495 168 489 172 482 162 489 158" fill="#96b4e1" stroke="#96b4e1"/>
<path d="M495 155 489 158 482 148 489 146" fill="#93b1df" stroke="#93b1df"/>
<path d="M489 158 482 162 475 152 482 148" fill="#97b5e2" stroke="#97b5e2"/>
<path d="M489 172 483 176 476 167 482 162" fill="#9ab8e5" stroke="#9ab8e5"/>
<path d="M483 176 477 182 470 173 476 167" fill="#9fbde8" stroke="#9fbde8"/>
<path d="M482 162 476 167 469 157 475 152" fill="#9cb9e6" stroke="#9cb9e6"/>
<path d="M476 167 470 173 462 163 469 157" fill="#a2bfea" stroke="#a2bfea"/>
<path d="M477 182 472 188 464 179 470 173" fill="#a6c3ec" stroke="#a6c3ec"/>
<path d="M472 188 466 195 458 187 464 179" fill="#adc9ef" stroke="#adc9ef"/>
<path d="M470 173 464 179 456 171 462 163" fill="#a9c6ee" stroke="#a9c6ee"/>
<path d="M464 179 458 187 449 179 456 171" fill="#b2cef2" stroke="#b2cef2"/>
<path d="M466 195 461 204 452 196 458 187" fill="#b5d0f3" stroke="#b5d0f3"/>
<path d="M461 204 456 212 447 205 452 196" fill="#bcd7f6" stroke="#bcd7f6"/>
<path d="M458 187 452 196 443 188 449 179" fill="#bbd6f6" stroke="#bbd6f6"/>
<path d="M452 196 447 205 438 198 443 188" fill="#c4dffa" stroke="#c4dffa"/>
<path d="M456 212 451 222 442 215 447 205" fill="#c2dcf8" stroke="#c2dcf8"/>
<path d="M451 222 447 232 437 226 442 215" fill="#c5dff9" stroke="#c5dff9"/>
<path d="M447 205 442 215 432 209 438 198" fill="#cce5fd" stroke="#cce5fd"/>
<path d="M442 215 437 226 427 220 432 209" fill="#d0e9ff" stroke="#d0e9ff"/>
<path d="M447 232 443 243 433 238 437 226" fill="#c6dff8" stroke="#c6dff8"/>
<path d="M443 243 439 255 429 250 433 238" fill="#c3dcf5" stroke="#c3dcf5"/>
<path d="M437 226 433 238 422 233 427 220" fill="#d1eafe" stroke="#d1eafe"/>
<path d="M433 238 429 250 418 246 422 233" fill="#cee6fb" stroke="#cee6fb"/>
<path d="M439 255 436 267 425 263 429 250" fill="#bdd6f1" stroke="#bdd6f1"/>
<path d="M436 267 433 279 423 276 425 263" fill="#b5ceeb" stroke="#b5ceeb"/>
<path d="M429 250 425 263 415 259 418 246" fill="#c6dff6" stroke="#c6dff6"/>
<path d="M425 263 423 276 412 273 415 259" fill="#bcd5ef" stroke="#bcd5ef"/>
<path d="M433 279 431 291 420 289 423 276" fill="#abc5e5" stroke="#abc5e5"/>
<path d="M431 291 429 304 418 303 420 289" fill="#a1bbde" stroke="#a1bbde"/>
<path d="M423 276 420 289 409 287 412 273" fill="#b1cae8" stroke="#b1cae8"/>
<path d="M420 289 418 303 407 301 409 287" fill="#a5bfe0" stroke="#a5bfe0"/>
<path d="M407 301 406 316 393 315 394 300" fill="#9bb5d8" stroke="#9bb5d8"/>
<path d="M406 316 405 330 392 330 393 315" fill="#91aad0" stroke="#91aad0"/>
<path d="M394 300 393 315 379 315 381 299" fill="#9cb5d8" stroke="#9cb5d8"/>
<path d="M393 315 392 330 379 331 379 315" fill="#90aacf" stroke="#90aacf"/>
<path d="M405 330 405 344 392 345 392 330" fill="#88a1c8" stroke="#88a1c8"/>
<path d="M405 344 405 358 392 360 392 345" fill="#819ac1" stroke="#819ac1"/>
<path d="M392 330 392 345 379 347 379 331" fill="#87a0c7" stroke="#87a0c7"/>
<path d="M392 345 392 360 379 362 379 347" fill="#7f98bf" stroke="#7f98bf"/>
<path d="M405 358 406 371 394 374 392 360" fill="#7b93bb" stroke="#7b93bb"/>
<path d="M406 371 408 384 395 388 394 374" fill="#768eb4" stroke="#768eb4"/>
<path d="M392 360 394 374 380 377 379 362" fill="#7991b8" stroke="#7991b8"/>
<path d="M394 374 395 388 382 392 380 377" fill="#748bb2" stroke="#748bb2"/>
<path d="M408 384 410 397 398 401 395 388" fill="#7188ae" stroke="#7188ae"/>
<path d="M410 397 413 408 401 414 398 401" fill="#6d83a7" stroke="#6d83a7"/>
<path d="M395 388 398 401 385 406 382 392" fill="#6f86ab" stroke="#6f86ab"/>
<path d="M398 401 401 414 388 419 385 406" fill="#6a80a4" stroke="#6a80a4"/>
<path d="M413 408 416 419 404 425 401 414" fill="#687ea1" stroke="#687ea1"/>
<path d="M416 419 420 429 409 436 404 425" fill="#64789a" stroke="#64789a"/>
<path d="M401 414 404 425 392 431 388 419" fill="#667a9d" stroke="#667a9d"/>
<path d="M404 425 409 436 397 442 392 431" fill="#617596" stroke="#617596"/>
<path d="M420 429 425 438 413 445 409 436" fill="#5f7393" stroke="#5f7393"/>
<path d="M425 438 429 446 418 454 413 445" fill="#5b6d8d" stroke="#5b6d8d"/>
<path d="M409 436 413 445 402 452 397 442" fill="#5c6f8f" stroke="#5c6f8f"/>
<path d="M413 445 418 454 407 461 402 452" fill="#576988" stroke="#576988"/>
<path d="M429 446 434 454 424 461 418 454" fill="#566886" stroke="#566886"/>
<path d="M434 454 440 460 429 468 424 461" fill="#52637f" stroke="#52637f"/>
<path d="M418 454 424 461 413 469 407 461" fill="#536480" stroke="#536480"/>
<path d="M424 461 429 468 419 476 413 469" fill="#4e5e79" stroke="#4e5e79"/>
<path d="M440 460 445 465 435 473 429 468" fill="#4e5e79" stroke="#4e5e79"/>
<path d="M445 465 451 469 442 477 435 473" fill="#495872" stroke="#495872"/>
<path d="M429 468 435 473 425 481 419 476" fill="#495872" stroke="#495872"/>
<path d="M435 473 442 477 432 486 425 481" fill="#45536b" stroke="#45536b"/>
<path d="M451 469 457 472 448 481 442 477" fill="#45536c" stroke="#45536c"/>
<path d="M457 472 463 474 455 483 448 481" fill="#414e66" stroke="#414e66"/>
<path d="M442 477 448 481 439 489 432 486" fill="#404d64" stroke="#404d64"/>
<path d="M448 481 455 483 446 491 439 489" fill="#3c485e" stroke="#3c485e"/>
<path d="M463 474 470 475 462 483 455 483" fill="#3d4a60" stroke="#3d4a60"/>
<path d="M470 475 476 474 468 483 462 483" fill="#39455a" stroke="#39455a"/>
<path d="M455 483 462 483 453 492 446 491" fill="#374357" stroke="#374357"/>
<path d="M462 483 468 483 461 491 453 492" fill="#333e51" stroke="#333e51"/>
<path d="M476 474 482 473 475 482 468 483" fill="#364154" stroke="#364154"/>
<path d="M482 473 489 471 482 480 475 482" fill="#323c4f" stroke="#323c4f"/>
<path d="M468 483 475 482 468 490 461 491" fill="#2f394b" stroke="#2f394b"/>
<path d="M475 482 482 480 475 488 468 490" fill="#2b3445" stroke="#2b3445"/>
<path d="M489 471 495 468 489 476 482 480" fill="#2e384a" stroke="#2e384a"/>
<path d="M495 468 501 464 495 472 489 476" fill="#2b3344" stroke="#2b3344"/>
<path d="M482 480 489 476 482 484 475 488" fill="#272f3f" stroke="#272f3f"/>
<path d="M489 476 495 472 489 479 482 484" fill="#222937" stroke="#222937"/>
<path d="M501 464 507 459 502 467 495 472" fill="#222937" stroke="#222937"/>
<path d="M507 459 513 454 508 461 502 467" fill="#232b39" stroke="#232b39"/>
<path d="M495 472 502 467 496 474 489 479" fill="#1c222e" stroke="#1c222e"/>
<path d="M502 467 508 461 503 468 496 474" fill="#1e2431" stroke="#1e2431"/>
<path d="M513 454 519 447 514 454 508 461" fill="#252d3c" stroke="#252d3c"/>
<path d="M519 447 525 440 520 447 514 454" fill="#272f3e" stroke="#272f3e"/>
<path d="M508 461 514 454 509 461 503 468" fill="#202634" stroke="#202634"/>
<path d="M514 454 520 447 515 453 509 461" fill="#222937" stroke="#222937"/>
<path d="M554 188 551 180 548 172 552 181" fill="#6c82a7" stroke="#6c82a7"/>
<path d="M551 180 546 172 543 164 548 172" fill="#6e85aa" stroke="#6e85aa"/>
<path d="M552 181 548 172 544 165 548 174" fill="#6c82a6" stroke="#6c82a6"/>
<path d="M548 172 543 164 539 156 544 165" fill="#6e84a9" stroke="#6e84a9"/>
<path d="M546 172 542 166 538 157 543 164" fill="#7087ad" stroke="#7087ad"/>
<path d="M542 166 537 160 533 151 538 157" fill="#7289b0" stroke="#7289b0"/>
<path d="M543 164 538 157 534 149 539 156" fill="#7087ad" stroke="#7087ad"/>
<path d="M538 157 533 151 529 142 534 149" fill="#7289b0" stroke="#7289b0"/>
<path d="M537 160 532 155 528 145 533 151" fill="#7992bb" stroke="#7992bb"/>
<path d="M532 155 526 151 522 141 528 145" fill="#7e97c1" stroke="#7e97c1"/>
<path d="M533 151 528 145 523 136 529 142" fill="#7890b8" stroke="#7890b8"/>
<path d="M528 145 522 141 517 131 523 136" fill="#7d96c0" stroke="#7d96c0"/>
<path d="M526 151 521 147 516 137 522 141" fill="#819cc7" stroke="#819cc7"/>
<path d="M521 147 515 145 509 135 516 137" fill="#85a0cc" stroke="#85a0cc"/>
<path d="M522 141 516 137 510 127 517 131" fill="#819bc6" stroke="#819bc6"/>
<path d="M516 137 509 135 503 125 510 127" fill="#849fcb" stroke="#849fcb"/>
<path d="M515 145 508 143 503 133 509 135" fill="#88a4d0" stroke="#88a4d0"/>
<path d="M508 143 502 143 496 133 503 133" fill="#8ba7d5" stroke="#8ba7d5"/>
<path d="M509 135 503 133 496 123 503 125" fill="#87a3d0" stroke="#87a3d0"/>
<path d="M503 133 496 133 489 122 496 123" fill="#8aa7d4" stroke="#8aa7d4"/>
<path d="M502 143 495 144 489 133 496 133" fill="#8daad9" stroke="#8daad9"/>
<path d="M495 144 489 146 482 135 489 133" fill="#90aedc" stroke="#90aedc"/>
<path d="M496 133 489 133 482 123 489 122" fill="#8daad8" stroke="#8daad8"/>
<path d="M489 133 482 135 474 125 482 123" fill="#90addc" stroke="#90addc"/>
<path d="M489 146 482 148 475 138 482 135" fill="#93b1e0" stroke="#93b1e0"/>
<path d="M482 148 475 152 467 142 475 138" fill="#97b5e3" stroke="#97b5e3"/>
<path d="M482 135 475 138 467 128 474 125" fill="#93b1e0" stroke="#93b1e0"/>
<path d="M475 138 467 142 459 132 467 128" fill="#97b5e3" stroke="#97b5e3"/>
<path d="M475 152 469 157 460 147 467 142" fill="#9cbae7" stroke="#9cbae7"/>
<path d="M469 157 462 163 453 154 460 147" fill="#a3c0eb" stroke="#a3c0eb"/>
<path d="M467 142 460 147 451 137 459 132" fill="#9dbae7" stroke="#9dbae7"/>
<path d="M460 147 453 154 444 144 451 137" fill="#a4c1ec" stroke="#a4c1ec"/>
<path d="M462 163 456 171 446 161 453 154" fill="#abc8ef" stroke="#abc8ef"/>
<path d="M456 171 449 179 439 170 446 161" fill="#b6d2f5" stroke="#b6d2f5"/>
<path d="M453 154 446 161 436 152 444 144" fill="#adcaf1" stroke="#adcaf1"/>
<path d="M446 161 439 170 429 161 436 152" fill="#b8d4f6" stroke="#b8d4f6"/>
<path d="M449 179 443 188 433 179 439 170" fill="#c1dcfa" stroke="#c1dcfa"/>
<path d="M443 188 438 198 427 190 433 179" fill="#cce6fe" stroke="#cce6fe"/>
<path d="M439 170 433 179 422 171 429 161" fill="#c5e0fc" stroke="#c5e0fc"/>
<path d="M433 179 427 190 416 182 422 171" fill="#d2ebff" stroke="#d2ebff"/>
<path d="M438 198 432 209 421 202 427 190" fill="#d5eeff" stroke="#d5eeff"/>
<path d="M432 209 427 220 416 214 421 202" fill="#dbf3ff" stroke="#dbf3ff"/>
<path d="M427 190 421 202 410 194 416 182" fill="#ddf5ff" stroke="#ddf5ff"/>
<path d="M421 202 416 214 404 207 410 194" fill="#e3fbff" stroke="#e3fbff"/>
<path d="M427 220 422 233 411 227 416 214" fill="#dcf4ff" stroke="#dcf4ff"/>
<path d="M422 233 418 246 406 241 411 227" fill="#d8f0ff" stroke="#d8f0ff"/>
<path d="M416 214 411 227 399 221 404 207" fill="#e5fcff" stroke="#e5fcff"/>
<path d="M411 227 406 241 394 236 399 221" fill="#e0f7ff" stroke="#e0f7ff"/>
<path d="M418 246 415 259 402 255 406 241" fill="#cfe7fa" stroke="#cfe7fa"/>
<path d="M415 259 412 273 399 270 402 255" fill="#c3dcf3" stroke="#c3dcf3"/>
<path d="M406 241 402 255 390 251 394 236" fill="#d7eefd" stroke="#d7eefd"/>
<path d="M402 255 399 270 386 267 390 251" fill="#c9e1f5" stroke="#c9e1f5"/>
<path d="M412 273 409 287 396 285 399 270" fill="#b6cfea" stroke="#b6cfea"/>
<path d="M409 287 407 301 394 300 396 285" fill="#a8c1e1" stroke="#a8c1e1"/>
<path d="M399 270 396 285 383 282 386 267" fill="#b9d2eb" stroke="#b9d2eb"/>
<path d="M396 285 394 300 381 299 383 282" fill="#aac3e1" stroke="#aac3e1"/>
<path d="M381 299 379 315 364 314 366 297" fill="#9bb4d6" stroke="#9bb4d6"/>
<path d="M379 315 379 331 363 331 364 314" fill="#8fa8cd" stroke="#8fa8cd"/>
<path d="M366 297 364 314 349 313 350 295" fill="#98b1d4" stroke="#98b1d4"/>
<path d="M364 314 363 331 348 331 349 313" fill="#8ca5ca" stroke="#8ca5ca"/>
<path d="M379 331 379 347 363 348 363 331" fill="#859ec5" stroke="#859ec5"/>
<path d="M379 347 379 362 364 364 363 348" fill="#7d96bd" stroke="#7d96bd"/>
<path d="M363 331 363 348 348 349 348 331" fill="#829bc2" stroke="#829bc2"/>
<path d="M363 348 364 364 349 366 348 349" fill="#7b93ba" stroke="#7b93ba"/>
<path d="M379 362 380 377 365 380 364 364" fill="#778fb6" stroke="#778fb6"/>
<path d="M380 377 382 392 368 396 365 380" fill="#7289ae" stroke="#7289ae"/>
<path d="M364 364 365 380 350 383 349 366" fill="#758cb2" stroke="#758cb2"/>
<path d="M365 380 368 396 353 399 350 383" fill="#6f86ab" stroke="#6f86ab"/>
<path d="M382 392 385 406 371 410 368 396" fill="#6d83a7" stroke="#6d83a7"/>
<path d="M385 406 388 419 374 424 371 410" fill="#687da0" stroke="#687da0"/>
<path d="M368 396 371 410 356 415 353 399" fill="#6a7fa3" stroke="#6a7fa3"/>
<path d="M371 410 374 424 360 429 356 415" fill="#65799b" stroke="#65799b"/>
<path d="M388 419 392 431 378 437 374 424" fill="#637799" stroke="#637799"/>
<path d="M392 431 397 442 383 449 378 437" fill="#5e7191" stroke="#5e7191"/>
<path d="M374 424 378 437 364 442 360 429" fill="#5f7394" stroke="#5f7394"/>
<path d="M378 437 383 449 369 455 364 442" fill="#5a6d8c" stroke="#5a6d8c"/>
<path d="M397 442 402 452 388 459 383 449" fill="#596b89" stroke="#596b89"/>
<path d="M402 452 407 461 394 469 388 459" fill="#546582" stroke="#546582"/>
<path d="M383 449 388 459 375 466 369 455" fill="#556683" stroke="#556683"/>
<path d="M388 459 394 469 381 476 375 466" fill="#4f607b" stroke="#4f607b"/>
<path d="M407 461 413 469 400 477 394 469" fill="#4f5f7a" stroke="#4f5f7a"/>
<path d="M413 469 419 476 407 484 400 477" fill="#495872" stroke="#495872"/>
<path d="M394 469 400 477 388 485 381 476" fill="#4a5973" stroke="#4a5973"/>
<path d="M400 477 407 484 395 492 388 485" fill="#44526b" stroke="#44526b"/>
<path d="M419 476 425 481 414 490 407 484" fill="#44526b" stroke="#44526b"/>
<path d="M425 481 432 486 421 494 414 490" fill="#3f4c63" stroke="#3f4c63"/>
<path d="M407 484 414 490 402 498 395 492" fill="#3f4c63" stroke="#3f4c63"/>
<path d="M414 490 421 494 410 503 402 498" fill="#3a455b" stroke="#3a455b"/>
<path d="M432 486 439 489 429 498 421 494" fill="#3b475c" stroke="#3b475c"/>
<path d="M439 489 446 491 436 500 429 498" fill="#364155" stroke="#364155"/>
<path d="M421 494 429 498 418 506 410 503" fill="#343f53" stroke="#343f53"/>
<path d="M429 498 436 500 426 508 418 506" fill="#2f394b" stroke="#2f394b"/>
<path d="M446 491 453 492 444 501 436 500" fill="#313b4e" stroke="#313b4e"/>
<path d="M453 492 461 491 451 500 444 501" fill="#2d3647" stroke="#2d3647"/>
<path d="M436 500 444 501 434 509 426 508" fill="#2a3243" stroke="#2a3243"/>
<path d="M444 501 451 500 442 508 434 509" fill="#252c3b" stroke="#252c3b"/>
<path d="M461 491 468 490 459 499 451 500" fill="#283040" stroke="#283040"/>
<path d="M468 490 475 488 467 496 459 499" fill="#242b39" stroke="#242b39"/>
<path d="M451 500 459 499 450 507 442 508" fill="#202633" stroke="#202633"/>
<path d="M459 499 467 496 458 504 450 507" fill="#1a202b" stroke="#1a202b"/>
<path d="M475 488 482 484 474 492 467 496" fill="#1f2532" stroke="#1f2532"/>
<path d="M482 484 489 479 482 487 474 492" fill="#141822" stroke="#141822"/>
<path d="M467 496 474 492 466 500 458 504" fill="#141822" stroke="#141822"/>
<path d="M474 492 482 487 474 495 466 500" fill="#0b0e15" stroke="#0b0e15"/>
<path d="M489 479 496 474 489 482 482 487" fill="#161a24" stroke="#161a24"/>
<path d="M496 474 503 468 496 475 489 482" fill="#181c27" stroke="#181c27"/>
<path d="M482 487 489 482 482 488 474 495" fill="#0e1018" stroke="#0e1018"/>
<path d="M489 482 496 475 489 481 482 488" fill="#10131c" stroke="#10131c"/>
<path d="M539 156 534 149 529 140 535 148" fill="#7087ac" stroke="#7087ac"/>
<path d="M534 149 529 142 523 132 529 140" fill="#7289af" stroke="#7289af"/>
<path d="M535 148 529 140 524 131 529 139" fill="#6f86ac" stroke="#6f86ac"/>
<path d="M529 140 523 132 517 123 524 131" fill="#7188af" stroke="#7188af"/>
<path d="M529 142 523 136 517 126 523 132" fill="#748bb2" stroke="#748bb2"/>
<path d="M523 136 517 131 511 121 517 126" fill="#7b94bd" stroke="#7b94bd"/>
<path d="M523 132 517 126 511 117 517 123" fill="#738bb1" stroke="#738bb1"/>
<path d="M517 126 511 121 504 111 511 117" fill="#7992bb" stroke="#7992bb"/>
<path d="M517 131 510 127 504 117 511 121" fill="#7f9ac4" stroke="#7f9ac4"/>
<path d="M510 127 503 125 497 114 504 117" fill="#839eca" stroke="#839eca"/>
<path d="M511 121 504 117 497 107 504 111" fill="#7e98c2" stroke="#7e98c2"/>
<path d="M504 117 497 114 489 104 497 107" fill="#829dc8" stroke="#829dc8"/>
<path d="M503 125 496 123 489 112 497 114" fill="#87a2cf" stroke="#87a2cf"/>
<path d="M496 123 489 122 481 111 489 112" fill="#8aa6d4" stroke="#8aa6d4"/>
<path d="M497 114 489 112 481 102 489 104" fill="#86a1cd" stroke="#86a1cd"/>
<path d="M489 112 481 111 473 101 481 102" fill="#89a5d2" stroke="#89a5d2"/>
<path d="M489 122 482 123 473 112 481 111" fill="#8daad8" stroke="#8daad8"/>
<path d="M482 123 474 125 465 114 473 112" fill="#90addc" stroke="#90addc"/>
<path d="M481 111 473 112 465 101 473 101" fill="#8ca9d7" stroke="#8ca9d7"/>
<path d="M473 112 465 114 456 103 465 101" fill="#8facdb" stroke="#8facdb"/>
<path d="M474 125 467 128 457 117 465 114" fill="#93b1df" stroke="#93b1df"/>
<path d="M467 128 459 132 449 121 457 117" fill="#97b5e3" stroke="#97b5e3"/>
<path d="M465 114 457 117 448 106 456 103" fill="#92b0df" stroke="#92b0df"/>
<path d="M457 117 449 121 439 111 448 106" fill="#96b4e2" stroke="#96b4e2"/>
<path d="M459 132 451 137 441 127 449 121" fill="#9cbae7" stroke="#9cbae7"/>
<path d="M451 137 444 144 433 134 441 127" fill="#a4c1eb" stroke="#a4c1eb"/>
<path d="M449 121 441 127 430 117 439 111" fill="#9bb9e6" stroke="#9bb9e6"/>
<path d="M441 127 433 134 422 124 430 117" fill="#a2c0eb" stroke="#a2c0eb"/>
<path d="M444 144 436 152 425 142 433 134" fill="#adcaf1" stroke="#adcaf1"/>
<path d="M436 152 429 161 417 151 425 142" fill="#b9d5f7" stroke="#b9d5f7"/>
<path d="M433 134 425 142 413 132 422 124" fill="#acc8f0" stroke="#acc8f0"/>
<path d="M425 142 417 151 405 142 413 132" fill="#b8d4f6" stroke="#b8d4f6"/>
<path d="M429 161 422 171 410 162 417 151" fill="#c7e2fd" stroke="#c7e2fd"/>
<path d="M422 171 416 182 403 174 410 162" fill="#d5eeff" stroke="#d5eeff"/>
<path d="M417 151 410 162 397 153 405 142" fill="#c6e0fc" stroke="#c6e0fc"/>
<path d="M410 162 403 174 390 166 397 153" fill="#d4eeff" stroke="#d4eeff"/>
<path d="M416 182 410 194 396 187 403 174" fill="#e1f9ff" stroke="#e1f9ff"/>
<path d="M410 194 404 207 390 200 396 187" fill="#e9ffff" stroke="#e9ffff"/>
<path d="M403 174 396 187 383 179 390 166" fill="#e1f9ff" stroke="#e1f9ff"/>
<path d="M396 187 390 200 376 194 383 179" fill="#e9ffff" stroke="#e9ffff"/>
<path d="M404 207 399 221 385 215 390 200" fill="#eaffff" stroke="#eaffff"/>
<path d="M399 221 394 236 379 230 385 215" fill="#e5fcff" stroke="#e5fcff"/>
<path d="M390 200 385 215 370 209 376 194" fill="#ebffff" stroke="#ebffff"/>
<path d="M385 215 379 230 365 225 370 209" fill="#e6fcff" stroke="#e6fcff"/>
<path d="M394 236 390 251 375 246 379 230" fill="#daf1ff" stroke="#daf1ff"/>
<path d="M390 251 386 267 371 263 375 246" fill="#cbe3f6" stroke="#cbe3f6"/>
<path d="M379 230 375 246 360 242 365 225" fill="#daf1fe" stroke="#daf1fe"/>
<path d="M375 246 371 263 356 259 360 242" fill="#cae1f4" stroke="#cae1f4"/>
<path d="M386 267 383 282 368 280 371 263" fill="#bad2eb" stroke="#bad2eb"/>
<path d="M383 282 381 299 366 297 368 280" fill="#a9c2e0" stroke="#a9c2e0"/>
<path d="M371 263 368 280 353 277 356 259" fill="#b8d0e9" stroke="#b8d0e9"/>
<path d="M368 280 366 297 350 295 353 277" fill="#a7c0de" stroke="#a7c0de"/>
<path d="M350 295 349 313 332 312 333 293" fill="#94add0" stroke="#94add0"/>
<path d="M349 313 348 331 331 331 332 312" fill="#88a1c7" stroke="#88a1c7"/>
<path d="M333 293 332 312 314 311 316 291" fill="#8ea7cb" stroke="#8ea7cb"/>
<path d="M332 312 331 331 313 331 314 311" fill="#849cc2" stroke="#849cc2"/>
<path d="M348 331 348 349 331 350 331 331" fill="#7f98be" stroke="#7f98be"/>
<path d="M348 349 349 366 332 368 331 350" fill="#7890b6" stroke="#7890b6"/>
<path d="M331 331 331 350 313 351 313 331" fill="#7b93ba" stroke="#7b93ba"/>
<path d="M331 350 332 368 314 370 313 351" fill="#748cb2" stroke="#748cb2"/>
<path d="M349 366 350 383 333 386 332 368" fill="#7289ae" stroke="#7289ae"/>
<path d="M350 383 353 399 336 403 333 386" fill="#6c82a6" stroke="#6c82a6"/>
<path d="M332 368 333 386 316 388 314 370" fill="#6e85aa" stroke="#6e85aa"/>
<path d="M333 386 336 403 319 406 316 388" fill="#697ea1" stroke="#697ea1"/>
<path d="M353 399 356 415 339 419 336 403" fill="#677c9e" stroke="#677c9e"/>
<path d="M356 415 360 429 343 434 339 419" fill="#617596" stroke="#617596"/>
<path d="M336 403 339 419 323 423 319 406" fill="#637799" stroke="#637799"/>
<path d="M339 419 343 434 327 439 323 423" fill="#5d7090" stroke="#5d7090"/>
<path d="M360 429 364 442 348 448 343 434" fill="#5c6e8e" stroke="#5c6e8e"/>
<path d="M364 442 369 455 354 461 348 448" fill="#566885" stroke="#566885"/>
<path d="M343 434 348 448 332 453 327 439" fill="#576988" stroke="#576988"/>
<path d="M348 448 354 461 338 467 332 453" fill="#51627e" stroke="#51627e"/>
<path d="M369 455 375 466 360 473 354 461" fill="#50617d" stroke="#50617d"/>
<path d="M375 466 381 476 367 483 360 473" fill="#4a5a74" stroke="#4a5a74"/>
<path d="M354 461 360 473 345 479 338 467" fill="#4b5b75" stroke="#4b5b75"/>
<path d="M360 473 367 483 352 490 345 479" fill="#45536c" stroke="#45536c"/>
<path d="M381 476 388 485 374 492 367 483" fill="#45536b" stroke="#45536b"/>
<path d="M388 485 395 492 381 500 374 492" fill="#3f4c62" stroke="#3f4c62"/>
<path d="M367 483 374 492 359 499 352 490" fill="#3f4c62" stroke="#3f4c62"/>
<path d="M374 492 381 500 367 507 359 499" fill="#394459" stroke="#394459"/>
<path d="M395 492 402 498 389 506 381 500" fill="#39455a" stroke="#39455a"/>
<path d="M402 498 410 503 397 511 389 506" fill="#333e51" stroke="#333e51"/>
<path d="M381 500 389 506 376 513 367 507" fill="#323c4f" stroke="#323c4f"/>
<path d="M389 506 397 511 384 518 376 513" fill="#2c3546" stroke="#2c3546"/>
<path d="M410 503 418 506 406 514 397 511" fill="#2d3748" stroke="#2d3748"/>
<path d="M418 506 426 508 414 516 406 514" fill="#28303f" stroke="#28303f"/>
<path d="M397 511 406 514 393 522 384 518" fill="#252d3c" stroke="#252d3c"/>
<path d="M406 514 414 516 402 524 393 522" fill="#1f2532" stroke="#1f2532"/>
<path d="M426 508 434 509 423 517 414 516" fill="#222937" stroke="#222937"/>
<path d="M434 509 442 508 431 517 423 517" fill="#1c222e" stroke="#1c222e"/>
<path d="M414 516 423 517 411 525 402 524" fill="#181d28" stroke="#181d28"/>
<path d="M423 517 431 517 420 524 411 525" fill="#11151e" stroke="#11151e"/>
<path d="M442 508 450 507 440 515 431 517" fill="#161a25" stroke="#161a25"/>
<path d="M450 507 458 504 448 512 440 515" fill="#0f121a" stroke="#0f121a"/>
<path d="M431 517 440 515 429 522 420 524" fill="#090b11" stroke="#090b11"/>
<path d="M440 515 448 512 438 519 429 522" fill="#020206" stroke="#020206"/>
<path d="M458 504 466 500 457 507 448 512" fill="#020206" stroke="#020206"/>
<path d="M466 500 474 495 465 502 457 507" fill="#020206" stroke="#020206"/>
<path d="M448 512 457 507 447 514 438 519" fill="#020206" stroke="#020206"/>
<path d="M457 507 465 502 456 509 447 514" fill="#020206" stroke="#020206"/>
<path d="M517 123 511 117 504 107 511 114" fill="#738ab1" stroke="#738ab1"/>
<path d="M511 117 504 111 496 101 504 107" fill="#768eb6" stroke="#768eb6"/>
<path d="M511 114 504 107 496 98 503 106" fill="#7289b0" stroke="#7289b0"/>
<path d="M504 107 496 101 488 92 496 98" fill="#748bb2" stroke="#748bb2"/>
<path d="M504 111 497 107 489 97 496 101" fill="#7c96bf" stroke="#7c96bf"/>
<path d="M497 107 489 104 481 93 489 97" fill="#819bc6" stroke="#819bc6"/>
<path d="M496 101 489 97 480 87 488 92" fill="#7a93bc" stroke="#7a93bc"/>
<path d="M489 97 481 93 472 83 480 87" fill="#7f99c3" stroke="#7f99c3"/>
<path d="M489 104 481 102 472 91 481 93" fill="#84a0cc" stroke="#84a0cc"/>
<path d="M481 102 473 101 464 90 472 91" fill="#88a4d1" stroke="#88a4d1"/>
<path d="M481 93 472 91 463 81 472 83" fill="#839ec9" stroke="#839ec9"/>
<path d="M472 91 464 90 454 80 463 81" fill="#86a2ce" stroke="#86a2ce"/>
<path d="M473 101 465 101 455 90 464 90" fill="#8ba7d5" stroke="#8ba7d5"/>
<path d="M465 101 456 103 446 92 455 90" fill="#8eabd9" stroke="#8eabd9"/>
<path d="M464 90 455 90 444 80 454 80" fill="#8aa6d3" stroke="#8aa6d3"/>
<path d="M455 90 446 92 435 82 444 80" fill="#8da9d7" stroke="#8da9d7"/>
<path d="M456 103 448 106 437 95 446 92" fill="#91aedd" stroke="#91aedd"/>
<path d="M448 106 439 111 428 100 437 95" fill="#95b2e1" stroke="#95b2e1"/>
<path d="M446 92 437 95 425 85 435 82" fill="#90addb" stroke="#90addb"/>
<path d="M437 95 428 100 416 90 425 85" fill="#93b0df" stroke="#93b0df"/>
<path d="M439 111 430 117 418 106 428 100" fill="#99b7e5" stroke="#99b7e5"/>
<path d="M430 117 422 124 409 113 418 106" fill="#a0bde9" stroke="#a0bde9"/>
<path d="M428 100 418 106 406 96 416 90" fill="#97b5e3" stroke="#97b5e3"/>
<path d="M418 106 409 113 396 104 406 96" fill="#9cbae7" stroke="#9cbae7"/>
<path d="M422 124 413 132 400 122 409 113" fill="#a8c5ee" stroke="#a8c5ee"/>
<path d="M413 132 405 142 392 133 400 122" fill="#b4d0f4" stroke="#b4d0f4"/>
<path d="M409 113 400 122 387 113 396 104" fill="#a4c1eb" stroke="#a4c1eb"/>
<path d="M400 122 392 133 378 124 387 113" fill="#aecaf0" stroke="#aecaf0"/>
<path d="M405 142 397 153 383 144 392 133" fill="#c1dcfa" stroke="#c1dcfa"/>
<path d="M397 153 390 166 375 157 383 144" fill="#cfe9ff" stroke="#cfe9ff"/>
<path d="M392 133 383 144 369 136 378 124" fill="#bad5f5" stroke="#bad5f5"/>
<path d="M383 144 375 157 360 149 369 136" fill="#c6e0fb" stroke="#c6e0fb"/>
<path d="M390 166 383 179 368 171 375 157" fill="#dcf4ff" stroke="#dcf4ff"/>
<path d="M383 179 376 194 361 187 368 171" fill="#e4fbff" stroke="#e4fbff"/>
<path d="M375 157 368 171 353 164 360 149" fill="#d1eaff" stroke="#d1eaff"/>
<path d="M368 171 361 187 345 180 353 164" fill="#d8f0ff" stroke="#d8f0ff"/>
<path d="M376 194 370 209 354 203 361 187" fill="#e5fcff" stroke="#e5fcff"/>
<path d="M370 209 365 225 349 220 354 203" fill="#e0f6ff" stroke="#e0f6ff"/>
<path d="M361 187 354 203 338 197 345 180" fill="#d9f1ff" stroke="#d9f1ff"/>
<path d="M354 203 349 220 332 214 338 197" fill="#d4ebfc" stroke="#d4ebfc"/>
<path d="M365 225 360 242 344 237 349 220" fill="#d4ebfa" stroke="#d4ebfa"/>
<path d="M360 242 356 259 339 256 344 237" fill="#c4dcf0" stroke="#c4dcf0"/>
<path d="M349 220 344 237 327 233 332 214" fill="#c9e1f4" stroke="#c9e1f4"/>
<path d="M344 237 339 256 322 252 327 233" fill="#bad2ea" stroke="#bad2ea"/>
<path d="M356 259 353 277 336 274 339 256" fill="#b3cbe5" stroke="#b3cbe5"/>
<path d="M353 277 350 295 333 293 336 274" fill="#a2bbda" stroke="#a2bbda"/>
<path d="M339 256 336 274 319 272 322 252" fill="#aac3e0" stroke="#aac3e0"/>
<path d="M336 274 333 293 316 291 319 272" fill="#9bb4d5" stroke="#9bb4d5"/>
<path d="M316 291 314 311 295 310 296 289" fill="#88a0c6" stroke="#88a0c6"/>
<path d="M314 311 313 331 294 331 295 310" fill="#7e97bd" stroke="#7e97bd"/>
<path d="M296 289 295 310 275 309 277 287" fill="#8199c0" stroke="#8199c0"/>
<path d="M295 310 294 331 274 330 275 309" fill="#7991b7" stroke="#7991b7"/>
<path d="M313 331 313 351 294 351 294 331" fill="#778fb5" stroke="#778fb5"/>
<path d="M313 351 314 370 295 371 294 351" fill="#7187ac" stroke="#7187ac"/>
<path d="M294 331 294 351 274 352 274 330" fill="#7289af" stroke="#7289af"/>
<path d="M294 351 295 371 275 372 274 352" fill="#6c82a6" stroke="#6c82a6"/>
<path d="M314 370 316 388 297 391 295 371" fill="#6b80a4" stroke="#6b80a4"/>
<path d="M316 388 319 406 300 409 297 391" fill="#65799c" stroke="#65799c"/>
<path d="M295 371 297 391 278 393 275 372" fill="#667b9e" stroke="#667b9e"/>
<path d="M297 391 300 409 281 412 278 393" fill="#607495" stroke="#607495"/>
<path d="M319 406 323 423 304 427 300 409" fill="#5f7293" stroke="#5f7293"/>
<path d="M323 423 327 439 309 443 304 427" fill="#596b8a" stroke="#596b8a"/>
<path d="M300 409 304 427 285 430 281 412" fill="#5a6c8b" stroke="#5a6c8b"/>
<path d="M304 427 309 443 290 447 285 430" fill="#546582" stroke="#546582"/>
<path d="M327 439 332 453 314 459 309 443" fill="#536380" stroke="#536380"/>
<path d="M332 453 338 467 321 473 314 459" fill="#4c5c77" stroke="#4c5c77"/>
<path d="M309 443 314 459 296 463 290 447" fill="#4d5d78" stroke="#4d5d78"/>
<path d="M314 459 321 473 303 478 296 463" fill="#46556e" stroke="#46556e"/>
<path d="M338 467 345 479 327 485 321 473" fill="#46546d" stroke="#46546d"/>
<path d="M345 479 352 490 335 496 327 485" fill="#3f4c63" stroke="#3f4c63"/>
<path d="M321 473 327 485 310 491 303 478" fill="#3f4c63" stroke="#3f4c63"/>
<path d="M327 485 335 496 318 502 310 491" fill="#384358" stroke="#384358"/>
<path d="M352 490 359 499 343 506 335 496" fill="#384458" stroke="#384458"/>
<path d="M359 499 367 507 352 514 343 506" fill="#313b4e" stroke="#313b4e"/>
<path d="M335 496 343 506 327 512 318 502" fill="#313b4d" stroke="#313b4d"/>
<path d="M343 506 352 514 336 521 327 512" fill="#293242" stroke="#293242"/>
<path d="M367 507 376 513 360 521 352 514" fill="#2a3344" stroke="#2a3344"/>
<path d="M376 513 384 518 370 526 360 521" fill="#232b39" stroke="#232b39"/>
<path d="M352 514 360 521 345 527 336 521" fill="#212836" stroke="#212836"/>
<path d="M360 521 370 526 355 533 345 527" fill="#191e2a" stroke="#191e2a"/>
<path d="M384 518 393 522 379 530 370 526" fill="#1c222e" stroke="#1c222e"/>
<path d="M393 522 402 524 388 532 379 530" fill="#141922" stroke="#141922"/>
<path d="M370 526 379 530 365 536 355 533" fill="#10141c" stroke="#10141c"/>
<path d="M379 530 388 532 375 538 365 536" fill="#05060c" stroke="#05060c"/>
<path d="M402 524 411 525 398 532 388 532" fill="#0c0e16" stroke="#0c0e16"/>
<path d="M411 525 420 524 408 532 398 532" fill="#020206" stroke="#020206"/>
<path d="M388 532 398 532 385 539 375 538" fill="#020206" stroke="#020206"/>
<path d="M398 532 408 532 395 538 385 539" fill="#020206" stroke="#020206"/>
<path d="M420 524 429 522 417 529 408 532" fill="#020206" stroke="#020206"/>
<path d="M429 522 438 519 427 526 417 529" fill="#020206" stroke="#020206"/>
<path d="M408 532 417 529 405 536 395 538" fill="#020206" stroke="#020206"/>
<path d="M417 529 427 526 415 532 405 536" fill="#020206" stroke="#020206"/>
<path d="M503 106 496 98 486 89 494 97" fill="#7188ae" stroke="#7188ae"/>
<path d="M496 98 488 92 478 82 486 89" fill="#738ab1" stroke="#738ab1"/>
<path d="M494 97 486 89 477 80 485 88" fill="#7087ac" stroke="#7087ac"/>
<path d="M486 89 478 82 468 73 477 80" fill="#7189af" stroke="#7189af"/>
<path d="M488 92 480 87 470 77 478 82" fill="#7790b8" stroke="#7790b8"/>
<path d="M480 87 472 83 461 73 470 77" fill="#7d96c0" stroke="#7d96c0"/>
<path d="M478 82 470 77 459 68 468 73" fill="#738bb1" stroke="#738bb1"/>
<path d="M470 77 461 73 450 63 459 68" fill="#7a93bc" stroke="#7a93bc"/>
<path d="M472 83 463 81 452 70 461 73" fill="#819bc6" stroke="#819bc6"/>
<path d="M463 81 454 80 442 69 452 70" fill="#85a0cc" stroke="#85a0cc"/>
<path d="M461 73 452 70 440 61 450 63" fill="#7e98c2" stroke="#7e98c2"/>
<path d="M452 70 442 69 430 59 440 61" fill="#829dc8" stroke="#829dc8"/>
<path d="M454 80 444 80 432 69 442 69" fill="#88a4d1" stroke="#88a4d1"/>
<path d="M444 80 435 82 422 71 432 69" fill="#8ba7d5" stroke="#8ba7d5"/>
<path d="M442 69 432 69 420 59 430 59" fill="#86a1cd" stroke="#86a1cd"/>
<path d="M432 69 422 71 409 61 420 59" fill="#89a5d2" stroke="#89a5d2"/>
<path d="M435 82 425 85 412 74 422 71" fill="#8eabd9" stroke="#8eabd9"/>
<path d="M425 85 416 90 402 79 412 74" fill="#91aedc" stroke="#91aedc"/>
<path d="M422 71 412 74 399 64 409 61" fill="#8ba8d6" stroke="#8ba8d6"/>
<path d="M412 74 402 79 388 69 399 64" fill="#8eabd9" stroke="#8eabd9"/>
<path d="M416 90 406 96 392 85 402 79" fill="#94b2e0" stroke="#94b2e0"/>
<path d="M406 96 396 104 381 93 392 85" fill="#99b6e3" stroke="#99b6e3"/>
<path d="M402 79 392 85 377 76 388 69" fill="#91aedc" stroke="#91aedc"/>
<path d="M392 85 381 93 366 84 377 76" fill="#94b2df" stroke="#94b2df"/>
<path d="M396 104 387 113 372 103 381 93" fill="#9fbce7" stroke="#9fbce7"/>
<path d="M387 113 378 124 362 114 372 103" fill="#a6c3eb" stroke="#a6c3eb"/>
<path d="M381 93 372 103 356 94 366 84" fill="#99b6e2" stroke="#99b6e2"/>
<path d="M372 103 362 114 346 105 356 94" fill="#9ebbe6" stroke="#9ebbe6"/>
<path d="M378 124 369 136 352 127 362 114" fill="#b0ccf0" stroke="#b0ccf0"/>
<path d="M369 136 360 149 343 141 352 127" fill="#bad5f4" stroke="#bad5f4"/>
<path d="M362 114 352 127 336 118 346 105" fill="#a5c2e9" stroke="#a5c2e9"/>
<path d="M352 127 343 141 326 133 336 118" fill="#acc8ec" stroke="#acc8ec"/>
<path d="M360 149 353 164 335 156 343 141" fill="#c3ddf7" stroke="#c3ddf7"/>
<path d="M353 164 345 180 327 172 335 156" fill="#c8e1f8" stroke="#c8e1f8"/>
<path d="M343 141 335 156 317 148 326 133" fill="#b3cdee" stroke="#b3cdee"/>
<path d="M335 156 327 172 309 166 317 148" fill="#b6d0ee" stroke="#b6d0ee"/>
<path d="M345 180 338 197 320 190 327 172" fill="#c9e1f7" stroke="#c9e1f7"/>
<path d="M338 197 332 214 314 209 320 190" fill="#c4dcf2" stroke="#c4dcf2"/>
<path d="M327 172 320 190 302 184 309 166" fill="#b6d0ec" stroke="#b6d0ec"/>
<path d="M320 190 314 209 295 203 302 184" fill="#b2cbe8" stroke="#b2cbe8"/>
<path d="M332 214 327 233 308 228 314 209" fill="#bad3eb" stroke="#bad3eb"/>
<path d="M327 233 322 252 303 248 308 228" fill="#adc6e3" stroke="#adc6e3"/>
<path d="M314 209 308 228 289 223 295 203" fill="#aac3e1" stroke="#aac3e1"/>
<path d="M308 228 303 248 284 244 289 223" fill="#9fb9da" stroke="#9fb9da"/>
<path d="M322 252 319 272 299 269 303 248" fill="#a0b9d9" stroke="#a0b9d9"/>
<path d="M319 272 316 291 296 289 299 269" fill="#93accf" stroke="#93accf"/>
<path d="M303 248 299 269 280 265 284 244" fill="#94aed1" stroke="#94aed1"/>
<path d="M299 269 296 289 277 287 280 265" fill="#8aa3c8" stroke="#8aa3c8"/>
<path d="M277 287 275 309 253 307 255 285" fill="#7a92b9" stroke="#7a92b9"/>
<path d="M275 309 274 330 253 330 253 307" fill="#748bb0" stroke="#748bb0"/>
<path d="M255 285 253 307 232 306 234 282" fill="#748bb1" stroke="#748bb1"/>
<path d="M253 307 253 330 231 329 232 306" fill="#6e84a9" stroke="#6e84a9"/>
<path d="M274 330 274 352 253 352 253 330" fill="#6d84a8" stroke="#6d84a8"/>
<path d="M274 352 275 372 254 373 253 352" fill="#677da0" stroke="#677da0"/>
<path d="M253 330 253 352 232 351 231 329" fill="#687da1" stroke="#687da1"/>
<path d="M253 352 254 373 233 374 232 351" fill="#627698" stroke="#627698"/>
<path d="M275 372 278 393 257 394 254 373" fill="#617597" stroke="#617597"/>
<path d="M278 393 281 412 260 414 257 394" fill="#5b6e8d" stroke="#5b6e8d"/>
<path d="M254 373 257 394 236 395 233 374" fill="#5c6f8e" stroke="#5c6f8e"/>
<path d="M257 394 260 414 240 416 236 395" fill="#556784" stroke="#556784"/>
<path d="M281 412 285 430 265 433 260 414" fill="#556683" stroke="#556683"/>
<path d="M285 430 290 447 270 451 265 433" fill="#4e5e79" stroke="#4e5e79"/>
<path d="M260 414 265 433 244 435 240 416" fill="#4e5e7a" stroke="#4e5e7a"/>
<path d="M265 433 270 451 250 453 244 435" fill="#47566f" stroke="#47566f"/>
<path d="M290 447 296 463 276 467 270 451" fill="#47556e" stroke="#47556e"/>
<path d="M296 463 303 478 283 482 276 467" fill="#3f4c63" stroke="#3f4c63"/>
<path d="M270 451 276 467 257 470 250 453" fill="#404d64" stroke="#404d64"/>
<path d="M276 467 283 482 264 486 257 470" fill="#384358" stroke="#384358"/>
<path d="M303 478 310 491 291 496 283 482" fill="#384358" stroke="#384358"/>
<path d="M310 491 318 502 300 508 291 496" fill="#303a4c" stroke="#303a4c"/>
<path d="M283 482 291 496 272 500 264 486" fill="#30394b" stroke="#30394b"/>
<path d="M291 496 300 508 281 512 272 500" fill="#272f3f" stroke="#272f3f"/>
<path d="M318 502 327 512 309 518 300 508" fill="#283040" stroke="#283040"/>
<path d="M327 512 336 521 318 526 309 518" fill="#202633" stroke="#202633"/>
<path d="M300 508 309 518 291 522 281 512" fill="#1e2431" stroke="#1e2431"/>
<path d="M309 518 318 526 301 531 291 522" fill="#141822" stroke="#141822"/>
<path d="M336 521 345 527 328 533 318 526" fill="#171b26" stroke="#171b26"/>
<path d="M345 527 355 533 338 539 328 533" fill="#0c0f16" stroke="#0c0f16"/>
<path d="M318 526 328 533 311 538 301 531" fill="#080910" stroke="#080910"/>
<path d="M328 533 338 539 322 544 311 538" fill="#020206" stroke="#020206"/>
<path d="M355 533 365 536 349 542 338 539" fill="#020206" stroke="#020206"/>
<path d="M365 536 375 538 359 545 349 542" fill="#020206" stroke="#020206"/>
<path d="M338 539 349 542 333 547 322 544" fill="#020206" stroke="#020206"/>
<path d="M349 542 359 545 344 550 333 547" fill="#020206" stroke="#020206"/>
<path d="M375 538 385 539 370 545 359 545" fill="#020206" stroke="#020206"/>
<path d="M385 539 395 538 380 544 370 545" fill="#020206" stroke="#020206"/>
<path d="M359 545 370 545 355 550 344 550" fill="#020206" stroke="#020206"/>
<path d="M370 545 380 544 366 549 355 550" fill="#020206" stroke="#020206"/>
<path d="M395 538 405 536 391 542 380 544" fill="#020206" stroke="#020206"/>
<path d="M405 536 415 532 401 538 391 542" fill="#020206" stroke="#020206"/>
<path d="M380 544 391 542 377 546 366 549" fill="#020206" stroke="#020206"/>
<path d="M391 542 401 538 387 542 377 546" fill="#020206" stroke="#020206"/>
<path d="M468 73 459 68 447 59 456 65" fill="#7189af" stroke="#7189af"/>
<path d="M459 68 450 63 437 54 447 59" fill="#778fb7" stroke="#778fb7"/>
<path d="M456 65 447 59 434 51 444 57" fill="#6f86ac" stroke="#6f86ac"/>
<path d="M447 59 437 54 424 46 434 51" fill="#748bb2" stroke="#748bb2"/>
<path d="M450 63 440 61 427 51 437 54" fill="#7b95be" stroke="#7b95be"/>
<path d="M440 61 430 59 416 50 427 51" fill="#7f99c4" stroke="#7f99c4"/>
<path d="M437 54 427 51 413 43 424 46" fill="#7891b9" stroke="#7891b9"/>
<path d="M427 51 416 50 402 41 413 43" fill="#7c95bf" stroke="#7c95bf"/>
<path d="M430 59 420 59 406 49 416 50" fill="#839ec9" stroke="#839ec9"/>
<path d="M420 59 409 61 394 51 406 49" fill="#86a1ce" stroke="#86a1ce"/>
<path d="M416 50 406 49 391 41 402 41" fill="#7f9ac4" stroke="#7f9ac4"/>
<path d="M406 49 394 51 379 42 391 41" fill="#839dc9" stroke="#839dc9"/>
<path d="M409 61 399 64 383 54 394 51" fill="#89a5d2" stroke="#89a5d2"/>
<path d="M399 64 388 69 372 59 383 54" fill="#8ba8d5" stroke="#8ba8d5"/>
<path d="M394 51 383 54 368 46 379 42" fill="#85a1cd" stroke="#85a1cd"/>
<path d="M383 54 372 59 356 51 368 46" fill="#88a4d0" stroke="#88a4d0"/>
<path d="M388 69 377 76 361 66 372 59" fill="#8eaad8" stroke="#8eaad8"/>
<path d="M377 76 366 84 349 74 361 66" fill="#90addb" stroke="#90addb"/>
<path d="M372 59 361 66 344 57 356 51" fill="#8aa6d3" stroke="#8aa6d3"/>
<path d="M361 66 349 74 332 66 344 57" fill="#8ca8d6" stroke="#8ca8d6"/>
<path d="M366 84 356 94 338 84 349 74" fill="#93b0dd" stroke="#93b0dd"/>
<path d="M356 94 346 105 328 96 338 84" fill="#97b4e0" stroke="#97b4e0"/>
<path d="M349 74 338 84 321 76 332 66" fill="#8eaad8" stroke="#8eaad8"/>
<path d="M338 84 328 96 310 88 321 76" fill="#90add9" stroke="#90add9"/>
<path d="M346 105 336 118 317 110 328 96" fill="#9bb8e2" stroke="#9bb8e2"/>
<path d="M336 118 326 133 307 125 317 110" fill="#a0bbe3" stroke="#a0bbe3"/>
<path d="M328 96 317 110 299 102 310 88" fill="#92afda" stroke="#92afda"/>
<path d="M317 110 307 125 288 117 299 102" fill="#95b1db" stroke="#95b1db"/>
<path d="M326 133 317 148 298 141 307 125" fill="#a3bfe4" stroke="#a3bfe4"/>
<path d="M317 148 309 166 289 159 298 141" fill="#a5c0e3" stroke="#a5c0e3"/>
<path d="M307 125 298 141 279 134 288 117" fill="#96b2db" stroke="#96b2db"/>
<path d="M298 141 289 159 270 153 279 134" fill="#97b2d9" stroke="#97b2d9"/>
<path d="M309 166 302 184 281 178 289 159" fill="#a4bfe1" stroke="#a4bfe1"/>
<path d="M302 184 295 203 274 198 281 178" fill="#a0badd" stroke="#a0badd"/>
<path d="M289 159 281 178 261 172 270 153" fill="#95b0d7" stroke="#95b0d7"/>
<path d="M281 178 274 198 254 193 261 172" fill="#92acd3" stroke="#92acd3"/>
<path d="M295 203 289 223 268 219 274 198" fill="#9ab4d7" stroke="#9ab4d7"/>
<path d="M289 223 284 244 263 240 268 219" fill="#92acd0" stroke="#92acd0"/>
<path d="M274 198 268 219 247 214 254 193" fill="#8da7cd" stroke="#8da7cd"/>
<path d="M268 219 263 240 242 236 247 214" fill="#87a0c7" stroke="#87a0c7"/>
<path d="M284 244 280 265 259 262 263 240" fill="#8aa3c9" stroke="#8aa3c9"/>
<path d="M280 265 277 287 255 285 259 262" fill="#829ac1" stroke="#829ac1"/>
<path d="M263 240 259 262 238 259 242 236" fill="#8199c0" stroke="#8199c0"/>
<path d="M259 262 255 285 234 282 238 259" fill="#7a92b9" stroke="#7a92b9"/>
<path d="M234 282 232 306 210 304 212 280" fill="#6e84a9" stroke="#6e84a9"/>
<path d="M232 306 231 329 209 327 210 304" fill="#687ea1" stroke="#687ea1"/>
<path d="M212 280 210 304 188 302 191 277" fill="#687da0" stroke="#687da0"/>
<path d="M210 304 209 327 188 326 188 302" fill="#627697" stroke="#627697"/>
<path d="M231 329 232 351 210 351 209 327" fill="#627798" stroke="#627798"/>
<path d="M232 351 233 374 211 373 210 351" fill="#5c6f8f" stroke="#5c6f8f"/>
<path d="M209 327 210 351 188 350 188 326" fill="#5c6f8e" stroke="#5c6f8e"/>
<path d="M210 351 211 373 190 373 188 350" fill="#556785" stroke="#556785"/>
<path d="M233 374 236 395 214 396 211 373" fill="#566785" stroke="#566785"/>
<path d="M236 395 240 416 218 417 214 396" fill="#4f5f7a" stroke="#4f5f7a"/>
<path d="M211 373 214 396 193 395 190 373" fill="#4f5f7a" stroke="#4f5f7a"/>
<path d="M214 396 218 417 197 417 193 395" fill="#47566f" stroke="#47566f"/>
<path d="M240 416 244 435 223 437 218 417" fill="#47566f" stroke="#47566f"/>
<path d="M244 435 250 453 229 455 223 437" fill="#404d64" stroke="#404d64"/>
<path d="M218 417 223 437 202 437 197 417" fill="#3f4c63" stroke="#3f4c63"/>
<path d="M223 437 229 455 208 456 202 437" fill="#374257" stroke="#374257"/>
<path d="M250 453 257 470 236 473 229 455" fill="#384357" stroke="#384357"/>
<path d="M257 470 264 486 244 488 236 473" fill="#2f394b" stroke="#2f394b"/>
<path d="M229 455 236 473 216 474 208 456" fill="#2f384a" stroke="#2f384a"/>
<path d="M236 473 244 488 224 490 216 474" fill="#252d3c" stroke="#252d3c"/>
<path d="M264 486 272 500 252 503 244 488" fill="#262e3d" stroke="#262e3d"/>
<path d="M272 500 281 512 262 515 252 503" fill="#1d222f" stroke="#1d222f"/>
<path d="M244 488 252 503 233 504 224 490" fill="#1b212c" stroke="#1b212c"/>
<path d="M252 503 262 515 243 517 233 504" fill="#0f121b" stroke="#0f121b"/>
<path d="M281 512 291 522 272 526 262 515" fill="#12151e" stroke="#12151e"/>
<path d="M291 522 301 531 282 535 272 526" fill="#020206" stroke="#020206"/>
<path d="M262 515 272 526 253 528 243 517" fill="#020206" stroke="#020206"/>
<path d="M272 526 282 535 264 537 253 528" fill="#020206" stroke="#020206"/>
<path d="M301 531 311 538 293 542 282 535" fill="#020206" stroke="#020206"/>
<path d="M311 538 322 544 304 548 293 542" fill="#020206" stroke="#020206"/>
<path d="M282 535 293 542 275 544 264 537" fill="#020206" stroke="#020206"/>
<path d="M293 542 304 548 286 550 275 544" fill="#020206" stroke="#020206"/>
<path d="M322 544 333 547 315 551 304 548" fill="#020206" stroke="#020206"/>
<path d="M333 547 344 550 327 553 315 551" fill="#020206" stroke="#020206"/>
<path d="M304 548 315 551 298 554 286 550" fill="#020206" stroke="#020206"/>
<path d="M315 551 327 553 310 556 298 554" fill="#020206" stroke="#020206"/>
<path d="M344 550 355 550 338 554 327 553" fill="#020206" stroke="#020206"/>
<path d="M355 550 366 549 350 553 338 554" fill="#020206" stroke="#020206"/>
<path d="M327 553 338 554 322 556 310 556" fill="#020206" stroke="#020206"/>
<path d="M338 554 350 553 334 555 322 556" fill="#020206" stroke="#020206"/>
<path d="M424 46 413 43 398 35 409 39" fill="#748cb3" stroke="#748cb3"/>
<path d="M413 43 402 41 387 33 398 35" fill="#7891b9" stroke="#7891b9"/>
<path d="M409 39 398 35 383 29 394 32" fill="#7188ae" stroke="#7188ae"/>
<path d="M398 35 387 33 371 27 383 29" fill="#748cb2" stroke="#748cb2"/>
<path d="M402 41 391 41 375 33 387 33" fill="#7c95be" stroke="#7c95be"/>
<path d="M391 41 379 42 363 35 375 33" fill="#7f99c3" stroke="#7f99c3"/>
<path d="M387 33 375 33 359 27 371 27" fill="#7790b8" stroke="#7790b8"/>
<path d="M375 33 363 35 346 28 359 27" fill="#7a93bc" stroke="#7a93bc"/>
<path d="M379 42 368 46 351 38 363 35" fill="#819cc7" stroke="#819cc7"/>
<path d="M368 46 356 51 338 43 351 38" fill="#849fcb" stroke="#849fcb"/>
<path d="M363 35 351 38 334 31 346 28" fill="#7d97c0" stroke="#7d97c0"/>
<path d="M351 38 338 43 321 36 334 31" fill="#7f99c4" stroke="#7f99c4"/>
<path d="M356 51 344 57 326 50 338 43" fill="#86a1cd" stroke="#86a1cd"/>
<path d="M344 57 332 66 314 58 326 50" fill="#87a3d0" stroke="#87a3d0"/>
<path d="M338 43 326 50 308 43 321 36" fill="#819cc7" stroke="#819cc7"/>
<path d="M326 50 314 58 296 52 308 43" fill="#839ec9" stroke="#839ec9"/>
<path d="M332 66 321 76 302 69 314 58" fill="#89a5d1" stroke="#89a5d1"/>
<path d="M321 76 310 88 290 81 302 69" fill="#8aa6d3" stroke="#8aa6d3"/>
<path d="M314 58 302 69 283 63 296 52" fill="#849fca" stroke="#849fca"/>
<path d="M302 69 290 81 271 75 283 63" fill="#85a0cb" stroke="#85a0cb"/>
<path d="M310 88 299 102 279 95 290 81" fill="#8ba7d3" stroke="#8ba7d3"/>
<path d="M299 102 288 117 268 111 279 95" fill="#8ca8d3" stroke="#8ca8d3"/>
<path d="M290 81 279 95 260 89 271 75" fill="#85a0cb" stroke="#85a0cb"/>
<path d="M279 95 268 111 248 105 260 89" fill="#85a0cb" stroke="#85a0cb"/>
<path d="M288 117 279 134 258 128 268 111" fill="#8ca7d2" stroke="#8ca7d2"/>
<path d="M279 134 270 153 249 147 258 128" fill="#8ba6d0" stroke="#8ba6d0"/>
<path d="M268 111 258 128 238 123 248 105" fill="#849fc9" stroke="#849fc9"/>
<path d="M258 128 249 147 228 142 238 123" fill="#839dc7" stroke="#839dc7"/>
<path d="M270 153 261 172 240 167 249 147" fill="#8aa4cd" stroke="#8aa4cd"/>
<path d="M261 172 254 193 232 188 240 167" fill="#87a1c9" stroke="#87a1c9"/>
<path d="M249 147 240 167 219 162 228 142" fill="#819bc4" stroke="#819bc4"/>
<path d="M240 167 232 188 211 184 219 162" fill="#7e98c0" stroke="#7e98c0"/>
<path d="M254 193 247 214 226 210 232 188" fill="#839cc4" stroke="#839cc4"/>
<path d="M247 214 242 236 220 233 226 210" fill="#7e97be" stroke="#7e97be"/>
<path d="M232 188 226 210 204 206 211 184" fill="#7b93bb" stroke="#7b93bb"/>
<path d="M226 210 220 233 199 229 204 206" fill="#778fb5" stroke="#778fb5"/>
<path d="M242 236 238 259 215 256 220 233" fill="#7991b8" stroke="#7991b8"/>
<path d="M238 259 234 282 212 280 215 256" fill="#748bb1" stroke="#748bb1"/>
<path d="M220 233 215 256 194 253 199 229" fill="#7289af" stroke="#7289af"/>
<path d="M215 256 212 280 191 277 194 253" fill="#6d83a8" stroke="#6d83a8"/>
<path d="M191 277 188 302 166 299 168 275" fill="#617596" stroke="#617596"/>
<path d="M188 302 188 326 166 324 166 299" fill="#5b6e8d" stroke="#5b6e8d"/>
<path d="M168 275 166 299 145 297 148 272" fill="#596c8a" stroke="#596c8a"/>
<path d="M166 299 166 324 145 322 145 297" fill="#536481" stroke="#536481"/>
<path d="M188 326 188 350 166 348 166 324" fill="#556683" stroke="#556683"/>
<path d="M188 350 190 373 168 372 166 348" fill="#4e5e79" stroke="#4e5e79"/>
<path d="M166 324 166 348 145 346 145 322" fill="#4d5c77" stroke="#4d5c77"/>
<path d="M166 348 168 372 147 370 145 346" fill="#45546c" stroke="#45546c"/>
<path d="M190 373 193 395 171 394 168 372" fill="#47556e" stroke="#47556e"/>
<path d="M193 395 197 417 175 416 171 394" fill="#3f4c62" stroke="#3f4c62"/>
<path d="M168 372 171 394 150 393 147 370" fill="#3e4a61" stroke="#3e4a61"/>
<path d="M171 394 175 416 155 415 150 393" fill="#354054" stroke="#354054"/>
<path d="M197 417 202 437 181 437 175 416" fill="#374256" stroke="#374256"/>
<path d="M202 437 208 456 187 456 181 437" fill="#2e3749" stroke="#2e3749"/>
<path d="M175 416 181 437 161 436 155 415" fill="#2c3547" stroke="#2c3547"/>
<path d="M181 437 187 456 167 455 161 436" fill="#232a38" stroke="#232a38"/>
<path d="M208 456 216 474 195 474 187 456" fill="#242b3a" stroke="#242b3a"/>
<path d="M216 474 224 490 204 490 195 474" fill="#1a1f2a" stroke="#1a1f2a"/>
<path d="M187 456 195 474 175 473 167 455" fill="#181c27" stroke="#181c27"/>
<path d="M195 474 204 490 184 489 175 473" fill="#0a0c13" stroke="#0a0c13"/>
<path d="M224 490 233 504 213 505 204 490" fill="#0d0f17" stroke="#0d0f17"/>
<path d="M233 504 243 517 223 518 213 505" fill="#020206" stroke="#020206"/>
<path d="M204 490 213 505 194 504 184 489" fill="#020206" stroke="#020206"/>
<path d="M213 505 223 518 204 517 194 504" fill="#020206" stroke="#020206"/>
<path d="M243 517 253 528 234 529 223 518" fill="#020206" stroke="#020206"/>
<path d="M253 528 264 537 245 538 234 529" fill="#020206" stroke="#020206"/>
<path d="M223 518 234 529 215 528 204 517" fill="#020206" stroke="#020206"/>
<path d="M234 529 245 538 226 537 215 528" fill="#020206" stroke="#020206"/>
<path d="M264 537 275 544 256 545 245 538" fill="#020206" stroke="#020206"/>
<path d="M275 544 286 550 268 551 256 545" fill="#020206" stroke="#020206"/>
<path d="M245 538 256 545 238 545 226 537" fill="#020206" stroke="#020206"/>
<path d="M256 545 268 551 250 551 238 545" fill="#020206" stroke="#020206"/>
<path d="M286 550 298 554 280 555 268 551" fill="#020206" stroke="#020206"/>
<path d="M298 554 310 556 292 557 280 555" fill="#020206" stroke="#020206"/>
<path d="M268 551 280 555 263 554 250 551" fill="#020206" stroke="#020206"/>
<path d="M280 555 292 557 275 557 263 554" fill="#020206" stroke="#020206"/>
<path d="M394 32 383 29 366 24 378 28" fill="#6d84a9" stroke="#6d84a9"/>
<path d="M383 29 371 27 354 22 366 24" fill="#6f86ac" stroke="#6f86ac"/>
<path d="M378 28 366 24 349 20 361 24" fill="#6b81a5" stroke="#6b81a5"/>
<path d="M366 24 354 22 337 18 349 20" fill="#6b81a5" stroke="#6b81a5"/>
<path d="M371 27 359 27 341 21 354 22" fill="#728ab0" stroke="#728ab0"/>
<path d="M359 27 346 28 329 23 341 21" fill="#758db4" stroke="#758db4"/>
<path d="M354 22 341 21 324 18 337 18" fill="#6d83a8" stroke="#6d83a8"/>
<path d="M341 21 329 23 311 19 324 18" fill="#6f86ac" stroke="#6f86ac"/>
<path d="M346 28 334 31 316 26 329 23" fill="#7890b8" stroke="#7890b8"/>
<path d="M334 31 321 36 303 31 316 26" fill="#7a93bc" stroke="#7a93bc"/>
<path d="M329 23 316 26 298 22 311 19" fill="#7289af" stroke="#7289af"/>
<path d="M316 26 303 31 284 27 298 22" fill="#748cb3" stroke="#748cb3"/>
<path d="M321 36 308 43 290 38 303 31" fill="#7c95bf" stroke="#7c95bf"/>
<path d="M308 43 296 52 277 47 290 38" fill="#7d97c1" stroke="#7d97c1"/>
<path d="M303 31 290 38 271 34 284 27" fill="#768eb6" stroke="#768eb6"/>
<path d="M290 38 277 47 258 43 271 34" fill="#7790b8" stroke="#7790b8"/>
<path d="M296 52 283 63 264 57 277 47" fill="#7e98c2" stroke="#7e98c2"/>
<path d="M283 63 271 75 251 70 264 57" fill="#7f99c3" stroke="#7f99c3"/>
<path d="M277 47 264 57 245 54 258 43" fill="#7891b9" stroke="#7891b9"/>
<path d="M264 57 251 70 232 66 245 54" fill="#7991ba" stroke="#7991ba"/>
<path d="M271 75 260 89 239 84 251 70" fill="#7f99c3" stroke="#7f99c3"/>
<path d="M260 89 248 105 228 100 239 84" fill="#7e98c2" stroke="#7e98c2"/>
<path d="M251 70 239 84 220 81 232 66" fill="#7991b9" stroke="#7991b9"/>
<path d="M239 84 228 100 208 97 220 81" fill="#7890b9" stroke="#7890b9"/>
<path d="M248 105 238 123 217 118 228 100" fill="#7d97c1" stroke="#7d97c1"/>
<path d="M238 123 228 142 207 137 217 118" fill="#7c95be" stroke="#7c95be"/>
<path d="M228 100 217 118 197 115 208 97" fill="#778fb7" stroke="#778fb7"/>
<path d="M217 118 207 137 187 134 197 115" fill="#758db4" stroke="#758db4"/>
<path d="M228 142 219 162 198 158 207 137" fill="#7a93bb" stroke="#7a93bb"/>
<path d="M219 162 211 184 190 180 198 158" fill="#778fb7" stroke="#778fb7"/>
<path d="M207 137 198 158 177 155 187 134" fill="#738ab1" stroke="#738ab1"/>
<path d="M198 158 190 180 169 177 177 155" fill="#7087ac" stroke="#7087ac"/>
<path d="M211 184 204 206 183 203 190 180" fill="#748bb2" stroke="#748bb2"/>
<path d="M204 206 199 229 177 226 183 203" fill="#7086ac" stroke="#7086ac"/>
<path d="M190 180 183 203 162 200 169 177" fill="#6c83a7" stroke="#6c83a7"/>
<path d="M183 203 177 226 156 223 162 200" fill="#687ea1" stroke="#687ea1"/>
<path d="M199 229 194 253 172 250 177 226" fill="#6b81a5" stroke="#6b81a5"/>
<path d="M194 253 191 277 168 275 172 250" fill="#667b9e" stroke="#667b9e"/>
<path d="M177 226 172 250 151 248 156 223" fill="#64789a" stroke="#64789a"/>
<path d="M172 250 168 275 148 272 151 248" fill="#5f7293" stroke="#5f7293"/>
<path d="M148 272 145 297 125 295 127 270" fill="#51617e" stroke="#51617e"/>
<path d="M145 297 145 322 124 319 125 295" fill="#4a5a74" stroke="#4a5a74"/>
<path d="M127 270 125 295 106 292 108 268" fill="#47566f" stroke="#47566f"/>
<path d="M125 295 124 319 106 317 106 292" fill="#414e65" stroke="#414e65"/>
<path d="M145 322 145 346 125 344 124 319" fill="#435169" stroke="#435169"/>
<path d="M145 346 147 370 127 367 125 344" fill="#3c485e" stroke="#3c485e"/>
<path d="M124 319 125 344 106 341 106 317" fill="#39455a" stroke="#39455a"/>
<path d="M125 344 127 367 108 365 106 341" fill="#313b4e" stroke="#313b4e"/>
<path d="M147 370 150 393 130 390 127 367" fill="#343e52" stroke="#343e52"/>
<path d="M150 393 155 415 135 412 130 390" fill="#2b3344" stroke="#2b3344"/>
<path d="M127 367 130 390 112 387 108 365" fill="#283141" stroke="#283141"/>
<path d="M130 390 135 412 117 409 112 387" fill="#1e2532" stroke="#1e2532"/>
<path d="M155 415 161 436 141 433 135 412" fill="#212835" stroke="#212835"/>
<path d="M161 436 167 455 148 453 141 433" fill="#161a24" stroke="#161a24"/>
<path d="M135 412 141 433 122 430 117 409" fill="#131720" stroke="#131720"/>
<path d="M141 433 148 453 130 449 122 430" fill="#020206" stroke="#020206"/>
<path d="M167 455 175 473 156 471 148 453" fill="#07080e" stroke="#07080e"/>
<path d="M175 473 184 489 165 487 156 471" fill="#020206" stroke="#020206"/>
<path d="M148 453 156 471 138 467 130 449" fill="#020206" stroke="#020206"/>
<path d="M156 471 165 487 147 483 138 467" fill="#020206" stroke="#020206"/>
<path d="M184 489 194 504 174 502 165 487" fill="#020206" stroke="#020206"/>
<path d="M194 504 204 517 185 515 174 502" fill="#020206" stroke="#020206"/>
<path d="M165 487 174 502 157 498 147 483" fill="#020206" stroke="#020206"/>
<path d="M174 502 185 515 167 511 157 498" fill="#020206" stroke="#020206"/>
<path d="M204 517 215 528 196 526 185 515" fill="#020206" stroke="#020206"/>
<path d="M215 528 226 537 208 535 196 526" fill="#020206" stroke="#020206"/>
<path d="M185 515 196 526 178 522 167 511" fill="#020206" stroke="#020206"/>
<path d="M196 526 208 535 190 531 178 522" fill="#020206" stroke="#020206"/>
<path d="M226 537 238 545 220 543 208 535" fill="#020206" stroke="#020206"/>
<path d="M238 545 250 551 232 548 220 543" fill="#020206" stroke="#020206"/>
<path d="M208 535 220 543 202 539 190 531" fill="#020206" stroke="#020206"/>
<path d="M220 543 232 548 215 544 202 539" fill="#020206" stroke="#020206"/>
<path d="M250 551 263 554 245 552 232 548" fill="#020206" stroke="#020206"/>
<path d="M263 554 275 557 258 554 245 552" fill="#020206" stroke="#020206"/>
<path d="M232 548 245 552 228 548 215 544" fill="#020206" stroke="#020206"/>
<path d="M245 552 258 554 240 551 228 548" fill="#020206" stroke="#020206"/>
<path d="M337 18 324 18 306 16 319 16" fill="#677ca0" stroke="#677ca0"/>
<path d="M324 18 311 19 293 17 306 16" fill="#697fa2" stroke="#697fa2"/>
<path d="M319 16 306 16 288 16 301 16" fill="#627698" stroke="#627698"/>
<path d="M306 16 293 17 275 17 288 16" fill="#637798" stroke="#637798"/>
<path d="M311 19 298 22 279 20 293 17" fill="#6b81a6" stroke="#6b81a6"/>
<path d="M298 22 284 27 266 25 279 20" fill="#6d84a9" stroke="#6d84a9"/>
<path d="M293 17 279 20 261 20 275 17" fill="#64799b" stroke="#64799b"/>
<path d="M279 20 266 25 248 25 261 20" fill="#667b9d" stroke="#667b9d"/>
<path d="M284 27 271 34 252 32 266 25" fill="#6f86ab" stroke="#6f86ab"/>
<path d="M271 34 258 43 239 41 252 32" fill="#7087ad" stroke="#7087ad"/>
<path d="M266 25 252 32 234 32 248 25" fill="#677da0" stroke="#677da0"/>
<path d="M252 32 239 41 220 41 234 32" fill="#697ea2" stroke="#697ea2"/>
<path d="M258 43 245 54 225 52 239 41" fill="#7188af" stroke="#7188af"/>
<path d="M245 54 232 66 213 64 225 52" fill="#7289af" stroke="#7289af"/>
<path d="M239 41 225 52 207 51 220 41" fill="#697fa3" stroke="#697fa3"/>
<path d="M225 52 213 64 194 64 207 51" fill="#6a7fa3" stroke="#6a7fa3"/>
<path d="M232 66 220 81 200 79 213 64" fill="#7189af" stroke="#7189af"/>
<path d="M220 81 208 97 188 95 200 79" fill="#7188ae" stroke="#7188ae"/>
<path d="M213 64 200 79 182 78 194 64" fill="#697fa3" stroke="#697fa3"/>
<path d="M200 79 188 95 170 94 182 78" fill="#697ea2" stroke="#697ea2"/>
<path d="M208 97 197 115 177 113 188 95" fill="#6f86ac" stroke="#6f86ac"/>
<path d="M197 115 187 134 167 132 177 113" fill="#6e84a9" stroke="#6e84a9"/>
<path d="M188 95 177 113 158 112 170 94" fill="#677ca0" stroke="#677ca0"/>
<path d="M177 113 167 132 148 131 158 112" fill="#657a9d" stroke="#657a9d"/>
<path d="M187 134 177 155 157 153 167 132" fill="#6b81a5" stroke="#6b81a5"/>
<path d="M177 155 169 177 149 174 157 153" fill="#687ea1" stroke="#687ea1"/>
<path d="M167 132 157 153 138 151 148 131" fill="#637799" stroke="#637799"/>
<path d="M157 153 149 174 130 173 138 151" fill="#607394" stroke="#607394"/>
<path d="M169 177 162 200 142 197 149 174" fill="#65799c" stroke="#65799c"/>
<path d="M162 200 156 223 135 221 142 197" fill="#617495" stroke="#617495"/>
<path d="M149 174 142 197 123 196 130 173" fill="#5c6f8f" stroke="#5c6f8f"/>
<path d="M142 197 135 221 117 219 123 196" fill="#586a88" stroke="#586a88"/>
<path d="M156 223 151 248 131 245 135 221" fill="#5c6f8e" stroke="#5c6f8e"/>
<path d="M151 248 148 272 127 270 131 245" fill="#576886" stroke="#576886"/>
<path d="M135 221 131 245 112 243 117 219" fill="#536481" stroke="#536481"/>
<path d="M131 245 127 270 108 268 112 243" fill="#4d5d78" stroke="#4d5d78"/>
<path d="M108 268 106 292 90 290 92 266" fill="#3d4a60" stroke="#3d4a60"/>
<path d="M106 292 106 317 89 314 90 290" fill="#364155" stroke="#364155"/>
<path d="M92 266 90 290 76 288 78 264" fill="#333d50" stroke="#333d50"/>
<path d="M90 290 89 314 75 311 76 288" fill="#2b3444" stroke="#2b3444"/>
<path d="M106 317 106 341 90 338 89 314" fill="#2e384a" stroke="#2e384a"/>
<path d="M106 341 108 365 92 361 90 338" fill="#262d3c" stroke="#262d3c"/>
<path d="M89 314 90 338 76 335 75 311" fill="#222938" stroke="#222938"/>
<path d="M90 338 92 361 78 358 76 335" fill="#191e29" stroke="#191e29"/>
<path d="M108 365 112 387 96 384 92 361" fill="#1c212d" stroke="#1c212d"/>
<path d="M112 387 117 409 101 405 96 384" fill="#10131b" stroke="#10131b"/>
<path d="M92 361 96 384 81 380 78 358" fill="#0c0f16" stroke="#0c0f16"/>
<path d="M96 384 101 405 86 401 81 380" fill="#020206" stroke="#020206"/>
<path d="M117 409 122 430 106 426 101 405" fill="#020206" stroke="#020206"/>
<path d="M122 430 130 449 114 445 106 426" fill="#020206" stroke="#020206"/>
<path d="M101 405 106 426 92 421 86 401" fill="#020206" stroke="#020206"/>
<path d="M106 426 114 445 99 439 92 421" fill="#020206" stroke="#020206"/>
<path d="M130 449 138 467 122 462 114 445" fill="#020206" stroke="#020206"/>
<path d="M138 467 147 483 131 479 122 462" fill="#020206" stroke="#020206"/>
<path d="M114 445 122 462 107 457 99 439" fill="#020206" stroke="#020206"/>
<path d="M122 462 131 479 116 473 107 457" fill="#020206" stroke="#020206"/>
<path d="M147 483 157 498 141 493 131 479" fill="#020206" stroke="#020206"/>
<path d="M157 498 167 511 151 506 141 493" fill="#020206" stroke="#020206"/>
<path d="M131 479 141 493 126 487 116 473" fill="#020206" stroke="#020206"/>
<path d="M141 493 151 506 137 500 126 487" fill="#020206" stroke="#020206"/>
<path d="M167 511 178 522 163 517 151 506" fill="#020206" stroke="#020206"/>
<path d="M178 522 190 531 174 526 163 517" fill="#020206" stroke="#020206"/>
<path d="M151 506 163 517 148 510 137 500" fill="#020206" stroke="#020206"/>
<path d="M163 517 174 526 160 520 148 510" fill="#020206" stroke="#020206"/>
<path d="M190 531 202 539 187 534 174 526" fill="#020206" stroke="#020206"/>
<path d="M202 539 215 544 199 539 187 534" fill="#020206" stroke="#020206"/>
<path d="M174 526 187 534 172 527 160 520" fill="#020206" stroke="#020206"/>
<path d="M187 534 199 539 184 533 172 527" fill="#020206" stroke="#020206"/>
<path d="M275 17 261 20 245 21 258 18" fill="#5d7090" stroke="#5d7090"/>
<path d="M261 20 248 25 231 26 245 21" fill="#5e7192" stroke="#5e7192"/>
<path d="M258 18 245 21 229 24 242 21" fill="#566886" stroke="#566886"/>
<path d="M245 21 231 26 215 29 229 24" fill="#566886" stroke="#566886"/>
<path d="M248 25 234 32 217 33 231 26" fill="#5f7394" stroke="#5f7394"/>
<path d="M234 32 220 41 204 42 217 33" fill="#617495" stroke="#617495"/>
<path d="M231 26 217 33 201 36 215 29" fill="#576987" stroke="#576987"/>
<path d="M217 33 204 42 188 44 201 36" fill="#586a88" stroke="#586a88"/>
<path d="M220 41 207 51 190 52 204 42" fill="#617596" stroke="#617596"/>
<path d="M207 51 194 64 177 65 190 52" fill="#617597" stroke="#617597"/>
<path d="M204 42 190 52 175 55 188 44" fill="#586b89" stroke="#586b89"/>
<path d="M190 52 177 65 162 67 175 55" fill="#586b89" stroke="#586b89"/>
<path d="M194 64 182 78 165 79 177 65" fill="#617596" stroke="#617596"/>
<path d="M182 78 170 94 153 94 165 79" fill="#607495" stroke="#607495"/>
<path d="M177 65 165 79 149 81 162 67" fill="#586a88" stroke="#586a88"/>
<path d="M165 79 153 94 138 96 149 81" fill="#576987" stroke="#576987"/>
<path d="M170 94 158 112 142 112 153 94" fill="#5f7292" stroke="#5f7292"/>
<path d="M158 112 148 131 131 131 142 112" fill="#5d708f" stroke="#5d708f"/>
<path d="M153 94 142 112 126 113 138 96" fill="#556785" stroke="#556785"/>
<path d="M142 112 131 131 116 132 126 113" fill="#536481" stroke="#536481"/>
<path d="M148 131 138 151 122 151 131 131" fill="#5a6c8b" stroke="#5a6c8b"/>
<path d="M138 151 130 173 114 172 122 151" fill="#576886" stroke="#576886"/>
<path d="M131 131 122 151 107 152 116 132" fill="#51617d" stroke="#51617d"/>
<path d="M122 151 114 172 99 173 107 152" fill="#4d5d78" stroke="#4d5d78"/>
<path d="M130 173 123 196 106 195 114 172" fill="#536481" stroke="#536481"/>
<path d="M123 196 117 219 100 218 106 195" fill="#4e5e7a" stroke="#4e5e7a"/>
<path d="M114 172 106 195 91 194 99 173" fill="#495872" stroke="#495872"/>
<path d="M106 195 100 218 86 217 91 194" fill="#45536b" stroke="#45536b"/>
<path d="M117 219 112 243 96 242 100 218" fill="#495872" stroke="#495872"/>
<path d="M112 243 108 268 92 266 96 242" fill="#44516a" stroke="#44516a"/>
<path d="M100 218 96 242 81 240 86 217" fill="#3f4c63" stroke="#3f4c63"/>
<path d="M96 242 92 266 78 264 81 240" fill="#39455a" stroke="#39455a"/>
<path d="M78 264 76 288 63 286 65 262" fill="#272e3e" stroke="#272e3e"/>
<path d="M76 288 75 311 62 309 63 286" fill="#1e2431" stroke="#1e2431"/>
<path d="M65 262 63 286 52 283 54 261" fill="#191e29" stroke="#191e29"/>
<path d="M63 286 62 309 51 306 52 283" fill="#0f121a" stroke="#0f121a"/>
<path d="M75 311 76 335 63 331 62 309" fill="#141922" stroke="#141922"/>
<path d="M76 335 78 358 65 354 63 331" fill="#07090e" stroke="#07090e"/>
<path d="M62 309 63 331 52 328 51 306" fill="#020206" stroke="#020206"/>
<path d="M63 331 65 354 54 349 52 328" fill="#020206" stroke="#020206"/>
<path d="M78 358 81 380 69 375 65 354" fill="#020206" stroke="#020206"/>
<path d="M81 380 86 401 73 396 69 375" fill="#020206" stroke="#020206"/>
<path d="M65 354 69 375 58 370 54 349" fill="#020206" stroke="#020206"/>
<path d="M69 375 73 396 62 390 58 370" fill="#020206" stroke="#020206"/>
<path d="M86 401 92 421 79 415 73 396" fill="#020206" stroke="#020206"/>
<path d="M92 421 99 439 86 433 79 415" fill="#020206" stroke="#020206"/>
<path d="M73 396 79 415 68 409 62 390" fill="#020206" stroke="#020206"/>
<path d="M79 415 86 433 75 427 68 409" fill="#020206" stroke="#020206"/>
<path d="M99 439 107 457 94 450 86 433" fill="#020206" stroke="#020206"/>
<path d="M107 457 116 473 103 466 94 450" fill="#020206" stroke="#020206"/>
<path d="M86 433 94 450 83 443 75 427" fill="#020206" stroke="#020206"/>
<path d="M94 450 103 466 91 458 83 443" fill="#020206" stroke="#020206"/>
<path d="M116 473 126 487 113 480 103 466" fill="#020206" stroke="#020206"/>
<path d="M126 487 137 500 123 492 113 480" fill="#020206" stroke="#020206"/>
<path d="M103 466 113 480 101 472 91 458" fill="#020206" stroke="#020206"/>
<path d="M113 480 123 492 111 484 101 472" fill="#020206" stroke="#020206"/>
<path d="M137 500 148 510 134 503 123 492" fill="#020206" stroke="#020206"/>
<path d="M148 510 160 520 146 512 134 503" fill="#020206" stroke="#020206"/>
<path d="M123 492 134 503 122 494 111 484" fill="#020206" stroke="#020206"/>
<path d="M134 503 146 512 133 503 122 494" fill="#020206" stroke="#020206"/>
<path d="M215 29 201 36 187 40 200 34" fill="#4e5e7a" stroke="#4e5e7a"/>
<path d="M201 36 188 44 173 48 187 40" fill="#4f5f7a" stroke="#4f5f7a"/>
<path d="M200 34 187 40 173 46 186 39" fill="#46546d" stroke="#46546d"/>
<path d="M187 40 173 48 160 54 173 46" fill="#45536c" stroke="#45536c"/>
<path d="M188 44 175 55 160 59 173 48" fill="#4f5f7b" stroke="#4f5f7b"/>
<path d="M175 55 162 67 147 70 160 59" fill="#4f5f7b" stroke="#4f5f7b"/>
<path d="M173 48 160 59 147 64 160 54" fill="#45536c" stroke="#45536c"/>
<path d="M160 59 147 70 134 75 147 64" fill="#45536b" stroke="#45536b"/>
<path d="M162 67 149 81 135 84 147 70" fill="#4e5e7a" stroke="#4e5e7a"/>
<path d="M149 81 138 96 124 99 135 84" fill="#4d5d78" stroke="#4d5d78"/>
<path d="M147 70 135 84 122 88 134 75" fill="#44526a" stroke="#44526a"/>
<path d="M135 84 124 99 111 103 122 88" fill="#435068" stroke="#435068"/>
<path d="M138 96 126 113 113 116 124 99" fill="#4c5b76" stroke="#4c5b76"/>
<path d="M126 113 116 132 103 134 113 116" fill="#495872" stroke="#495872"/>
<path d="M124 99 113 116 100 119 111 103" fill="#414e65" stroke="#414e65"/>
<path d="M113 116 103 134 91 137 100 119" fill="#3e4b62" stroke="#3e4b62"/>
<path d="M116 132 107 152 93 153 103 134" fill="#46556e" stroke="#46556e"/>
<path d="M107 152 99 173 85 173 93 153" fill="#435168" stroke="#435168"/>
<path d="M103 134 93 153 82 155 91 137" fill="#3b475d" stroke="#3b475d"/>
<path d="M93 153 85 173 74 175 82 155" fill="#384358" stroke="#384358"/>
<path d="M99 173 91 194 78 195 85 173" fill="#3f4b62" stroke="#3f4b62"/>
<path d="M91 194 86 217 73 217 78 195" fill="#3a465b" stroke="#3a465b"/>
<path d="M85 173 78 195 67 196 74 175" fill="#333e51" stroke="#333e51"/>
<path d="M78 195 73 217 61 217 67 196" fill="#2e3749" stroke="#2e3749"/>
<path d="M86 217 81 240 68 240 73 217" fill="#343f52" stroke="#343f52"/>
<path d="M81 240 78 264 65 262 68 240" fill="#2e3749" stroke="#2e3749"/>
<path d="M73 217 68 240 57 239 61 217" fill="#283040" stroke="#283040"/>
<path d="M68 240 65 262 54 261 57 239" fill="#212836" stroke="#212836"/>
<path d="M54 261 52 283 44 282 45 260" fill="#08090f" stroke="#08090f"/>
<path d="M52 283 51 306 43 303 44 282" fill="#020206" stroke="#020206"/>
<path d="M45 260 44 282 37 280 38 259" fill="#020206" stroke="#020206"/>
<path d="M44 282 43 303 36 300 37 280" fill="#020206" stroke="#020206"/>
<path d="M51 306 52 328 44 324 43 303" fill="#020206" stroke="#020206"/>
<path d="M52 328 54 349 46 345 44 324" fill="#020206" stroke="#020206"/>
<path d="M43 303 44 324 37 321 36 300" fill="#020206" stroke="#020206"/>
<path d="M44 324 46 345 39 341 37 321" fill="#020206" stroke="#020206"/>
<path d="M54 349 58 370 49 365 46 345" fill="#020206" stroke="#020206"/>
<path d="M58 370 62 390 54 384 49 365" fill="#020206" stroke="#020206"/>
<path d="M46 345 49 365 42 360 39 341" fill="#020206" stroke="#020206"/>
<path d="M49 365 54 384 46 378 42 360" fill="#020206" stroke="#020206"/>
<path d="M62 390 68 409 59 403 54 384" fill="#020206" stroke="#020206"/>
<path d="M68 409 75 427 66 420 59 403" fill="#020206" stroke="#020206"/>
<path d="M54 384 59 403 52 396 46 378" fill="#020206" stroke="#020206"/>
<path d="M59 403 66 420 58 413 52 396" fill="#020206" stroke="#020206"/>
<path d="M75 427 83 443 73 436 66 420" fill="#020206" stroke="#020206"/>
<path d="M83 443 91 458 82 450 73 436" fill="#020206" stroke="#020206"/>
<path d="M66 420 73 436 66 428 58 413" fill="#020206" stroke="#020206"/>
<path d="M73 436 82 450 74 442 66 428" fill="#020206" stroke="#020206"/>
<path d="M91 458 101 472 91 464 82 450" fill="#020206" stroke="#020206"/>
<path d="M101 472 111 484 101 475 91 464" fill="#020206" stroke="#020206"/>
<path d="M82 450 91 464 83 455 74 442" fill="#020206" stroke="#020206"/>
<path d="M91 464 101 475 93 466 83 455" fill="#020206" stroke="#020206"/>
<path d="M160 54 147 64 136 69 148 60" fill="#3b475c" stroke="#3b475c"/>
<path d="M147 64 134 75 123 80 136 69" fill="#3a465b" stroke="#3a465b"/>
<path d="M148 60 136 69 125 76 137 67" fill="#313b4d" stroke="#313b4d"/>
<path d="M136 69 123 80 114 87 125 76" fill="#2f394b" stroke="#2f394b"/>
<path d="M134 75 122 88 112 93 123 80" fill="#39455a" stroke="#39455a"/>
<path d="M122 88 111 103 101 107 112 93" fill="#384358" stroke="#384358"/>
<path d="M123 80 112 93 102 99 114 87" fill="#2e3749" stroke="#2e3749"/>
<path d="M112 93 101 107 92 113 102 99" fill="#2c3546" stroke="#2c3546"/>
<path d="M111 103 100 119 90 123 101 107" fill="#364155" stroke="#364155"/>
<path d="M100 119 91 137 81 140 90 123" fill="#333e51" stroke="#333e51"/>
<path d="M101 107 90 123 82 128 92 113" fill="#2a3243" stroke="#2a3243"/>
<path d="M90 123 81 140 73 144 82 128" fill="#272f3e" stroke="#272f3e"/>
<path d="M91 137 82 155 72 158 81 140" fill="#303a4c" stroke="#303a4c"/>
<path d="M82 155 74 175 65 177 72 158" fill="#2c3546" stroke="#2c3546"/>
<path d="M81 140 72 158 64 161 73 144" fill="#232b39" stroke="#232b39"/>
<path d="M72 158 65 177 57 179 64 161" fill="#1f2532" stroke="#1f2532"/>
<path d="M74 175 67 196 58 197 65 177" fill="#272f3f" stroke="#272f3f"/>
<path d="M67 196 61 217 53 217 58 197" fill="#212836" stroke="#212836"/>
<path d="M65 177 58 197 51 199 57 179" fill="#1a1f2a" stroke="#1a1f2a"/>
<path d="M58 197 53 217 45 218 51 199" fill="#131720" stroke="#131720"/>
<path d="M61 217 57 239 48 239 53 217" fill="#1b202c" stroke="#1b202c"/>
<path d="M57 239 54 261 45 260 48 239" fill="#131620" stroke="#131620"/>
<path d="M53 217 48 239 41 239 45 218" fill="#0a0c13" stroke="#0a0c13"/>
<path d="M48 239 45 260 38 259 41 239" fill="#020206" stroke="#020206"/>
<path d="M38 259 37 280 31 278 33 258" fill="#020206" stroke="#020206"/>
<path d="M37 280 36 300 31 298 31 278" fill="#020206" stroke="#020206"/>
<path d="M33 258 31 278 27 276 29 258" fill="#020206" stroke="#020206"/>
<path d="M31 278 31 298 27 295 27 276" fill="#020206" stroke="#020206"/>
<path d="M36 300 37 321 32 317 31 298" fill="#020206" stroke="#020206"/>
<path d="M37 321 39 341 34 336 32 317" fill="#020206" stroke="#020206"/>
<path d="M31 298 32 317 28 313 27 295" fill="#020206" stroke="#020206"/>
<path d="M32 317 34 336 30 331 28 313" fill="#020206" stroke="#020206"/>
<path d="M39 341 42 360 37 354 34 336" fill="#020206" stroke="#020206"/>
<path d="M42 360 46 378 41 372 37 354" fill="#020206" stroke="#020206"/>
<path d="M34 336 37 354 32 349 30 331" fill="#020206" stroke="#020206"/>
<path d="M37 354 41 372 36 366 32 349" fill="#020206" stroke="#020206"/>
<path d="M46 378 52 396 46 389 41 372" fill="#020206" stroke="#020206"/>
<path d="M52 396 58 413 52 405 46 389" fill="#020206" stroke="#020206"/>
<path d="M41 372 46 389 41 382 36 366" fill="#020206" stroke="#020206"/>
<path d="M46 389 52 405 47 397 41 382" fill="#020206" stroke="#020206"/>
<path d="M58 413 66 428 59 420 52 405" fill="#020206" stroke="#020206"/>
<path d="M66 428 74 442 67 433 59 420" fill="#020206" stroke="#020206"/>
<path d="M52 405 59 420 54 411 47 397" fill="#020206" stroke="#020206"/>
<path d="M59 420 67 433 62 424 54 411" fill="#020206" stroke="#020206"/>
<path d="M114 87 102 99 94 106 105 94" fill="#212735" stroke="#212735"/>
<path d="M102 99 92 113 84 119 94 106" fill="#1f2532" stroke="#1f2532"/>
<path d="M105 94 94 106 87 113 98 102" fill="#11151e" stroke="#11151e"/>
<path d="M94 106 84 119 78 125 87 113" fill="#0b0d13" stroke="#0b0d13"/>
<path d="M92 113 82 128 74 133 84 119" fill="#1c222e" stroke="#1c222e"/>
<path d="M82 128 73 144 66 148 74 133" fill="#191e29" stroke="#191e29"/>
<path d="M84 119 74 133 68 139 78 125" fill="#080910" stroke="#080910"/>
<path d="M74 133 66 148 60 154 68 139" fill="#030409" stroke="#030409"/>
<path d="M73 144 64 161 58 165 66 148" fill="#151923" stroke="#151923"/>
<path d="M64 161 57 179 51 182 58 165" fill="#0f121b" stroke="#0f121b"/>
<path d="M66 148 58 165 52 169 60 154" fill="#020206" stroke="#020206"/>
<path d="M58 165 51 182 46 186 52 169" fill="#020206" stroke="#020206"/>
<path d="M57 179 51 199 45 201 51 182" fill="#08090f" stroke="#08090f"/>
<path d="M51 199 45 218 40 219 45 201" fill="#020206" stroke="#020206"/>
<path d="M51 182 45 201 40 203 46 186" fill="#020206" stroke="#020206"/>
<path d="M45 201 40 219 35 221 40 203" fill="#020206" stroke="#020206"/>
<path d="M45 218 41 239 36 239 40 219" fill="#020206" stroke="#020206"/>
<path d="M41 239 38 259 33 258 36 239" fill="#020206" stroke="#020206"/>
<path d="M40 219 36 239 31 239 35 221" fill="#020206" stroke="#020206"/>
<path d="M36 239 33 258 29 258 31 239" fill="#020206" stroke="#020206"/>
<path d="M29 258 27 276 25 275 26 257" fill="#020206" stroke="#020206"/>
<path d="M27 276 27 295 24 292 25 275" fill="#020206" stroke="#020206"/>
<path d="M26 257 25 275 24 273 25 257" fill="#020206" stroke="#020206"/>
<path d="M25 275 24 292 23 289 24 273" fill="#020206" stroke="#020206"/>
<path d="M27 295 28 313 25 309 24 292" fill="#020206" stroke="#020206"/>
<path d="M28 313 30 331 27 326 25 309" fill="#020206" stroke="#020206"/>
<path d="M24 292 25 309 24 305 23 289" fill="#020206" stroke="#020206"/>
<path d="M25 309 27 326 26 321 24 305" fill="#020206" stroke="#020206"/>
<path d="M30 331 32 349 29 342 27 326" fill="#020206" stroke="#020206"/>
<path d="M32 349 36 366 33 358 29 342" fill="#020206" stroke="#020206"/>
<path d="M27 326 29 342 28 336 26 321" fill="#020206" stroke="#020206"/>
<path d="M29 342 33 358 32 350 28 336" fill="#020206" stroke="#020206"/>
<path d="M60 154 52 169 48 175 55 160" fill="#020206" stroke="#020206"/>
<path d="M52 169 46 186 42 190 48 175" fill="#020206" stroke="#020206"/>
<path d="M55 160 48 175 45 181 52 167" fill="#020206" stroke="#020206"/>
<path d="M48 175 42 190 40 195 45 181" fill="#020206" stroke="#020206"/>
<path d="M46 186 40 203 36 206 42 190" fill="#020206" stroke="#020206"/>
<path d="M40 203 35 221 32 223 36 206" fill="#020206" stroke="#020206"/>
<path d="M42 190 36 206 35 210 40 195" fill="#020206" stroke="#020206"/>
<path d="M36 206 32 223 30 225 35 210" fill="#020206" stroke="#020206"/>
<path d="M35 221 31 239 28 240 32 223" fill="#020206" stroke="#020206"/>
<path d="M31 239 29 258 26 257 28 240" fill="#020206" stroke="#020206"/>
<path d="M32 223 28 240 27 241 30 225" fill="#020206" stroke="#020206"/>
<path d="M28 240 26 257 25 257 27 241" fill="#020206" stroke="#020206"/>
</g><use href="#fc" filter="url(#bl)"/></g>
<path d="M537.3 315.0L537.2 316.7 M537.2 316.7L537.1 318.4 M537.1 318.4L537.3 320.0 M537.3 320.0L537.5 321.5 M537.5 321.5L537.9 322.9 M537.9 322.9L538.3 324.1 M538.3 324.1L538.9 325.0 M538.9 325.0L539.5 325.7 M539.5 325.7L540.3 326.2 M540.3 326.2L541.0 326.4 M541.0 326.4L541.8 326.3 M541.8 326.3L542.6 326.0 M542.6 326.0L543.4 325.4 M543.4 325.4L544.2 324.6 M544.2 324.6L544.9 323.5 M544.9 323.5L545.6 322.3 M545.6 322.3L546.1 320.8 M546.1 320.8L546.6 319.3 M546.6 319.3L547.0 317.6 M547.0 317.6L547.3 316.0 M547.3 316.0L547.4 314.2 M547.4 314.2L547.4 312.6 M547.4 312.6L547.3 311.0 M547.3 311.0L547.1 309.5 M547.1 309.5L546.7 308.1 M546.7 308.1L546.3 306.9 M546.3 306.9L545.7 306.0 M545.7 306.0L545.1 305.3 M545.1 305.3L544.4 304.8 M544.4 304.8L543.6 304.5 M543.6 304.5L542.8 304.6 M542.8 304.6L542.0 304.9 M542.0 304.9L541.2 305.5 M541.2 305.5L540.4 306.3 M540.4 306.3L539.7 307.4 M539.7 307.4L539.0 308.6 M539.0 308.6L538.4 310.1 M538.4 310.1L537.9 311.6 M537.9 311.6L537.6 313.3 M537.6 313.3L537.3 315.0 M533.2 314.6L533.0 317.6 M533.0 317.6L533.0 320.5 M533.0 320.5L533.2 323.3 M533.2 323.3L533.6 326.0 M533.6 326.0L534.2 328.3 M534.2 328.3L535.1 330.3 M535.1 330.3L536.0 332.0 M536.0 332.0L537.2 333.2 M537.2 333.2L538.4 334.0 M538.4 334.0L539.7 334.3 M539.7 334.3L541.1 334.2 M541.1 334.2L542.5 333.6 M542.5 333.6L543.9 332.5 M543.9 332.5L545.2 331.1 M545.2 331.1L546.4 329.3 M546.4 329.3L547.6 327.1 M547.6 327.1L548.5 324.6 M548.5 324.6L549.4 322.0 M549.4 322.0L550.0 319.2 M550.0 319.2L550.5 316.3 M550.5 316.3L550.7 313.3 M550.7 313.3L550.7 310.4 M550.7 310.4L550.5 307.7 M550.5 307.7L550.1 305.1 M550.1 305.1L549.5 302.8 M549.5 302.8L548.8 300.7 M548.8 300.7L547.8 299.1 M547.8 299.1L546.7 297.8 M546.7 297.8L545.5 297.0 M545.5 297.0L544.2 296.6 M544.2 296.6L542.8 296.6 M542.8 296.6L541.4 297.2 M541.4 297.2L540.0 298.2 M540.0 298.2L538.7 299.6 M538.7 299.6L537.4 301.4 M537.4 301.4L536.2 303.6 M536.2 303.6L535.2 306.0 M535.2 306.0L534.4 308.7 M534.4 308.7L533.7 311.6 M533.7 311.6L533.2 314.6 M527.6 314.0L527.2 318.7 M527.2 318.7L527.2 323.3 M527.2 323.3L527.5 327.7 M527.5 327.7L528.2 331.7 M528.2 331.7L529.2 335.3 M529.2 335.3L530.5 338.5 M530.5 338.5L532.0 341.0 M532.0 341.0L533.7 342.9 M533.7 342.9L535.7 344.1 M535.7 344.1L537.7 344.5 M537.7 344.5L539.9 344.3 M539.9 344.3L542.0 343.4 M542.0 343.4L544.1 341.7 M544.1 341.7L546.2 339.5 M546.2 339.5L548.1 336.6 M548.1 336.6L549.8 333.3 M549.8 333.3L551.3 329.5 M551.3 329.5L552.6 325.4 M552.6 325.4L553.6 321.1 M553.6 321.1L554.3 316.6 M554.3 316.6L554.6 312.1 M554.6 312.1L554.7 307.7 M554.7 307.7L554.4 303.4 M554.4 303.4L553.8 299.4 M553.8 299.4L552.9 295.8 M552.9 295.8L551.7 292.7 M551.7 292.7L550.2 290.1 M550.2 290.1L548.5 288.1 M548.5 288.1L546.6 286.8 M546.6 286.8L544.6 286.1 M544.6 286.1L542.5 286.2 M542.5 286.2L540.3 287.0 M540.3 287.0L538.2 288.5 M538.2 288.5L536.1 290.7 M536.1 290.7L534.1 293.5 M534.1 293.5L532.3 296.9 M532.3 296.9L530.7 300.7 M530.7 300.7L529.4 304.9 M529.4 304.9L528.3 309.4 M528.3 309.4L527.6 314.0 M521.2 313.4L520.7 319.9 M520.7 319.9L520.6 326.2 M520.6 326.2L521.1 332.2 M521.1 332.2L522.0 337.8 M522.0 337.8L523.4 342.8 M523.4 342.8L525.2 347.1 M525.2 347.1L527.3 350.6 M527.3 350.6L529.7 353.1 M529.7 353.1L532.4 354.7 M532.4 354.7L535.3 355.4 M535.3 355.4L538.2 355.0 M538.2 355.0L541.2 353.7 M541.2 353.7L544.1 351.4 M544.1 351.4L546.9 348.3 M546.9 348.3L549.5 344.4 M549.5 344.4L551.8 339.8 M551.8 339.8L553.9 334.6 M553.9 334.6L555.6 329.0 M555.6 329.0L557.0 323.1 M557.0 323.1L557.9 316.9 M557.9 316.9L558.4 310.8 M558.4 310.8L558.5 304.7 M558.5 304.7L558.1 298.9 M558.1 298.9L557.3 293.4 M557.3 293.4L556.0 288.5 M556.0 288.5L554.4 284.2 M554.4 284.2L552.4 280.6 M552.4 280.6L550.1 277.8 M550.1 277.8L547.5 275.9 M547.5 275.9L544.7 275.0 M544.7 275.0L541.8 275.1 M541.8 275.1L538.8 276.1 M538.8 276.1L535.8 278.2 M535.8 278.2L532.9 281.2 M532.9 281.2L530.2 285.0 M530.2 285.0L527.7 289.7 M527.7 289.7L525.5 295.0 M525.5 295.0L523.6 300.8 M523.6 300.8L522.2 307.0 M522.2 307.0L521.2 313.4 M513.1 312.6L512.4 321.2 M512.4 321.2L512.3 329.6 M512.3 329.6L513.0 337.6 M513.0 337.6L514.2 345.0 M514.2 345.0L516.1 351.6 M516.1 351.6L518.5 357.2 M518.5 357.2L521.3 361.7 M521.3 361.7L524.6 365.1 M524.6 365.1L528.1 367.1 M528.1 367.1L531.9 367.9 M531.9 367.9L535.8 367.4 M535.8 367.4L539.7 365.6 M539.7 365.6L543.5 362.5 M543.5 362.5L547.2 358.4 M547.2 358.4L550.6 353.2 M550.6 353.2L553.7 347.2 M553.7 347.2L556.4 340.4 M556.4 340.4L558.6 333.0 M558.6 333.0L560.4 325.3 M560.4 325.3L561.6 317.3 M561.6 317.3L562.3 309.2 M562.3 309.2L562.4 301.2 M562.4 301.2L561.9 293.6 M561.9 293.6L560.8 286.5 M560.8 286.5L559.2 280.0 M559.2 280.0L557.1 274.2 M557.1 274.2L554.4 269.5 M554.4 269.5L551.4 265.8 M551.4 265.8L548.0 263.3 M548.0 263.3L544.3 262.0 M544.3 262.0L540.5 262.0 M540.5 262.0L536.5 263.4 M536.5 263.4L532.6 266.0 M532.6 266.0L528.7 269.9 M528.7 269.9L525.1 275.0 M525.1 275.0L521.7 281.1 M521.7 281.1L518.8 288.1 M518.8 288.1L516.3 295.8 M516.3 295.8L514.4 304.1 M514.4 304.1L513.1 312.6 M503.4 311.6L502.5 322.5 M502.5 322.5L502.5 333.2 M502.5 333.2L503.3 343.4 M503.3 343.4L504.9 352.9 M504.9 352.9L507.3 361.2 M507.3 361.2L510.4 368.3 M510.4 368.3L514.1 374.0 M514.1 374.0L518.2 378.2 M518.2 378.2L522.8 380.7 M522.8 380.7L527.6 381.6 M527.6 381.6L532.5 380.8 M532.5 380.8L537.4 378.5 M537.4 378.5L542.3 374.6 M542.3 374.6L546.9 369.3 M546.9 369.3L551.2 362.8 M551.2 362.8L555.1 355.1 M555.1 355.1L558.5 346.6 M558.5 346.6L561.3 337.3 M561.3 337.3L563.5 327.6 M563.5 327.6L565.1 317.5 M565.1 317.5L565.9 307.4 M565.9 307.4L566.0 297.4 M566.0 297.4L565.4 287.8 M565.4 287.8L564.1 278.8 M564.1 278.8L562.0 270.6 M562.0 270.6L559.4 263.4 M559.4 263.4L556.1 257.3 M556.1 257.3L552.2 252.6 M552.2 252.6L548.0 249.3 M548.0 249.3L543.3 247.6 M543.3 247.6L538.4 247.6 M538.4 247.6L533.4 249.2 M533.4 249.2L528.3 252.5 M528.3 252.5L523.4 257.4 M523.4 257.4L518.7 263.8 M518.7 263.8L514.5 271.5 M514.5 271.5L510.7 280.4 M510.7 280.4L507.5 290.2 M507.5 290.2L505.0 300.7 M505.0 300.7L503.4 311.6 M492.2 310.4L491.1 323.9 M491.1 323.9L491.1 337.1 M491.1 337.1L492.2 349.7 M492.2 349.7L494.2 361.2 M494.2 361.2L497.2 371.4 M497.2 371.4L501.0 380.1 M501.0 380.1L505.6 387.0 M505.6 387.0L510.8 392.0 M510.8 392.0L516.4 395.0 M516.4 395.0L522.3 396.0 M522.3 396.0L528.3 394.9 M528.3 394.9L534.4 391.9 M534.4 391.9L540.3 387.1 M540.3 387.1L545.9 380.6 M545.9 380.6L551.1 372.6 M551.1 372.6L555.8 363.3 M555.8 363.3L559.9 352.9 M559.9 352.9L563.4 341.7 M563.4 341.7L566.0 329.9 M566.0 329.9L567.9 317.7 M567.9 317.7L568.9 305.5 M568.9 305.5L569.1 293.4 M569.1 293.4L568.3 281.8 M568.3 281.8L566.7 270.8 M566.7 270.8L564.3 260.8 M564.3 260.8L561.0 252.0 M561.0 252.0L557.0 244.5 M557.0 244.5L552.4 238.7 M552.4 238.7L547.2 234.6 M547.2 234.6L541.5 232.4 M541.5 232.4L535.5 232.2 M535.5 232.2L529.3 234.1 M529.3 234.1L523.1 238.0 M523.1 238.0L517.0 243.9 M517.0 243.9L511.2 251.7 M511.2 251.7L505.9 261.1 M505.9 261.1L501.2 272.0 M501.2 272.0L497.3 284.1 M497.3 284.1L494.3 297.0 M494.3 297.0L492.2 310.4 M480.0 309.2L478.7 325.2 M478.7 325.2L478.8 340.9 M478.8 340.9L480.1 355.8 M480.1 355.8L482.6 369.5 M482.6 369.5L486.2 381.6 M486.2 381.6L490.8 391.8 M490.8 391.8L496.3 399.9 M496.3 399.9L502.5 405.7 M502.5 405.7L509.2 409.2 M509.2 409.2L516.2 410.2 M516.2 410.2L523.4 408.8 M523.4 408.8L530.6 405.2 M530.6 405.2L537.5 399.4 M537.5 399.4L544.2 391.7 M544.2 391.7L550.3 382.2 M550.3 382.2L555.8 371.3 M555.8 371.3L560.6 359.1 M560.6 359.1L564.6 345.9 M564.6 345.9L567.8 332.1 M567.8 332.1L570.0 317.8 M570.0 317.8L571.1 303.5 M571.1 303.5L571.3 289.4 M571.3 289.4L570.5 275.7 M570.5 275.7L568.6 262.8 M568.6 262.8L565.7 251.0 M565.7 251.0L561.9 240.6 M561.9 240.6L557.3 231.7 M557.3 231.7L551.8 224.8 M551.8 224.8L545.6 219.8 M545.6 219.8L538.9 217.1 M538.9 217.1L531.8 216.8 M531.8 216.8L524.4 218.8 M524.4 218.8L517.0 223.3 M517.0 223.3L509.7 230.2 M509.7 230.2L502.8 239.4 M502.8 239.4L496.5 250.6 M496.5 250.6L490.9 263.5 M490.9 263.5L486.1 277.9 M486.1 277.9L482.5 293.2 M482.5 293.2L480.0 309.2 M465.5 307.6L464.1 326.6 M464.1 326.6L464.2 345.0 M464.2 345.0L465.7 362.5 M465.7 362.5L468.8 378.6 M468.8 378.6L473.1 392.7 M473.1 392.7L478.7 404.6 M478.7 404.6L485.2 413.9 M485.2 413.9L492.5 420.6 M492.5 420.6L500.4 424.4 M500.4 424.4L508.7 425.4 M508.7 425.4L517.2 423.7 M517.2 423.7L525.5 419.3 M525.5 419.3L533.7 412.5 M533.7 412.5L541.4 403.5 M541.4 403.5L548.5 392.4 M548.5 392.4L554.9 379.7 M554.9 379.7L560.5 365.6 M560.5 365.6L565.1 350.3 M565.1 350.3L568.7 334.3 M568.7 334.3L571.2 317.9 M571.2 317.9L572.6 301.3 M572.6 301.3L572.8 284.9 M572.8 284.9L571.9 269.1 M571.9 269.1L569.7 254.2 M569.7 254.2L566.4 240.5 M566.4 240.5L562.0 228.3 M562.0 228.3L556.6 217.9 M556.6 217.9L550.2 209.7 M550.2 209.7L543.0 203.8 M543.0 203.8L535.1 200.4 M535.1 200.4L526.8 199.9 M526.8 199.9L518.1 202.1 M518.1 202.1L509.4 207.2 M509.4 207.2L500.8 215.2 M500.8 215.2L492.6 225.8 M492.6 225.8L485.1 238.8 M485.1 238.8L478.4 254.0 M478.4 254.0L472.8 270.8 M472.8 270.8L468.5 288.9 M468.5 288.9L465.5 307.6 M448.6 305.9L446.9 327.8 M446.9 327.8L447.1 349.3 M447.1 349.3L449.0 369.6 M449.0 369.6L452.6 388.2 M452.6 388.2L457.8 404.5 M457.8 404.5L464.4 418.1 M464.4 418.1L472.1 428.8 M472.1 428.8L480.7 436.3 M480.7 436.3L490.0 440.5 M490.0 440.5L499.6 441.5 M499.6 441.5L509.4 439.3 M509.4 439.3L519.1 434.1 M519.1 434.1L528.5 426.2 M528.5 426.2L537.4 415.7 M537.4 415.7L545.5 403.0 M545.5 403.0L552.9 388.4 M552.9 388.4L559.2 372.2 M559.2 372.2L564.5 354.8 M564.5 354.8L568.6 336.5 M568.6 336.5L571.5 317.8 M571.5 317.8L573.1 298.9 M573.1 298.9L573.3 280.2 M573.3 280.2L572.2 262.1 M572.2 262.1L569.8 245.1 M569.8 245.1L566.0 229.3 M566.0 229.3L560.9 215.3 M560.9 215.3L554.7 203.2 M554.7 203.2L547.4 193.6 M547.4 193.6L539.1 186.6 M539.1 186.6L530.0 182.6 M530.0 182.6L520.3 181.7 M520.3 181.7L510.2 184.1 M510.2 184.1L500.0 189.8 M500.0 189.8L490.0 198.8 M490.0 198.8L480.4 211.0 M480.4 211.0L471.5 226.0 M471.5 226.0L463.7 243.5 M463.7 243.5L457.1 263.0 M457.1 263.0L452.0 284.0 M452.0 284.0L448.6 305.9 M429.4 303.8L427.5 329.0 M427.5 329.0L427.7 353.6 M427.7 353.6L430.1 376.8 M430.1 376.8L434.4 398.0 M434.4 398.0L440.5 416.5 M440.5 416.5L448.1 432.0 M448.1 432.0L457.1 443.9 M457.1 443.9L467.1 452.3 M467.1 452.3L477.8 456.9 M477.8 456.9L488.9 457.8 M488.9 457.8L500.1 455.1 M500.1 455.1L511.2 449.0 M511.2 449.0L521.9 439.8 M521.9 439.8L532.0 427.9 M532.0 427.9L541.2 413.4 M541.2 413.4L549.5 396.9 M549.5 396.9L556.7 378.7 M571.3 255.0L568.5 235.7 M568.5 235.7L564.2 217.9 M564.2 217.9L558.5 201.9 M558.5 201.9L551.5 188.2 M551.5 188.2L543.1 177.1 M543.1 177.1L533.7 169.0 M533.7 169.0L523.3 164.2 M523.3 164.2L512.2 162.9 M512.2 162.9L500.6 165.4 M500.6 165.4L488.9 171.7 M488.9 171.7L477.3 181.7 M477.3 181.7L466.2 195.4 M466.2 195.4L456.0 212.4 M456.0 212.4L446.9 232.4 M446.9 232.4L439.2 254.7 M439.2 254.7L433.3 278.8 M433.3 278.8L429.4 303.8 M407.0 301.4L404.9 330.0 M404.9 330.0L405.3 358.0 M405.3 358.0L408.0 384.3 M408.0 384.3L413.1 408.2 M413.1 408.2L420.2 429.1 M420.2 429.1L429.2 446.4 M429.2 446.4L439.6 459.7 M439.6 459.7L451.1 468.8 M451.1 468.8L463.4 473.7 M463.4 473.7L476.0 474.5 M476.0 474.5L488.8 471.2 M488.8 471.2L501.4 464.2 M501.4 464.2L513.4 453.8 M513.4 453.8L524.8 440.2 M524.8 440.2L535.2 424.0 M560.9 205.9L554.4 188.0 M554.4 188.0L546.5 172.5 M546.5 172.5L537.1 159.9 M537.1 159.9L526.4 150.5 M526.4 150.5L514.6 144.8 M514.6 144.8L502.0 143.1 M502.0 143.1L488.8 145.6 M488.8 145.6L475.4 152.4 M475.4 152.4L462.1 163.5 M462.1 163.5L449.4 178.7 M449.4 178.7L437.5 197.9 M437.5 197.9L427.1 220.4 M427.1 220.4L418.3 245.7 M418.3 245.7L411.5 273.0 M411.5 273.0L407.0 301.4 M380.9 298.6L378.6 330.8 M378.6 330.8L379.1 362.3 M379.1 362.3L382.5 391.8 M382.5 391.8L388.4 418.6 M388.4 418.6L396.7 441.9 M396.7 441.9L407.1 461.1 M407.1 461.1L419.0 475.8 M419.0 475.8L432.2 485.7 M432.2 485.7L446.2 490.9 M446.2 490.9L460.6 491.4 M460.6 491.4L475.1 487.5 M475.1 487.5L489.2 479.5 M489.2 479.5L502.7 467.7 M502.7 467.7L515.4 452.5 M548.2 173.6L539.3 156.2 M539.3 156.2L528.8 141.9 M528.8 141.9L516.7 131.3 M516.7 131.3L503.5 124.6 M503.5 124.6L489.2 122.3 M489.2 122.3L474.3 124.7 M474.3 124.7L459.0 132.0 M459.0 132.0L443.9 144.1 M443.9 144.1L429.3 161.0 M429.3 161.0L415.8 182.3 M415.8 182.3L403.8 207.5 M403.8 207.5L393.8 235.9 M393.8 235.9L386.0 266.6 M386.0 266.6L380.9 298.6 M350.4 295.2L347.9 331.3 M347.9 331.3L348.6 366.3 M348.6 366.3L352.6 399.3 M352.6 399.3L359.5 429.1 M359.5 429.1L369.2 454.8 M369.2 454.8L381.1 475.9 M381.1 475.9L394.8 491.9 M394.8 491.9L409.8 502.6 M409.8 502.6L425.7 508.1 M425.7 508.1L442.0 508.3 M442.0 508.3L458.2 503.7 M458.2 503.7L474.1 494.6 M474.1 494.6L489.2 481.4 M529.2 139.5L517.5 123.5 M517.5 123.5L504.1 111.4 M504.1 111.4L489.2 103.7 M489.2 103.7L473.1 100.8 M473.1 100.8L456.3 103.0 M456.3 103.0L439.0 110.7 M439.0 110.7L421.9 123.8 M421.9 123.8L405.3 142.3 M405.3 142.3L390.0 165.7 M390.0 165.7L376.3 193.7 M376.3 193.7L364.9 225.2 M364.9 225.2L356.1 259.5 M356.1 259.5L350.4 295.2 M316.1 291.4L313.3 331.2 M313.3 331.2L314.4 369.8 M314.4 369.8L319.1 406.1 M319.1 406.1L327.1 438.7 M327.1 438.7L338.2 466.9 M338.2 466.9L351.8 489.8 M351.8 489.8L367.3 507.0 M367.3 507.0L384.3 518.5 M384.3 518.5L402.1 524.0 M402.1 524.0L420.3 524.0 M420.3 524.0L438.4 518.7 M438.4 518.7L456.0 508.5 M503.1 105.6L488.2 92.1 M488.2 92.1L471.6 83.3 M471.6 83.3L453.8 79.6 M453.8 79.6L434.9 81.7 M434.9 81.7L415.6 89.6 M415.6 89.6L396.4 103.6 M396.4 103.6L377.8 123.6 M377.8 123.6L360.5 149.1 M360.5 149.1L345.1 179.7 M345.1 179.7L332.2 214.4 M332.2 214.4L322.4 252.0 M322.4 252.0L316.1 291.4 M276.9 287.1L274.1 330.4 M274.1 330.4L275.5 372.4 M275.5 372.4L280.9 411.8 M280.9 411.8L290.2 447.2 M290.2 447.2L302.8 477.6 M302.8 477.6L318.2 502.2 M318.2 502.2L335.7 520.6 M335.7 520.6L354.7 532.7 M354.7 532.7L374.6 538.4 M374.6 538.4L394.8 538.0 M394.8 538.0L414.8 532.0 M484.5 88.3L468.1 73.4 M468.1 73.4L449.9 63.5 M449.9 63.5L430.1 59.2 M430.1 59.2L409.2 60.9 M409.2 60.9L387.8 69.1 M387.8 69.1L366.3 83.8 M366.3 83.8L345.6 105.1 M345.6 105.1L326.3 132.6 M326.3 132.6L309.1 165.6 M309.1 165.6L294.8 203.2 M294.8 203.2L283.9 244.2 M283.9 244.2L276.9 287.1 M234.4 282.3L231.4 328.6 M231.4 328.6L233.2 373.6 M233.2 373.6L239.5 415.7 M239.5 415.7L250.0 453.4 M250.0 453.4L264.1 485.7 M264.1 485.7L281.3 511.8 M281.3 511.8L300.7 531.2 M300.7 531.2L321.7 543.7 M321.7 543.7L343.5 549.5 M343.5 549.5L365.6 548.9 M365.6 548.9L387.4 542.3 M443.8 56.9L423.8 46.0 M423.8 46.0L402.2 41.0 M402.2 41.0L379.4 42.4 M379.4 42.4L355.9 50.7 M355.9 50.7L332.4 66.0 M332.4 66.0L309.6 88.4 M309.6 88.4L288.4 117.4 M288.4 117.4L269.5 152.5 M269.5 152.5L253.8 192.6 M253.8 192.6L241.9 236.4 M241.9 236.4L234.4 282.3 M190.5 277.3L187.6 325.8 M187.6 325.8L189.8 372.9 M189.8 372.9L196.9 416.9 M196.9 416.9L208.4 456.3 M208.4 456.3L224.0 489.9 M224.0 489.9L242.6 517.0 M242.6 517.0L263.7 537.1 M263.7 537.1L286.5 550.0 M286.5 550.0L310.0 555.9 M310.0 555.9L333.8 555.1 M394.1 32.5L370.9 26.9 M370.9 26.9L346.4 28.1 M346.4 28.1L321.1 36.3 M321.1 36.3L295.8 52.0 M295.8 52.0L271.2 75.0 M271.2 75.0L248.4 105.2 M248.4 105.2L228.1 141.7 M228.1 141.7L211.2 183.5 M211.2 183.5L198.5 229.3 M198.5 229.3L190.5 277.3 M147.6 272.4L144.7 321.8 M144.7 321.8L147.3 369.9 M147.3 369.9L155.0 414.8 M155.0 414.8L167.4 455.0 M167.4 455.0L184.0 489.3 M184.0 489.3L203.9 516.9 M203.9 516.9L226.2 537.4 M226.2 537.4L250.3 550.5 M250.3 550.5L275.2 556.5 M361.3 24.1L336.9 18.3 M336.9 18.3L311.0 19.2 M311.0 19.2L284.4 27.4 M284.4 27.4L257.7 43.1 M257.7 43.1L232.0 66.4 M232.0 66.4L208.0 97.0 M208.0 97.0L186.7 134.1 M186.7 134.1L169.0 176.7 M169.0 176.7L155.8 223.4 M155.8 223.4L147.6 272.4 M108.4 267.8L105.7 316.8 M105.7 316.8L108.5 364.5 M108.5 364.5L116.6 409.1 M116.6 409.1L129.5 449.1 M129.5 449.1L146.6 483.2 M146.6 483.2L167.1 510.8 M167.1 510.8L190.2 531.2 M190.2 531.2L214.9 544.4 M214.9 544.4L240.5 550.5 M301.5 16.1L275.0 17.0 M275.0 17.0L247.7 25.1 M247.7 25.1L220.4 40.6 M220.4 40.6L194.0 63.7 M194.0 63.7L169.6 94.0 M169.6 94.0L147.9 130.8 M147.9 130.8L130.0 173.0 M130.0 173.0L116.7 219.2 M116.7 219.2L108.4 267.8 M77.5 264.1L75.0 311.4 M75.0 311.4L77.9 357.6 M77.9 357.6L86.0 400.7 M86.0 400.7L99.0 439.5 M99.0 439.5L116.1 472.7 M116.1 472.7L136.6 499.6 M136.6 499.6L159.5 519.6 M159.5 519.6L184.2 532.7 M242.2 21.4L215.0 29.3 M215.0 29.3L187.9 44.4 M187.9 44.4L161.8 66.9 M161.8 66.9L137.6 96.2 M137.6 96.2L116.2 131.7 M116.2 131.7L98.6 172.5 M98.6 172.5L85.5 217.2 M85.5 217.2L77.5 264.1 M53.8 261.1L51.4 305.7 M51.4 305.7L54.3 349.2 M54.3 349.2L62.3 390.0 M62.3 390.0L74.8 426.7 M74.8 426.7L91.3 458.3 M91.3 458.3L111.2 483.9 M111.2 483.9L133.4 503.2 M185.8 39.3L159.6 53.8 M159.6 53.8L134.4 75.1 M134.4 75.1L111.1 102.9 M111.1 102.9L90.6 136.5 M90.6 136.5L73.8 175.0 M73.8 175.0L61.3 217.0 M61.3 217.0L53.8 261.1 M38.3 259.1L36.2 300.3 M36.2 300.3L38.9 340.6 M38.9 340.6L46.4 378.4 M46.4 378.4L58.3 412.5 M58.3 412.5L73.9 442.0 M73.9 442.0L92.6 466.2 M137.4 66.8L113.7 86.7 M113.7 86.7L91.8 112.7 M91.8 112.7L72.6 143.9 M72.6 143.9L56.9 179.5 M56.9 179.5L45.3 218.3 M45.3 218.3L38.3 259.1 M28.9 257.8L27.0 295.0 M27.0 295.0L29.5 331.4 M29.5 331.4L36.4 365.7 M36.4 365.7L47.2 396.7 M47.2 396.7L61.5 423.7 M97.5 101.6L77.5 125.2 M77.5 125.2L60.0 153.6 M60.0 153.6L45.7 185.8 M45.7 185.8L35.2 220.9 M35.2 220.9L28.9 257.8 M24.9 257.0L23.3 289.2 M23.3 289.2L25.5 320.6 M25.5 320.6L31.5 350.4 M51.9 166.9L39.5 194.8 M39.5 194.8L30.4 225.2 M30.4 225.2L24.9 257.0 M542.5 315.5L537.3 315.0 M542.5 315.5L537.2 316.7 M542.5 315.5L537.1 318.4 M542.5 315.5L537.3 320.0 M542.5 315.5L537.5 321.5 M542.5 315.5L537.9 322.9 M542.5 315.5L538.3 324.1 M542.5 315.5L538.9 325.0 M542.5 315.5L539.5 325.7 M542.5 315.5L540.3 326.2 M542.5 315.5L541.0 326.4 M542.5 315.5L541.8 326.3 M542.5 315.5L542.6 326.0 M542.5 315.5L543.4 325.4 M542.5 315.5L544.2 324.6 M542.5 315.5L544.9 323.5 M542.5 315.5L545.6 322.3 M542.5 315.5L546.1 320.8 M542.5 315.5L546.6 319.3 M542.5 315.5L547.0 317.6 M542.5 315.5L547.3 316.0 M542.5 315.5L547.4 314.2 M542.5 315.5L547.4 312.6 M542.5 315.5L547.3 311.0 M542.5 315.5L547.1 309.5 M542.5 315.5L546.7 308.1 M542.5 315.5L546.3 306.9 M542.5 315.5L545.7 306.0 M542.5 315.5L545.1 305.3 M542.5 315.5L544.4 304.8 M542.5 315.5L543.6 304.5 M542.5 315.5L542.8 304.6 M542.5 315.5L542.0 304.9 M542.5 315.5L541.2 305.5 M542.5 315.5L540.4 306.3 M542.5 315.5L539.7 307.4 M542.5 315.5L539.0 308.6 M542.5 315.5L538.4 310.1 M542.5 315.5L537.9 311.6 M542.5 315.5L537.6 313.3 M537.3 315.0L533.2 314.6 M537.2 316.7L533.0 317.6 M537.1 318.4L533.0 320.5 M537.3 320.0L533.2 323.3 M537.5 321.5L533.6 326.0 M537.9 322.9L534.2 328.3 M538.3 324.1L535.1 330.3 M538.9 325.0L536.0 332.0 M539.5 325.7L537.2 333.2 M540.3 326.2L538.4 334.0 M541.0 326.4L539.7 334.3 M541.8 326.3L541.1 334.2 M542.6 326.0L542.5 333.6 M543.4 325.4L543.9 332.5 M544.2 324.6L545.2 331.1 M544.9 323.5L546.4 329.3 M545.6 322.3L547.6 327.1 M546.1 320.8L548.5 324.6 M546.6 319.3L549.4 322.0 M547.0 317.6L550.0 319.2 M547.3 316.0L550.5 316.3 M547.4 314.2L550.7 313.3 M547.4 312.6L550.7 310.4 M547.3 311.0L550.5 307.7 M547.1 309.5L550.1 305.1 M546.7 308.1L549.5 302.8 M546.3 306.9L548.8 300.7 M545.7 306.0L547.8 299.1 M545.1 305.3L546.7 297.8 M544.4 304.8L545.5 297.0 M543.6 304.5L544.2 296.6 M542.8 304.6L542.8 296.6 M542.0 304.9L541.4 297.2 M541.2 305.5L540.0 298.2 M540.4 306.3L538.7 299.6 M539.7 307.4L537.4 301.4 M539.0 308.6L536.2 303.6 M538.4 310.1L535.2 306.0 M537.9 311.6L534.4 308.7 M537.6 313.3L533.7 311.6 M533.2 314.6L527.6 314.0 M533.0 317.6L527.2 318.7 M533.0 320.5L527.2 323.3 M533.2 323.3L527.5 327.7 M533.6 326.0L528.2 331.7 M534.2 328.3L529.2 335.3 M535.1 330.3L530.5 338.5 M536.0 332.0L532.0 341.0 M537.2 333.2L533.7 342.9 M538.4 334.0L535.7 344.1 M539.7 334.3L537.7 344.5 M541.1 334.2L539.9 344.3 M542.5 333.6L542.0 343.4 M543.9 332.5L544.1 341.7 M545.2 331.1L546.2 339.5 M546.4 329.3L548.1 336.6 M547.6 327.1L549.8 333.3 M548.5 324.6L551.3 329.5 M549.4 322.0L552.6 325.4 M550.0 319.2L553.6 321.1 M550.5 316.3L554.3 316.6 M550.7 313.3L554.6 312.1 M550.7 310.4L554.7 307.7 M550.5 307.7L554.4 303.4 M550.1 305.1L553.8 299.4 M549.5 302.8L552.9 295.8 M548.8 300.7L551.7 292.7 M547.8 299.1L550.2 290.1 M546.7 297.8L548.5 288.1 M545.5 297.0L546.6 286.8 M544.2 296.6L544.6 286.1 M542.8 296.6L542.5 286.2 M541.4 297.2L540.3 287.0 M540.0 298.2L538.2 288.5 M538.7 299.6L536.1 290.7 M537.4 301.4L534.1 293.5 M536.2 303.6L532.3 296.9 M535.2 306.0L530.7 300.7 M534.4 308.7L529.4 304.9 M533.7 311.6L528.3 309.4 M527.6 314.0L521.2 313.4 M527.2 318.7L520.7 319.9 M527.2 323.3L520.6 326.2 M527.5 327.7L521.1 332.2 M528.2 331.7L522.0 337.8 M529.2 335.3L523.4 342.8 M530.5 338.5L525.2 347.1 M532.0 341.0L527.3 350.6 M533.7 342.9L529.7 353.1 M535.7 344.1L532.4 354.7 M537.7 344.5L535.3 355.4 M539.9 344.3L538.2 355.0 M542.0 343.4L541.2 353.7 M544.1 341.7L544.1 351.4 M546.2 339.5L546.9 348.3 M548.1 336.6L549.5 344.4 M549.8 333.3L551.8 339.8 M551.3 329.5L553.9 334.6 M552.6 325.4L555.6 329.0 M553.6 321.1L557.0 323.1 M554.3 316.6L557.9 316.9 M554.6 312.1L558.4 310.8 M554.7 307.7L558.5 304.7 M554.4 303.4L558.1 298.9 M553.8 299.4L557.3 293.4 M552.9 295.8L556.0 288.5 M551.7 292.7L554.4 284.2 M550.2 290.1L552.4 280.6 M548.5 288.1L550.1 277.8 M546.6 286.8L547.5 275.9 M544.6 286.1L544.7 275.0 M542.5 286.2L541.8 275.1 M540.3 287.0L538.8 276.1 M538.2 288.5L535.8 278.2 M536.1 290.7L532.9 281.2 M534.1 293.5L530.2 285.0 M532.3 296.9L527.7 289.7 M530.7 300.7L525.5 295.0 M529.4 304.9L523.6 300.8 M528.3 309.4L522.2 307.0 M521.2 313.4L513.1 312.6 M520.7 319.9L512.4 321.2 M520.6 326.2L512.3 329.6 M521.1 332.2L513.0 337.6 M522.0 337.8L514.2 345.0 M523.4 342.8L516.1 351.6 M525.2 347.1L518.5 357.2 M527.3 350.6L521.3 361.7 M529.7 353.1L524.6 365.1 M532.4 354.7L528.1 367.1 M535.3 355.4L531.9 367.9 M538.2 355.0L535.8 367.4 M541.2 353.7L539.7 365.6 M544.1 351.4L543.5 362.5 M546.9 348.3L547.2 358.4 M549.5 344.4L550.6 353.2 M551.8 339.8L553.7 347.2 M553.9 334.6L556.4 340.4 M555.6 329.0L558.6 333.0 M557.0 323.1L560.4 325.3 M557.9 316.9L561.6 317.3 M558.4 310.8L562.3 309.2 M558.5 304.7L562.4 301.2 M558.1 298.9L561.9 293.6 M557.3 293.4L560.8 286.5 M556.0 288.5L559.2 280.0 M554.4 284.2L557.1 274.2 M552.4 280.6L554.4 269.5 M550.1 277.8L551.4 265.8 M547.5 275.9L548.0 263.3 M544.7 275.0L544.3 262.0 M541.8 275.1L540.5 262.0 M538.8 276.1L536.5 263.4 M535.8 278.2L532.6 266.0 M532.9 281.2L528.7 269.9 M530.2 285.0L525.1 275.0 M527.7 289.7L521.7 281.1 M525.5 295.0L518.8 288.1 M523.6 300.8L516.3 295.8 M522.2 307.0L514.4 304.1 M513.1 312.6L503.4 311.6 M512.4 321.2L502.5 322.5 M512.3 329.6L502.5 333.2 M513.0 337.6L503.3 343.4 M514.2 345.0L504.9 352.9 M516.1 351.6L507.3 361.2 M518.5 357.2L510.4 368.3 M521.3 361.7L514.1 374.0 M524.6 365.1L518.2 378.2 M528.1 367.1L522.8 380.7 M531.9 367.9L527.6 381.6 M535.8 367.4L532.5 380.8 M539.7 365.6L537.4 378.5 M543.5 362.5L542.3 374.6 M547.2 358.4L546.9 369.3 M550.6 353.2L551.2 362.8 M553.7 347.2L555.1 355.1 M556.4 340.4L558.5 346.6 M558.6 333.0L561.3 337.3 M560.4 325.3L563.5 327.6 M561.6 317.3L565.1 317.5 M562.3 309.2L565.9 307.4 M562.4 301.2L566.0 297.4 M561.9 293.6L565.4 287.8 M560.8 286.5L564.1 278.8 M559.2 280.0L562.0 270.6 M557.1 274.2L559.4 263.4 M554.4 269.5L556.1 257.3 M551.4 265.8L552.2 252.6 M548.0 263.3L548.0 249.3 M544.3 262.0L543.3 247.6 M540.5 262.0L538.4 247.6 M536.5 263.4L533.4 249.2 M532.6 266.0L528.3 252.5 M528.7 269.9L523.4 257.4 M525.1 275.0L518.7 263.8 M521.7 281.1L514.5 271.5 M518.8 288.1L510.7 280.4 M516.3 295.8L507.5 290.2 M514.4 304.1L505.0 300.7 M503.4 311.6L492.2 310.4 M502.5 322.5L491.1 323.9 M502.5 333.2L491.1 337.1 M503.3 343.4L492.2 349.7 M504.9 352.9L494.2 361.2 M507.3 361.2L497.2 371.4 M510.4 368.3L501.0 380.1 M514.1 374.0L505.6 387.0 M518.2 378.2L510.8 392.0 M522.8 380.7L516.4 395.0 M527.6 381.6L522.3 396.0 M532.5 380.8L528.3 394.9 M537.4 378.5L534.4 391.9 M542.3 374.6L540.3 387.1 M546.9 369.3L545.9 380.6 M551.2 362.8L551.1 372.6 M555.1 355.1L555.8 363.3 M558.5 346.6L559.9 352.9 M561.3 337.3L563.4 341.7 M563.5 327.6L566.0 329.9 M565.1 317.5L567.9 317.7 M565.9 307.4L568.9 305.5 M566.0 297.4L569.1 293.4 M565.4 287.8L568.3 281.8 M564.1 278.8L566.7 270.8 M562.0 270.6L564.3 260.8 M559.4 263.4L561.0 252.0 M556.1 257.3L557.0 244.5 M552.2 252.6L552.4 238.7 M548.0 249.3L547.2 234.6 M543.3 247.6L541.5 232.4 M538.4 247.6L535.5 232.2 M533.4 249.2L529.3 234.1 M528.3 252.5L523.1 238.0 M523.4 257.4L517.0 243.9 M518.7 263.8L511.2 251.7 M514.5 271.5L505.9 261.1 M510.7 280.4L501.2 272.0 M507.5 290.2L497.3 284.1 M505.0 300.7L494.3 297.0 M492.2 310.4L480.0 309.2 M491.1 323.9L478.7 325.2 M491.1 337.1L478.8 340.9 M492.2 349.7L480.1 355.8 M494.2 361.2L482.6 369.5 M497.2 371.4L486.2 381.6 M501.0 380.1L490.8 391.8 M505.6 387.0L496.3 399.9 M510.8 392.0L502.5 405.7 M516.4 395.0L509.2 409.2 M522.3 396.0L516.2 410.2 M528.3 394.9L523.4 408.8 M534.4 391.9L530.6 405.2 M540.3 387.1L537.5 399.4 M545.9 380.6L544.2 391.7 M551.1 372.6L550.3 382.2 M555.8 363.3L555.8 371.3 M559.9 352.9L560.6 359.1 M563.4 341.7L564.6 345.9 M566.0 329.9L567.8 332.1 M567.9 317.7L570.0 317.8 M568.9 305.5L571.1 303.5 M569.1 293.4L571.3 289.4 M568.3 281.8L570.5 275.7 M566.7 270.8L568.6 262.8 M564.3 260.8L565.7 251.0 M561.0 252.0L561.9 240.6 M557.0 244.5L557.3 231.7 M552.4 238.7L551.8 224.8 M547.2 234.6L545.6 219.8 M541.5 232.4L538.9 217.1 M535.5 232.2L531.8 216.8 M529.3 234.1L524.4 218.8 M523.1 238.0L517.0 223.3 M517.0 243.9L509.7 230.2 M511.2 251.7L502.8 239.4 M505.9 261.1L496.5 250.6 M501.2 272.0L490.9 263.5 M497.3 284.1L486.1 277.9 M494.3 297.0L482.5 293.2 M480.0 309.2L465.5 307.6 M478.7 325.2L464.1 326.6 M478.8 340.9L464.2 345.0 M480.1 355.8L465.7 362.5 M482.6 369.5L468.8 378.6 M486.2 381.6L473.1 392.7 M490.8 391.8L478.7 404.6 M496.3 399.9L485.2 413.9 M502.5 405.7L492.5 420.6 M509.2 409.2L500.4 424.4 M516.2 410.2L508.7 425.4 M523.4 408.8L517.2 423.7 M530.6 405.2L525.5 419.3 M537.5 399.4L533.7 412.5 M544.2 391.7L541.4 403.5 M550.3 382.2L548.5 392.4 M555.8 371.3L554.9 379.7 M560.6 359.1L560.5 365.6 M564.6 345.9L565.1 350.3 M567.8 332.1L568.7 334.3 M570.0 317.8L571.2 317.9 M571.1 303.5L572.6 301.3 M571.3 289.4L572.8 284.9 M570.5 275.7L571.9 269.1 M568.6 262.8L569.7 254.2 M565.7 251.0L566.4 240.5 M561.9 240.6L562.0 228.3 M557.3 231.7L556.6 217.9 M551.8 224.8L550.2 209.7 M545.6 219.8L543.0 203.8 M538.9 217.1L535.1 200.4 M531.8 216.8L526.8 199.9 M524.4 218.8L518.1 202.1 M517.0 223.3L509.4 207.2 M509.7 230.2L500.8 215.2 M502.8 239.4L492.6 225.8 M496.5 250.6L485.1 238.8 M490.9 263.5L478.4 254.0 M486.1 277.9L472.8 270.8 M482.5 293.2L468.5 288.9 M465.5 307.6L448.6 305.9 M464.1 326.6L446.9 327.8 M464.2 345.0L447.1 349.3 M465.7 362.5L449.0 369.6 M468.8 378.6L452.6 388.2 M473.1 392.7L457.8 404.5 M478.7 404.6L464.4 418.1 M485.2 413.9L472.1 428.8 M492.5 420.6L480.7 436.3 M500.4 424.4L490.0 440.5 M508.7 425.4L499.6 441.5 M517.2 423.7L509.4 439.3 M525.5 419.3L519.1 434.1 M533.7 412.5L528.5 426.2 M541.4 403.5L537.4 415.7 M548.5 392.4L545.5 403.0 M554.9 379.7L552.9 388.4 M560.5 365.6L559.2 372.2 M565.1 350.3L564.5 354.8 M568.7 334.3L568.6 336.5 M571.2 317.9L571.5 317.8 M572.6 301.3L573.1 298.9 M572.8 284.9L573.3 280.2 M571.9 269.1L572.2 262.1 M569.7 254.2L569.8 245.1 M566.4 240.5L566.0 229.3 M562.0 228.3L560.9 215.3 M556.6 217.9L554.7 203.2 M550.2 209.7L547.4 193.6 M543.0 203.8L539.1 186.6 M535.1 200.4L530.0 182.6 M526.8 199.9L520.3 181.7 M518.1 202.1L510.2 184.1 M509.4 207.2L500.0 189.8 M500.8 215.2L490.0 198.8 M492.6 225.8L480.4 211.0 M485.1 238.8L471.5 226.0 M478.4 254.0L463.7 243.5 M472.8 270.8L457.1 263.0 M468.5 288.9L452.0 284.0 M448.6 305.9L429.4 303.8 M446.9 327.8L427.5 329.0 M447.1 349.3L427.7 353.6 M449.0 369.6L430.1 376.8 M452.6 388.2L434.4 398.0 M457.8 404.5L440.5 416.5 M464.4 418.1L448.1 432.0 M472.1 428.8L457.1 443.9 M480.7 436.3L467.1 452.3 M490.0 440.5L477.8 456.9 M499.6 441.5L488.9 457.8 M509.4 439.3L500.1 455.1 M519.1 434.1L511.2 449.0 M528.5 426.2L521.9 439.8 M537.4 415.7L532.0 427.9 M545.5 403.0L541.2 413.4 M552.9 388.4L549.5 396.9 M559.2 372.2L556.7 378.7 M572.2 262.1L571.3 255.0 M569.8 245.1L568.5 235.7 M566.0 229.3L564.2 217.9 M560.9 215.3L558.5 201.9 M554.7 203.2L551.5 188.2 M547.4 193.6L543.1 177.1 M539.1 186.6L533.7 169.0 M530.0 182.6L523.3 164.2 M520.3 181.7L512.2 162.9 M510.2 184.1L500.6 165.4 M500.0 189.8L488.9 171.7 M490.0 198.8L477.3 181.7 M480.4 211.0L466.2 195.4 M471.5 226.0L456.0 212.4 M463.7 243.5L446.9 232.4 M457.1 263.0L439.2 254.7 M452.0 284.0L433.3 278.8 M429.4 303.8L407.0 301.4 M427.5 329.0L404.9 330.0 M427.7 353.6L405.3 358.0 M430.1 376.8L408.0 384.3 M434.4 398.0L413.1 408.2 M440.5 416.5L420.2 429.1 M448.1 432.0L429.2 446.4 M457.1 443.9L439.6 459.7 M467.1 452.3L451.1 468.8 M477.8 456.9L463.4 473.7 M488.9 457.8L476.0 474.5 M500.1 455.1L488.8 471.2 M511.2 449.0L501.4 464.2 M521.9 439.8L513.4 453.8 M532.0 427.9L524.8 440.2 M541.2 413.4L535.2 424.0 M564.2 217.9L560.9 205.9 M558.5 201.9L554.4 188.0 M551.5 188.2L546.5 172.5 M543.1 177.1L537.1 159.9 M533.7 169.0L526.4 150.5 M523.3 164.2L514.6 144.8 M512.2 162.9L502.0 143.1 M500.6 165.4L488.8 145.6 M488.9 171.7L475.4 152.4 M477.3 181.7L462.1 163.5 M466.2 195.4L449.4 178.7 M456.0 212.4L437.5 197.9 M446.9 232.4L427.1 220.4 M439.2 254.7L418.3 245.7 M433.3 278.8L411.5 273.0 M407.0 301.4L380.9 298.6 M404.9 330.0L378.6 330.8 M405.3 358.0L379.1 362.3 M408.0 384.3L382.5 391.8 M413.1 408.2L388.4 418.6 M420.2 429.1L396.7 441.9 M429.2 446.4L407.1 461.1 M439.6 459.7L419.0 475.8 M451.1 468.8L432.2 485.7 M463.4 473.7L446.2 490.9 M476.0 474.5L460.6 491.4 M488.8 471.2L475.1 487.5 M501.4 464.2L489.2 479.5 M513.4 453.8L502.7 467.7 M524.8 440.2L515.4 452.5 M554.4 188.0L548.2 173.6 M546.5 172.5L539.3 156.2 M537.1 159.9L528.8 141.9 M526.4 150.5L516.7 131.3 M514.6 144.8L503.5 124.6 M502.0 143.1L489.2 122.3 M488.8 145.6L474.3 124.7 M475.4 152.4L459.0 132.0 M462.1 163.5L443.9 144.1 M449.4 178.7L429.3 161.0 M437.5 197.9L415.8 182.3 M427.1 220.4L403.8 207.5 M418.3 245.7L393.8 235.9 M411.5 273.0L386.0 266.6 M380.9 298.6L350.4 295.2 M378.6 330.8L347.9 331.3 M379.1 362.3L348.6 366.3 M382.5 391.8L352.6 399.3 M388.4 418.6L359.5 429.1 M396.7 441.9L369.2 454.8 M407.1 461.1L381.1 475.9 M419.0 475.8L394.8 491.9 M432.2 485.7L409.8 502.6 M446.2 490.9L425.7 508.1 M460.6 491.4L442.0 508.3 M475.1 487.5L458.2 503.7 M489.2 479.5L474.1 494.6 M502.7 467.7L489.2 481.4 M539.3 156.2L529.2 139.5 M528.8 141.9L517.5 123.5 M516.7 131.3L504.1 111.4 M503.5 124.6L489.2 103.7 M489.2 122.3L473.1 100.8 M474.3 124.7L456.3 103.0 M459.0 132.0L439.0 110.7 M443.9 144.1L421.9 123.8 M429.3 161.0L405.3 142.3 M415.8 182.3L390.0 165.7 M403.8 207.5L376.3 193.7 M393.8 235.9L364.9 225.2 M386.0 266.6L356.1 259.5 M350.4 295.2L316.1 291.4 M347.9 331.3L313.3 331.2 M348.6 366.3L314.4 369.8 M352.6 399.3L319.1 406.1 M359.5 429.1L327.1 438.7 M369.2 454.8L338.2 466.9 M381.1 475.9L351.8 489.8 M394.8 491.9L367.3 507.0 M409.8 502.6L384.3 518.5 M425.7 508.1L402.1 524.0 M442.0 508.3L420.3 524.0 M458.2 503.7L438.4 518.7 M474.1 494.6L456.0 508.5 M517.5 123.5L503.1 105.6 M504.1 111.4L488.2 92.1 M489.2 103.7L471.6 83.3 M473.1 100.8L453.8 79.6 M456.3 103.0L434.9 81.7 M439.0 110.7L415.6 89.6 M421.9 123.8L396.4 103.6 M405.3 142.3L377.8 123.6 M390.0 165.7L360.5 149.1 M376.3 193.7L345.1 179.7 M364.9 225.2L332.2 214.4 M356.1 259.5L322.4 252.0 M316.1 291.4L276.9 287.1 M313.3 331.2L274.1 330.4 M314.4 369.8L275.5 372.4 M319.1 406.1L280.9 411.8 M327.1 438.7L290.2 447.2 M338.2 466.9L302.8 477.6 M351.8 489.8L318.2 502.2 M367.3 507.0L335.7 520.6 M384.3 518.5L354.7 532.7 M402.1 524.0L374.6 538.4 M420.3 524.0L394.8 538.0 M438.4 518.7L414.8 532.0 M503.1 105.6L484.5 88.3 M488.2 92.1L468.1 73.4 M471.6 83.3L449.9 63.5 M453.8 79.6L430.1 59.2 M434.9 81.7L409.2 60.9 M415.6 89.6L387.8 69.1 M396.4 103.6L366.3 83.8 M377.8 123.6L345.6 105.1 M360.5 149.1L326.3 132.6 M345.1 179.7L309.1 165.6 M332.2 214.4L294.8 203.2 M322.4 252.0L283.9 244.2 M276.9 287.1L234.4 282.3 M274.1 330.4L231.4 328.6 M275.5 372.4L233.2 373.6 M280.9 411.8L239.5 415.7 M290.2 447.2L250.0 453.4 M302.8 477.6L264.1 485.7 M318.2 502.2L281.3 511.8 M335.7 520.6L300.7 531.2 M354.7 532.7L321.7 543.7 M374.6 538.4L343.5 549.5 M394.8 538.0L365.6 548.9 M414.8 532.0L387.4 542.3 M468.1 73.4L443.8 56.9 M449.9 63.5L423.8 46.0 M430.1 59.2L402.2 41.0 M409.2 60.9L379.4 42.4 M387.8 69.1L355.9 50.7 M366.3 83.8L332.4 66.0 M345.6 105.1L309.6 88.4 M326.3 132.6L288.4 117.4 M309.1 165.6L269.5 152.5 M294.8 203.2L253.8 192.6 M283.9 244.2L241.9 236.4 M234.4 282.3L190.5 277.3 M231.4 328.6L187.6 325.8 M233.2 373.6L189.8 372.9 M239.5 415.7L196.9 416.9 M250.0 453.4L208.4 456.3 M264.1 485.7L224.0 489.9 M281.3 511.8L242.6 517.0 M300.7 531.2L263.7 537.1 M321.7 543.7L286.5 550.0 M343.5 549.5L310.0 555.9 M365.6 548.9L333.8 555.1 M423.8 46.0L394.1 32.5 M402.2 41.0L370.9 26.9 M379.4 42.4L346.4 28.1 M355.9 50.7L321.1 36.3 M332.4 66.0L295.8 52.0 M309.6 88.4L271.2 75.0 M288.4 117.4L248.4 105.2 M269.5 152.5L228.1 141.7 M253.8 192.6L211.2 183.5 M241.9 236.4L198.5 229.3 M190.5 277.3L147.6 272.4 M187.6 325.8L144.7 321.8 M189.8 372.9L147.3 369.9 M196.9 416.9L155.0 414.8 M208.4 456.3L167.4 455.0 M224.0 489.9L184.0 489.3 M242.6 517.0L203.9 516.9 M263.7 537.1L226.2 537.4 M286.5 550.0L250.3 550.5 M310.0 555.9L275.2 556.5 M394.1 32.5L361.3 24.1 M370.9 26.9L336.9 18.3 M346.4 28.1L311.0 19.2 M321.1 36.3L284.4 27.4 M295.8 52.0L257.7 43.1 M271.2 75.0L232.0 66.4 M248.4 105.2L208.0 97.0 M228.1 141.7L186.7 134.1 M211.2 183.5L169.0 176.7 M198.5 229.3L155.8 223.4 M147.6 272.4L108.4 267.8 M144.7 321.8L105.7 316.8 M147.3 369.9L108.5 364.5 M155.0 414.8L116.6 409.1 M167.4 455.0L129.5 449.1 M184.0 489.3L146.6 483.2 M203.9 516.9L167.1 510.8 M226.2 537.4L190.2 531.2 M250.3 550.5L214.9 544.4 M275.2 556.5L240.5 550.5 M336.9 18.3L301.5 16.1 M311.0 19.2L275.0 17.0 M284.4 27.4L247.7 25.1 M257.7 43.1L220.4 40.6 M232.0 66.4L194.0 63.7 M208.0 97.0L169.6 94.0 M186.7 134.1L147.9 130.8 M169.0 176.7L130.0 173.0 M155.8 223.4L116.7 219.2 M108.4 267.8L77.5 264.1 M105.7 316.8L75.0 311.4 M108.5 364.5L77.9 357.6 M116.6 409.1L86.0 400.7 M129.5 449.1L99.0 439.5 M146.6 483.2L116.1 472.7 M167.1 510.8L136.6 499.6 M190.2 531.2L159.5 519.6 M214.9 544.4L184.2 532.7 M275.0 17.0L242.2 21.4 M247.7 25.1L215.0 29.3 M220.4 40.6L187.9 44.4 M194.0 63.7L161.8 66.9 M169.6 94.0L137.6 96.2 M147.9 130.8L116.2 131.7 M130.0 173.0L98.6 172.5 M116.7 219.2L85.5 217.2 M77.5 264.1L53.8 261.1 M75.0 311.4L51.4 305.7 M77.9 357.6L54.3 349.2 M86.0 400.7L62.3 390.0 M99.0 439.5L74.8 426.7 M116.1 472.7L91.3 458.3 M136.6 499.6L111.2 483.9 M159.5 519.6L133.4 503.2 M215.0 29.3L185.8 39.3 M187.9 44.4L159.6 53.8 M161.8 66.9L134.4 75.1 M137.6 96.2L111.1 102.9 M116.2 131.7L90.6 136.5 M98.6 172.5L73.8 175.0 M85.5 217.2L61.3 217.0 M53.8 261.1L38.3 259.1 M51.4 305.7L36.2 300.3 M54.3 349.2L38.9 340.6 M62.3 390.0L46.4 378.4 M74.8 426.7L58.3 412.5 M91.3 458.3L73.9 442.0 M111.2 483.9L92.6 466.2 M159.6 53.8L137.4 66.8 M134.4 75.1L113.7 86.7 M111.1 102.9L91.8 112.7 M90.6 136.5L72.6 143.9 M73.8 175.0L56.9 179.5 M61.3 217.0L45.3 218.3 M38.3 259.1L28.9 257.8 M36.2 300.3L27.0 295.0 M38.9 340.6L29.5 331.4 M46.4 378.4L36.4 365.7 M58.3 412.5L47.2 396.7 M73.9 442.0L61.5 423.7 M113.7 86.7L97.5 101.6 M91.8 112.7L77.5 125.2 M72.6 143.9L60.0 153.6 M56.9 179.5L45.7 185.8 M45.3 218.3L35.2 220.9 M28.9 257.8L24.9 257.0 M27.0 295.0L23.3 289.2 M29.5 331.4L25.5 320.6 M36.4 365.7L31.5 350.4 M60.0 153.6L51.9 166.9 M45.7 185.8L39.5 194.8 M35.2 220.9L30.4 225.2" stroke="#fff" stroke-width="1.0" fill="none" shape-rendering="crispEdges"/>
<g stroke="#fff" stroke-width="1" fill="none" shape-rendering="crispEdges">
<path d="M388.5 5L382.5 164"/>
</g>
<g stroke="#84847c" stroke-width="1" fill="none">
<path d="M36 200.5L94 206.5"/>
<path d="M37 204L124 209"/>
<path d="M34 198L70 201"/>
<path d="M35 207.5L60 209.5"/>
<path d="M33 202.5L82 205"/>
<path d="M38 196.5L52 198"/>
</g>
<!-- gizmo -->
<g fill="none" stroke-width="1.2">
<path d="M292.5 122L292.5 176" stroke="#0000dc"/>
<path d="M264.5 162.5L310.5 162.5" stroke="#0000dc"/>
<path d="M264.5 162.5L264.5 194" stroke="#00a000"/>
<path d="M310.5 162.5L310.5 194" stroke="#d00000"/>
<path d="M226 193.5L330 193.5" stroke="#f0e000"/>
</g>
<path d="M292.5 96L288 123L297 123Z" fill="#0000dc"/>
<path d="M212.5 193.5L233 189L233 198Z" fill="#00a000"/>
<rect x="230" y="189" width="3.5" height="9" fill="#003000"/>
<path d="M346.5 193.5L328 189L328 198Z" fill="#d00000"/>
<rect x="328" y="189" width="4" height="9" fill="#400000"/>
<path d="M293.3 84.8H297.2L293.3 89.6H297.4" fill="none" stroke="#0000dc" stroke-width="1.3"/>
<path d="M212.3 181V184.3L213.9 185.8M215.6 181V184.3L213.6 187.6L211.2 188.6" fill="none" stroke="#f0d000" stroke-width="1.2"/>
<path d="M346.2 181.2L350.2 186.8M350.2 181.2L346.2 186.8" fill="none" stroke="#f0d000" stroke-width="1.2"/>

</svg></div>
<div class="a" style="left:0;top:0;width:798px;height:3px;background:#c8c8c8"></div>
<div class="a" style="left:0;top:3px;width:798px;height:1px;background:#70707a"></div>
<div class="a" style="left:0;top:6px;width:615px;height:1px;background:#6e6e78"></div>
<div class="a" style="left:0;top:595px;width:615px;height:1px;background:#70707c"></div>
<div class="a" style="left:0;top:598px;width:617px;height:11px;background:#c2c2c2"></div><div class="a" style="left:0;top:598px;width:617px;height:1px;background:#b8bccc"></div>
<div class="hl" style="left:0;top:4px;width:617px;height:2px"></div>
<div class="hl" style="left:615px;top:4px;width:2px;height:594px"></div>
<div class="hl" style="left:0;top:596px;width:617px;height:2px"></div>
<div class="a" style="left:617px;top:4px;width:1px;height:605px;background:#e4e4e8"></div>
<!-- tabs -->
<div class="a" style="left:618px;top:31px;width:178px;height:1px;background:#f0f0f0"></div>
<div class="tab" style="left:619px"></div>
<div class="tab" style="left:649px;top:6px;height:26px;"></div>
<div class="tab" style="left:677px"></div>
<div class="tab" style="left:706px"></div>
<div class="tab" style="left:735px"></div>
<div class="tab" style="left:764px"></div>
<div class="a" style="left:650px;top:31px;width:26px;height:1px;background:#c8c8c8"></div>
<svg class="a" style="left:617px;top:0" width="181" height="32">
 <!-- create: star + arrow -->
 <g>
  <circle cx="14.6" cy="13.8" r="4" fill="#fffce8" opacity="0.85"/>
  <path d="M14.6 7 L15.6 12.6 L21 13.8 L15.6 15 L14.6 20.5 L13.6 15 L8.5 13.8 L13.6 12.6Z" fill="#fff8d0"/>
  <path d="M10.5 9.5 L14.6 13.8 L18.8 9.5 L14.6 13.8 L18.8 18 L14.6 13.8 L10.5 18" stroke="#f4ecc0" stroke-width="0.8" fill="none"/>
  <path d="M15 15.5 L18.5 25.5 L20.5 23 L24 28.5 L26 27.5 L22.5 22 L26 21.5 Z" fill="#fff" stroke="#333" stroke-width="0.8" stroke-linejoin="round"/>
 </g>
 <!-- modify: bent tube -->
 <g>
  <rect x="37" y="8.5" width="18" height="17" fill="none" stroke="#9a9a9a" stroke-width="0.6" stroke-dasharray="1 1"/>
  <circle cx="37" cy="8.5" r="0.9" fill="#000"/><circle cx="55" cy="25.5" r="0.9" fill="#000"/>
  <path d="M37.5 25.5 C37.5 16 45 9 54.5 9 L54.5 14 C48 14 42.5 19 42.5 25.5 Z" fill="#5a68a8" stroke="#2a3060" stroke-width="0.8"/>
  <path d="M39.5 24.5 C40 17 46 11 53.5 11" fill="none" stroke="#c8d0ff" stroke-width="1"/>
  <path d="M41.5 25 C42 18.5 47 13.5 53.5 13" fill="none" stroke="#1c2050" stroke-width="0.9"/>
 </g>
 <!-- hierarchy -->
 <g stroke="#3c3c6c" stroke-width="1" fill="#f0f0ff">
  <line x1="75.5" y1="16" x2="68.5" y2="23.5"/><line x1="75.5" y1="16" x2="82" y2="23.5"/><line x1="75.5" y1="16" x2="75.5" y2="23.5" stroke="#707070" stroke-width="1.4"/>
  <rect x="71.5" y="9.5" width="8" height="7"/>
  <rect x="66" y="23.5" width="4" height="4"/><rect x="73" y="23.5" width="5" height="4"/><rect x="80.5" y="23.5" width="4" height="4"/>
 </g>
 <!-- motion wheel -->
 <g>
  <path d="M101.5 11 A9.5 9.5 0 0 0 101.5 27" fill="none" stroke="#444" stroke-width="0.7"/>
  <path d="M100 9.5 A11.5 11.5 0 0 0 100 28.5" fill="none" stroke="#555" stroke-width="0.7"/>
  <circle cx="106" cy="19" r="6.6" fill="#e8e8e8" stroke="#000" stroke-width="1.6"/>
  <g stroke="#888" stroke-width="0.6"><line x1="106" y1="13.5" x2="106" y2="24.5"/><line x1="100.5" y1="19" x2="111.5" y2="19"/><line x1="102" y1="15" x2="110" y2="23"/><line x1="110" y1="15" x2="102" y2="23"/></g>
  <circle cx="106" cy="19" r="1.4" fill="#f00"/>
 </g>
 <!-- display: monitor -->
 <g>
  <rect x="123.5" y="9.5" width="19" height="14.5" rx="1.5" fill="#fff" stroke="#333" stroke-width="1.6"/>
  <rect x="127.5" y="11.5" width="3.2" height="10" rx="1.4" fill="#3848b0"/><rect x="128.6" y="12.5" width="1" height="8" fill="#c8d0ff"/>
  <path d="M134.5 14 L138.5 21.5 L130.8 21.5 Z" fill="#f00"/>
  <rect x="126.5" y="26.5" width="12" height="2" fill="#3a5a3a"/><rect x="131" y="24.5" width="3" height="2" fill="#444"/>
 </g>
 <!-- utilities: hammer -->
 <g>
  <path d="M153 9.5 L163 8.5 L168 10.5 L169 13 L164 11.5 L158 13 L153 12 Z" fill="#444" stroke="#111" stroke-width="0.6"/>
  <path d="M158.5 13 L162.5 13 L162 24 L163 27.5 L158 27.5 L159 24 Z" fill="#d03020" stroke="#222" stroke-width="0.6"/>
  <path d="M158.6 23 L162.4 23 L163 27.5 L158 27.5 Z" fill="#222"/>
 </g>
</svg>
<!-- name field -->
<div class="sunk" style="left:626px;top:37px;width:145px;height:19px"></div>
<div class="t" style="left:630px;top:41px">Plane01</div>
<div class="a" style="left:775px;top:37px;width:17px;height:20px;box-sizing:border-box;background:#96b8e4;border-left:1px solid #707070;border-top:1px solid #707070;border-right:1px solid #f0f0f0;border-bottom:1px solid #f0f0f0"></div>
<!-- modifier list -->
<div class="a" style="left:626px;top:62px;width:167px;height:24px;box-sizing:border-box;background:#e1e1e1;border-top:2px solid #6e6e6e;border-left:2px solid #6e6e6e;border-right:1px solid #f4f4f4;border-bottom:1px solid #f4f4f4"></div>
<div class="t" style="left:630px;top:68px">Modifier List</div>
<div class="a" style="left:775px;top:64px;width:17px;height:20px;box-sizing:border-box;background:#e4e4e4;border-top:1px solid #f8f8f8;border-left:1px solid #f8f8f8;border-right:2px solid #707070;border-bottom:2px solid #707070"></div>
<div class="a" style="left:779px;top:72px;width:0;height:0;border-left:4px solid transparent;border-right:4px solid transparent;border-top:4px solid #000"></div>
<!-- stack -->
<div class="a" style="left:627px;top:91px;width:164px;height:182px;box-sizing:border-box;background:#e1e1e1;border-top:1px solid #808080;border-left:1px solid #808080;border-right:1px solid #f4f4f4;border-bottom:1px solid #f4f4f4"></div>
<div class="a" style="left:628px;top:106px;width:162px;height:1px;background:#808080"></div>
<div class="a" style="left:628px;top:122px;width:162px;height:1px;background:#808080"></div>
<div class="a" style="left:628px;top:138px;width:162px;height:1px;background:#808080"></div>
<div class="a" style="left:628px;top:139px;width:162px;height:17px;background:#787878"></div>
<svg class="a" style="left:634px;top:92px" width="34" height="48">
 <g id="bulb" fill="#fff" stroke="#000" stroke-width="1">
  <path d="M5.5 9.5 C3 8 2.5 5.5 3 4 C4 1.5 6 1 7 1 C8 1 10 1.5 11 4 C11.5 5.5 11 8 8.5 9.5 Z"/>
  <rect x="5.5" y="9.5" width="3" height="3"/>
  <path d="M6 4 L8 5.5 L6 7" fill="none" stroke-width="0.8"/>
 </g>
 <use href="#bulb" y="16"/><use href="#bulb" y="32"/>
 <rect x="20" y="19" width="9" height="9" fill="#000"/><path d="M22 23.5h5M24.5 21v5" stroke="#fff" stroke-width="1.2"/>
 <rect x="20" y="35" width="9" height="9" fill="#000"/><path d="M22 39.5h5M24.5 37v5" stroke="#fff" stroke-width="1.2"/>
</svg>
<div class="t" style="left:670px;top:94px">Spherify</div>
<div class="t" style="left:670px;top:110px">Bend</div>
<div class="t" style="left:670px;top:126px">Bend</div>
<div class="t" style="left:650px;top:142px">Plane</div>
<!-- stack buttons -->
<svg class="a" style="left:625px;top:272px" width="170" height="32">
 <path d="M8 16.5h7" stroke="#000" stroke-width="1.2"/>
 <path d="M15 11.5 L18 13.5 L18 19.5 L15 21.5 Z" fill="#fff" stroke="#000"/>
 <rect x="18" y="13" width="4" height="7" fill="#888" stroke="#000"/>
 <rect x="19" y="14" width="2" height="2" fill="#fff"/>
 <path d="M22 11.5 L22 21.5" stroke="#000" stroke-width="1.5"/>
 <rect x="34.5" y="8.5" width="1" height="15" fill="#808080"/>
 <rect x="40.5" y="5.5" width="23" height="23" fill="none" stroke="#8a8a8a"/>
 <rect x="41.5" y="6.5" width="22" height="22" fill="none" stroke="#e8e8e8" stroke-width="0.6"/>
 <path d="M49 11 C50 12 51 12 52 12 L55 12 C56 12 57 12 58 11 L58 12.5 C57 13 56.5 14 56.5 15 L56.5 24 L50.5 24 L50.5 15 C50.5 14 50 13 49 12.5 Z" fill="#fff" stroke="#000" stroke-width="1.1"/>
 <rect x="70.5" y="8.5" width="1" height="15" fill="#808080"/>
 <g stroke="#8c8c8c" fill="none" stroke-width="1"><path d="M81 11 L87 21 M94 11 L88 21"/><circle cx="87.5" cy="20.5" r="2.5" fill="#eee"/></g>
 <g stroke="#8c8c8c" fill="none" stroke-width="1"><ellipse cx="112" cy="18" rx="4.5" ry="2"/><path d="M107.5 18 L107.5 22 C107.5 25 116.5 25 116.5 22 L116.5 18"/><path d="M109 14 C110 11 114 11 115 13"/></g>
 <rect x="130" y="8.5" width="1" height="15" fill="#808080"/>
 <rect x="141" y="10.5" width="14" height="13" fill="#fff" stroke="#0000b0" stroke-width="1.4"/>
 <rect x="141" y="10" width="14" height="3" fill="#0000c0"/>
 <g fill="none" stroke="#000" stroke-width="1" stroke-dasharray="1 1"><rect x="147" y="16" width="4" height="3"/><rect x="152" y="16" width="4" height="3"/><rect x="147" y="20.5" width="4" height="3"/><rect x="152" y="20.5" width="4" height="3"/></g>
</svg>
<!-- separator -->
<div class="a" style="left:622px;top:310px;width:174px;height:1px;background:#ececec"></div>
<div class="a" style="left:622px;top:312px;width:174px;height:2px;background:#000"></div>
<!-- rollout frame -->
<div class="a" style="left:621px;top:321px;width:170px;height:1px;background:#808080"></div>
<div class="a" style="left:621px;top:321px;width:1px;height:288px;background:#808080"></div>
<div class="a" style="left:622px;top:322px;width:1px;height:287px;background:#ececec"></div>
<div class="a" style="left:795px;top:321px;width:1px;height:288px;background:#ececec"></div>
<div class="a" style="left:625px;top:335px;width:164px;height:253px;box-sizing:border-box;border:1px solid #ececec"></div><div class="a" style="left:624px;top:334px;width:164px;height:253px;box-sizing:border-box;border:1px solid #808080"></div>
<div class="a" style="left:628px;top:326px;width:158px;height:16px;box-sizing:border-box;border:1px solid #000;background:#b9b9b9;box-shadow:inset 1px 1px 0 #d8d8d8"></div>
<div class="a" style="left:634px;top:334px;width:4px;height:1px;background:#000"></div>
<div class="t" style="left:628px;top:328px;width:158px;text-align:center">Parameters</div>
<div class="t r" style="left:640px;top:351px;width:67px">Length:</div>
<div class="t r" style="left:640px;top:372px;width:67px">Width:</div>
<div class="t r" style="left:620px;top:405px;width:87px">Length Segs:</div>
<div class="t r" style="left:620px;top:426px;width:87px">Width Segs:</div>
<div class="sunk" style="left:708px;top:351px;width:53px;height:15px"></div>
<div class="sunk" style="left:708px;top:372px;width:53px;height:15px"></div>
<div class="sunk" style="left:708px;top:405px;width:53px;height:15px"></div>
<div class="sunk" style="left:708px;top:426px;width:53px;height:15px"></div>
<div class="t" style="left:711px;top:352px">396.39cm</div>
<div class="t" style="left:711px;top:373px">396.39cm</div>
<div class="t" style="left:711px;top:406px">40</div>
<div class="t" style="left:711px;top:427px">40</div>
<div class="spin" style="left:763px;top:350px"><i></i></div>
<div class="spin" style="left:763px;top:371px"><i></i></div>
<div class="spin" style="left:763px;top:404px"><i></i></div>
<div class="spin" style="left:763px;top:425px"><i></i></div>
<!-- group -->
<div class="a" style="left:632px;top:457px;width:153px;height:80px;box-sizing:border-box;border:1px solid #ececec"></div><div class="a" style="left:631px;top:456px;width:153px;height:80px;box-sizing:border-box;border:1px solid #808080"></div>
<div class="t" style="left:638px;top:450px;padding:0 2px;background:#c8c8c8">Render Multipliers</div>
<div class="t r" style="left:640px;top:468px;width:67px">Scale:</div>
<div class="t r" style="left:640px;top:489px;width:67px">Density:</div>
<div class="sunk" style="left:708px;top:467px;width:53px;height:15px"></div>
<div class="sunk" style="left:708px;top:488px;width:53px;height:15px"></div>
<div class="t" style="left:711px;top:468px">1.0</div>
<div class="t" style="left:711px;top:489px">1.0</div>
<div class="spin" style="left:763px;top:466px"><i></i></div>
<div class="spin" style="left:763px;top:487px"><i></i></div>
<div class="t" style="left:646px;top:512px;letter-spacing:0">Total Faces : 3200</div>
<!-- checkboxes -->
<div class="a" style="left:635px;top:543px;width:13px;height:13px;box-sizing:border-box;background:#e4e4e4;border-top:2px solid #707070;border-left:2px solid #707070;border-right:1px solid #f4f4f4;border-bottom:1px solid #f4f4f4"></div>
<svg class="a" style="left:635px;top:543px" width="13" height="13"><path d="M3.5 6 L5.5 8.5 L10 3.5" fill="none" stroke="#000" stroke-width="2"/></svg>
<div class="t" style="left:653px;top:544px;letter-spacing:-0.2px">Generate Mapping Coords.</div>
<div class="a" style="left:635px;top:562px;width:13px;height:13px;box-sizing:border-box;background:#e4e4e4;border-top:2px solid #707070;border-left:2px solid #707070;border-right:1px solid #f4f4f4;border-bottom:1px solid #f4f4f4"></div>
<div class="t" style="left:653px;top:563px">Real-World Map Size</div>

</body></html>
